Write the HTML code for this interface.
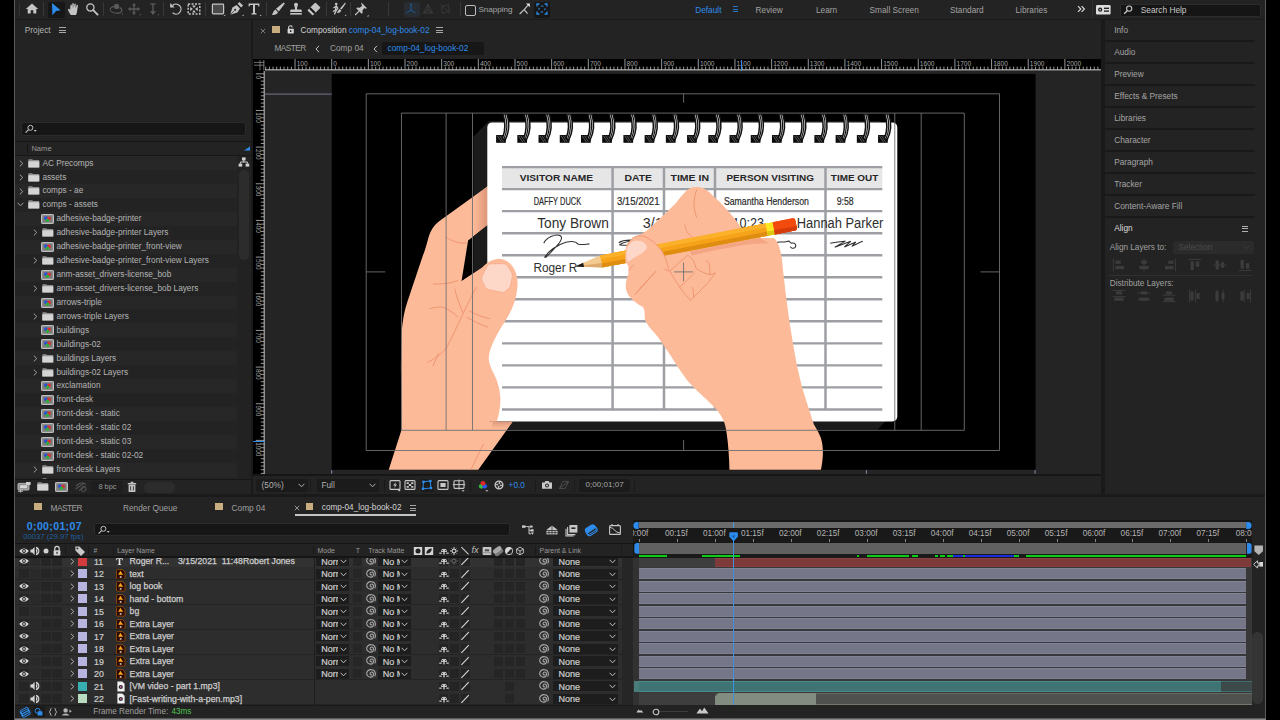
<!DOCTYPE html><html><head><meta charset="utf-8"><title>After Effects</title><style>
html,body{margin:0;padding:0;background:#000;}
body{width:1280px;height:720px;overflow:hidden;position:relative;font-family:"Liberation Sans",sans-serif;}
#app div,#app span,#app svg{position:absolute;}
#app span{white-space:nowrap;}
#app{position:absolute;left:0;top:0;width:1280px;height:720px;overflow:hidden;}
</style></head><body><div id="app">
<div style="left:14px;top:0px;width:1252px;height:720px;background:#5a5a5a;"></div>
<div style="left:15px;top:718.6px;width:1251px;height:1.4px;background:#8a8a8a;"></div>
<div style="left:15px;top:0px;width:1250px;height:718px;background:#1a1a1a;"></div>
<div style="left:15px;top:0px;width:1250px;height:18.5px;background:#232323;"></div>
<div style="left:15px;top:18.5px;width:1250px;height:1px;background:#1a1a1a;"></div>
<div style="left:19px;top:3px;width:1px;height:13px;background:#333;"></div>
<svg style="left:24.200000000000003px;top:1.3000000000000007px;" width="16" height="16" viewBox="-8.0 -8.0 16 16"><path d="M0-5.6 L6.2 0 H4.3 V4.6 H1.3 V1.2 H-1.3 V4.6 H-4.3 V0 H-6.2 Z" fill="#c4c4c4"/></svg>
<div style="left:43.3px;top:2px;width:1px;height:14px;background:#383838;"></div>
<div style="left:47.5px;top:1.5px;width:17px;height:16px;background:#171717;border-radius:2px;"></div>
<svg style="left:47.8px;top:1.1999999999999993px;" width="16" height="16" viewBox="-8.0 -8.0 16 16"><path d="M-4-6 L4.6 1.2 L0.2 2 L-3.6 6.2 Z" fill="#2d8ceb"/></svg>
<svg style="left:65.8px;top:1.3000000000000007px;" width="16" height="16" viewBox="-8.0 -8.0 16 16"><path d="M-3.2 6 C-4.5 4 -5.8 2 -6 0.2 C-5.6-0.8 -4.6-0.4 -3.8 1 L-3.6-3.8 C-3.4-4.8 -2.2-4.8 -2.2-3.8 L-1.9-1 L-1.7-5.2 C-1.5-6.2 -0.3-6.2 -0.3-5.2 L-0.1-1 L0.4-5 C0.6-5.9 1.8-5.8 1.7-4.8 L1.6-0.8 L2.6-3.8 C3-4.7 4.1-4.3 3.9-3.4 L3.2 1.5 C3.1 3.4 2.6 4.8 2 6 Z" fill="#c4c4c4"/></svg>
<svg style="left:84.0px;top:1.0px;" width="16" height="16" viewBox="-8.0 -8.0 16 16"><circle cx="-1.6" cy="-1.6" r="3.6" fill="none" stroke="#c4c4c4" stroke-width="1.3"/><path d="M1.2 1.2 L5.6 5.6" stroke="#c4c4c4" stroke-width="1.9" stroke-linecap="round"/></svg>
<div style="left:103.3px;top:2px;width:1px;height:14px;background:#383838;"></div>
<svg style="left:107.6px;top:1.1999999999999993px;" width="16" height="16" viewBox="-8.0 -8.0 16 16"><circle cx="0.6" cy="-2.6" r="2.6" fill="#5a5a5a"/><path d="M-5.6 1.5 C-6.5-1.5 -3-3 -1-2 M-5.2 2 C-3 5 4 5 5.6 2.2 C6.3 0.5 5 -1 3.6-1.4" fill="none" stroke="#5a5a5a" stroke-width="1.2"/><path d="M5.4 5.4 l1.6 0 l0 -1.6 z" fill="#5a5a5a"/></svg>
<svg style="left:126.4px;top:1.1999999999999993px;" width="16" height="16" viewBox="-8.0 -8.0 16 16"><path d="M0-6 L2.2-3.6 H0.7 V-0.7 H3.6 V-2.2 L6 0 L3.6 2.2 V0.7 H0.7 V3.6 H2.2 L0 6 L-2.2 3.6 H-0.7 V0.7 H-3.6 V2.2 L-6 0 L-3.6-2.2 V-0.7 H-0.7 V-3.6 H-2.2 Z" fill="#5a5a5a"/><path d="M5.4 6.2 l1.6 0 l0 -1.6 z" fill="#5a5a5a"/></svg>
<svg style="left:144.5px;top:1.1999999999999993px;" width="16" height="16" viewBox="-8.0 -8.0 16 16"><path d="M-2.6-5.8H2.6V-4.6H0.7V2.2H3L0 6L-3 2.2H-0.7V-4.6H-2.6Z" fill="#5a5a5a"/><path d="M4.4 6.2 l1.6 0 l0 -1.6 z" fill="#5a5a5a"/></svg>
<div style="left:163.3px;top:2px;width:1px;height:14px;background:#383838;"></div>
<svg style="left:167.8px;top:1.0px;" width="16" height="16" viewBox="-8.0 -8.0 16 16"><path d="M-3.4-3.6 A5 5 0 1 1 -3.4 3.8" fill="none" stroke="#c4c4c4" stroke-width="1.3"/><path d="M-5.8-6 V-1.6 H-1.4 Z" fill="#c4c4c4"/></svg>
<svg style="left:186.4px;top:1.0px;" width="16" height="16" viewBox="-8.0 -8.0 16 16"><rect x="-5.8" y="-5" width="11.6" height="10" fill="none" stroke="#c4c4c4" stroke-width="1.5" stroke-dasharray="2 1.4"/><path d="M0-1 L1.9-3.6 H-1.9 Z M0 1 L1.9 3.6 H-1.9 Z M-1 0 L-3.8-1.9 V1.9 Z M1 0 L3.8-1.9 V1.9 Z" fill="#c4c4c4"/></svg>
<div style="left:205.3px;top:2px;width:1px;height:14px;background:#383838;"></div>
<svg style="left:209.6px;top:1.0px;" width="16" height="16" viewBox="-8.0 -8.0 16 16"><rect x="-5.6" y="-4.9" width="11.2" height="9.8" rx="0.8" fill="#4a4a4a" stroke="#c4c4c4" stroke-width="1.2"/><path d="M5.6 7 l1.6 0 l0 -1.6 z" fill="#c4c4c4"/></svg>
<svg style="left:228.2px;top:1.0px;" width="16" height="16" viewBox="-8.0 -8.0 16 16"><path d="M-5.8 5.8 L-3.6-1.4 L0.6-4 L4 -0.6 L1.4 3.6 Z" fill="#c4c4c4"/><path d="M1.6-5.2 L3.4-7 L7 -3.4 L5.2-1.6 Z" fill="#c4c4c4"/><circle cx="-0.8" cy="0.8" r="1" fill="#232323"/><path d="M-5.8 5.8 L-1.4 1.4" stroke="#232323" stroke-width="0.7"/><path d="M6 7 l1.6 0 l0 -1.6 z" fill="#c4c4c4"/></svg>
<svg style="left:246.4px;top:1.0px;" width="16" height="16" viewBox="-8.0 -8.0 16 16"><path d="M-5.4-5.4 H5.4 V-2.4 H4.4 L4-4 H1 V4 L2.6 4.4 V5.4 H-2.6 V4.4 L-1 4 V-4 H-4 L-4.4-2.4 H-5.4 Z" fill="#c4c4c4"/><path d="M5.6 7 l1.6 0 l0 -1.6 z" fill="#c4c4c4"/></svg>
<div style="left:265.7px;top:2px;width:1px;height:14px;background:#383838;"></div>
<svg style="left:270.0px;top:1.0px;" width="16" height="16" viewBox="-8.0 -8.0 16 16"><path d="M5.6-6.6 L6.8-5.4 L0.8 2.6 L-2 -0.2 Z" fill="#c4c4c4"/><path d="M-2.6 0.6 L0 3.2 C-0.8 5.4 -3.6 6.2 -6.2 5.8 C-4.8 4.6 -4.8 1.8 -2.6 0.6 Z" fill="#c4c4c4"/></svg>
<svg style="left:288.2px;top:1.0px;" width="16" height="16" viewBox="-8.0 -8.0 16 16"><path d="M-1.1-1 C-1.1-2.2 -2-3 -2-4.2 A2 2 0 0 1 2-4.2 C2-3 1.1-2.2 1.1-1 V0.6 H4.6 Q5.8 0.6 5.8 1.8 V3 H-5.8 V1.8 Q-5.8 0.6 -4.6 0.6 H-1.1 Z" fill="#c4c4c4"/><rect x="-5.8" y="4" width="11.6" height="1.6" fill="#c4c4c4"/></svg>
<svg style="left:305.8px;top:1.0px;" width="16" height="16" viewBox="-8.0 -8.0 16 16"><g transform="rotate(45)"><rect x="-3.7" y="-5.6" width="7.4" height="11.2" rx="0.8" fill="#c4c4c4"/><rect x="-3.7" y="1.2" width="7.4" height="2.2" fill="#161616"/></g></svg>
<div style="left:325.7px;top:2px;width:1px;height:14px;background:#383838;"></div>
<svg style="left:330.6px;top:1.0px;" width="16" height="16" viewBox="-8.0 -8.0 16 16"><circle cx="-2.8" cy="-5" r="1.3" fill="#c4c4c4"/><path d="M-5.6-1 L-2.6-3 L-1.2-0.8 L-3 2 L-4.6 5.4 M-2.8-2.6 L-3.6 1.2 L-6 2.6" fill="none" stroke="#c4c4c4" stroke-width="1.3"/><path d="M6.2-6.4 L6.8-5.6 L2.6 0.6 L1 -0.6 Z" fill="#c4c4c4"/><path d="M0.6 0 L2.2 1.4 C1.6 3.4 -0.4 4.2 -2.2 3.8 C-1.2 3 -1 1 0.6 0 Z" fill="#c4c4c4"/><path d="M5.6 7 l1.6 0 l0 -1.6 z" fill="#c4c4c4"/></svg>
<div style="left:349.5px;top:2px;width:1px;height:14px;background:#383838;"></div>
<svg style="left:352.6px;top:0.5999999999999996px;" width="16" height="16" viewBox="-8.0 -8.0 16 16"><path d="M0.4-6.4 L6-0.8 L4.8-0.2 L3.4-1 L1.4 1.6 L1.6 4 L0.6 4.8 L-4.6-0.4 L-3.8-1.4 L-1.4-1.2 L1.2-3.2 L0.4-4.6 Z" fill="#c4c4c4"/><path d="M-2 2.2 L-5.8 6" stroke="#c4c4c4" stroke-width="1.2"/><path d="M6 7.4 l1.6 0 l0 -1.6 z" fill="#c4c4c4"/></svg>
<div style="left:388.3px;top:2px;width:1px;height:14px;background:#383838;"></div>
<div style="left:403.5px;top:2px;width:16.5px;height:15px;background:#282d33;border-radius:2px;"></div>
<svg style="left:403.3px;top:1.4000000000000004px;" width="16" height="16" viewBox="-8.0 -8.0 16 16"><path d="M0-4.6 V1 L-4.6 4 M0 1 L4.6 4" fill="none" stroke="#1f5a96" stroke-width="1"/><circle cx="0" cy="-4.6" r="0.9" fill="#1f5a96"/></svg>
<svg style="left:420.0px;top:1.4000000000000004px;" width="16" height="16" viewBox="-8.0 -8.0 16 16"><path d="M0-4.6 V1 L-4.6 4 M0 1 L4.6 4 M0-4.6 L-4.6 4 H4.6 Z" fill="none" stroke="#3e3e3e" stroke-width="0.9"/></svg>
<svg style="left:437.0px;top:1.1999999999999993px;" width="16" height="16" viewBox="-8.0 -8.0 16 16"><path d="M-3.6-2.4 L3.4-4.4 L4.4 2 L-2.6 4.4 Z M-4.8-5 L5.2 4.6" fill="none" stroke="#3a3a3a" stroke-width="0.9"/></svg>
<div style="left:459.5px;top:2px;width:1px;height:14px;background:#383838;"></div>
<div style="left:465px;top:5px;width:10.6px;height:10.6px;background:transparent;border:1.4px solid #bdbdbd;border-radius:2px;box-sizing:border-box;"></div>
<span style="left:478.4px;top:3.8000000000000007px;font-size:8.1px;line-height:12px;color:#a6a6a6;">Snapping</span>
<svg style="left:516.0px;top:1.0px;" width="16" height="16" viewBox="-8.0 -8.0 16 16"><path d="M-4.4 5 L0.2 0.6 L3.6 4.6 M0.2 0.6 L3.8-3.6" fill="none" stroke="#c4c4c4" stroke-width="1.2"/><path d="M2-5.6 H5.8 V-1.8 Z" fill="#e6e6e6"/></svg>
<div style="left:534.4px;top:1.5px;width:15.6px;height:16px;background:#171717;border-radius:2px;"></div>
<svg style="left:534.2px;top:1.1999999999999993px;" width="16" height="16" viewBox="-8.0 -8.0 16 16"><circle cx="0" cy="0" r="3" fill="none" stroke="#2d8ceb" stroke-width="1.1" stroke-dasharray="2.4 2.3" stroke-dashoffset="1.2"/><path d="M-5-2.6 V-5 H-2.6 M2.6-5 H5 V-2.6 M5 2.6 V5 H2.6 M-2.6 5 H-5 V2.6" fill="none" stroke="#2d8ceb" stroke-width="1.3"/></svg>
<span style="left:695.2px;top:3.8000000000000007px;font-size:8.3px;line-height:12px;color:#2d8ceb;">Default</span>
<div style="left:733px;top:6.0px;width:5.4px;height:1px;background:#2676c8;"></div>
<div style="left:733px;top:8.6px;width:5.4px;height:1px;background:#2676c8;"></div>
<div style="left:733px;top:11.2px;width:5.4px;height:1px;background:#2676c8;"></div>
<span style="left:755.6px;top:3.8000000000000007px;font-size:8.3px;line-height:12px;color:#a2a2a2;">Review</span>
<span style="left:816px;top:3.8000000000000007px;font-size:8.3px;line-height:12px;color:#a2a2a2;">Learn</span>
<span style="left:869.5px;top:3.8000000000000007px;font-size:8.3px;line-height:12px;color:#a2a2a2;">Small Screen</span>
<span style="left:950px;top:3.8000000000000007px;font-size:8.3px;line-height:12px;color:#a2a2a2;">Standard</span>
<span style="left:1015.5px;top:3.8000000000000007px;font-size:8.3px;line-height:12px;color:#a2a2a2;">Libraries</span>
<svg style="left:1072.5px;top:0.8000000000000007px;" width="16" height="16" viewBox="-8.0 -8.0 16 16"><path d="M-3-2.8 L-0.2 0 L-3 2.8 M0.6-2.8 L3.4 0 L0.6 2.8" fill="none" stroke="#d6d6d6" stroke-width="1.2"/></svg>
<div style="left:1092.3px;top:1px;width:1px;height:17px;background:#303030;"></div>
<svg style="left:1096.4px;top:5.4px" width="15" height="10" viewBox="0 0 15 10"><rect x="0" y="0" width="14.6" height="9.4" rx="1.2" fill="#dcdcdc"/><circle cx="4.2" cy="4.7" r="2.1" fill="#232323"/><circle cx="4.2" cy="4.7" r="0.8" fill="#dcdcdc"/><rect x="8" y="2.6" width="5" height="1.4" fill="#232323"/><rect x="8" y="5.4" width="5" height="1.4" fill="#232323"/></svg>
<div style="left:1120px;top:3.6px;width:141px;height:13px;background:#151515;border:1px solid #2c2c2c;border-radius:2px;box-sizing:border-box;"></div>
<svg style="left:1120.4px;top:1.5999999999999996px;" width="16" height="16" viewBox="-8.0 -8.0 16 16"><circle cx="1.2" cy="-1.4" r="2.6" fill="none" stroke="#c8c8c8" stroke-width="1.1"/><path d="M-0.8 0.8 L-3.8 3.8" stroke="#c8c8c8" stroke-width="1.3"/></svg>
<span style="left:1140.8px;top:4.0px;font-size:8.3px;line-height:12px;color:#c8c8c8;">Search Help</span>
<div style="left:15px;top:19.5px;width:235.6px;height:474.5px;background:#232323;"></div>
<span style="left:24.8px;top:24.0px;font-size:8.3px;line-height:12px;color:#b4b4b4;">Project</span>
<div style="left:59.2px;top:27.2px;width:6.6px;height:1px;background:#a8a8a8;"></div>
<div style="left:59.2px;top:29.7px;width:6.6px;height:1px;background:#a8a8a8;"></div>
<div style="left:59.2px;top:32.2px;width:6.6px;height:1px;background:#a8a8a8;"></div>
<div style="left:21px;top:121.5px;width:224.5px;height:14px;background:#161616;border:1px solid #2b2b2b;border-radius:2px;box-sizing:border-box;"></div>
<svg style="left:24px;top:123.5px" width="14" height="10" viewBox="0 0 14 10"><circle cx="6.4" cy="3.8" r="2.5" fill="none" stroke="#c0c0c0" stroke-width="1"/><path d="M4.6 5.6 L1.6 8.6" stroke="#c0c0c0" stroke-width="1.2"/><path d="M9.6 6 h3.2 l-1.6 1.8 z" fill="#c0c0c0"/></svg>
<div style="left:15px;top:141px;width:235.6px;height:1.4px;background:#161616;"></div>
<div style="left:15px;top:155px;width:235.6px;height:1.2px;background:#161616;"></div>
<div style="left:26.8px;top:144px;width:1px;height:9px;background:#161616;"></div>
<span style="left:31.4px;top:142.6px;font-size:7.6px;line-height:12px;color:#9a9a9a;">Name</span>
<svg style="left:243.5px;top:146px" width="6" height="5" viewBox="0 0 6 5"><path d="M0 4.6 L6 0.4 V4.6 Z" fill="#2d8ceb"/></svg>
<div style="left:237.2px;top:156.2px;width:13.4px;height:322px;background:#222222;"></div>
<div style="left:238.6px;top:169.5px;width:10.2px;height:90px;background:#2c2c2c;border-radius:5px;"></div>
<svg style="left:237.5px;top:157px" width="12" height="11" viewBox="0 0 12 11"><g fill="#d0d0d0"><rect x="4" y="0.4" width="3.6" height="3"/><rect x="0.6" y="6.6" width="3.6" height="3"/><rect x="7.6" y="6.6" width="3.6" height="3"/></g><path d="M5.8 3 V5 M2.4 6.6 V5 H9.4 V6.6" fill="none" stroke="#d0d0d0" stroke-width="1"/></svg>
<div style="left:15px;top:156.23499999999999px;width:222.2px;height:13.93px;background:#272727;"></div>
<svg style="left:18.6px;top:159.7px" width="5" height="7" viewBox="0 0 5 7"><path d="M0.8 0.6 L3.8 3.5 L0.8 6.4" fill="none" stroke="#a0a0a0" stroke-width="1"/></svg>
<svg style="left:28px;top:158.6px" width="12" height="9" viewBox="0 0 12 9"><path d="M0.3 1 Q0.3 0.2 1 0.2 H4.2 L5 1 H10.6 Q11.3 1 11.3 1.8 V8 Q11.3 8.6 10.6 8.6 H1 Q0.3 8.6 0.3 8 Z" fill="#8e8e8e"/><rect x="0.3" y="2.2" width="11" height="6.4" rx="0.6" fill="#d4d4d4"/></svg>
<span style="left:42.4px;top:157.6px;font-size:8.27px;line-height:12px;color:#b4b4b4;">AC Precomps</span>
<svg style="left:18.6px;top:173.63px" width="5" height="7" viewBox="0 0 5 7"><path d="M0.8 0.6 L3.8 3.5 L0.8 6.4" fill="none" stroke="#a0a0a0" stroke-width="1"/></svg>
<svg style="left:28px;top:172.53px" width="12" height="9" viewBox="0 0 12 9"><path d="M0.3 1 Q0.3 0.2 1 0.2 H4.2 L5 1 H10.6 Q11.3 1 11.3 1.8 V8 Q11.3 8.6 10.6 8.6 H1 Q0.3 8.6 0.3 8 Z" fill="#8e8e8e"/><rect x="0.3" y="2.2" width="11" height="6.4" rx="0.6" fill="#d4d4d4"/></svg>
<span style="left:42.4px;top:171.53px;font-size:8.27px;line-height:12px;color:#b4b4b4;">assets</span>
<div style="left:15px;top:184.095px;width:222.2px;height:13.93px;background:#272727;"></div>
<svg style="left:18.6px;top:187.56px" width="5" height="7" viewBox="0 0 5 7"><path d="M0.8 0.6 L3.8 3.5 L0.8 6.4" fill="none" stroke="#a0a0a0" stroke-width="1"/></svg>
<svg style="left:28px;top:186.46px" width="12" height="9" viewBox="0 0 12 9"><path d="M0.3 1 Q0.3 0.2 1 0.2 H4.2 L5 1 H10.6 Q11.3 1 11.3 1.8 V8 Q11.3 8.6 10.6 8.6 H1 Q0.3 8.6 0.3 8 Z" fill="#8e8e8e"/><rect x="0.3" y="2.2" width="11" height="6.4" rx="0.6" fill="#d4d4d4"/></svg>
<span style="left:42.4px;top:185.46px;font-size:8.27px;line-height:12px;color:#b4b4b4;">comps - ae</span>
<svg style="left:17.4px;top:202.48999999999998px" width="7" height="5" viewBox="0 0 7 5"><path d="M0.6 0.8 L3.5 3.8 L6.4 0.8" fill="none" stroke="#a0a0a0" stroke-width="1"/></svg>
<svg style="left:28px;top:200.39px" width="12" height="9" viewBox="0 0 12 9"><path d="M0.3 1 Q0.3 0.2 1 0.2 H4.2 L5 1 H10.6 Q11.3 1 11.3 1.8 V8 Q11.3 8.6 10.6 8.6 H1 Q0.3 8.6 0.3 8 Z" fill="#8e8e8e"/><rect x="0.3" y="2.2" width="11" height="6.4" rx="0.6" fill="#d4d4d4"/></svg>
<span style="left:42.4px;top:199.39px;font-size:8.27px;line-height:12px;color:#b4b4b4;">comps - assets</span>
<div style="left:15px;top:211.95499999999998px;width:222.2px;height:13.93px;background:#272727;"></div>
<svg style="left:41px;top:213.92px" width="13" height="10" viewBox="0 0 13 10"><rect x="0.4" y="0.4" width="12.2" height="9.2" rx="1" fill="#9a9a9a" stroke="#e4e4e4" stroke-width="0.8"/><rect x="1.6" y="1.6" width="9.8" height="6.8" fill="#7c7c7c"/><circle cx="5" cy="4.2" r="1.9" fill="#2c50d8"/><circle cx="8" cy="4.4" r="1.9" fill="#d83030"/><circle cx="6.4" cy="6.2" r="1.8" fill="#2fae3a"/></svg>
<span style="left:56.4px;top:213.32px;font-size:8.27px;line-height:12px;color:#b4b4b4;">adhesive-badge-printer</span>
<svg style="left:32.6px;top:229.35px" width="5" height="7" viewBox="0 0 5 7"><path d="M0.8 0.6 L3.8 3.5 L0.8 6.4" fill="none" stroke="#a0a0a0" stroke-width="1"/></svg>
<svg style="left:42px;top:228.25px" width="12" height="9" viewBox="0 0 12 9"><path d="M0.3 1 Q0.3 0.2 1 0.2 H4.2 L5 1 H10.6 Q11.3 1 11.3 1.8 V8 Q11.3 8.6 10.6 8.6 H1 Q0.3 8.6 0.3 8 Z" fill="#8e8e8e"/><rect x="0.3" y="2.2" width="11" height="6.4" rx="0.6" fill="#d4d4d4"/></svg>
<span style="left:56.4px;top:227.25px;font-size:8.27px;line-height:12px;color:#b4b4b4;">adhesive-badge-printer Layers</span>
<div style="left:15px;top:239.81499999999997px;width:222.2px;height:13.93px;background:#272727;"></div>
<svg style="left:41px;top:241.77999999999997px" width="13" height="10" viewBox="0 0 13 10"><rect x="0.4" y="0.4" width="12.2" height="9.2" rx="1" fill="#9a9a9a" stroke="#e4e4e4" stroke-width="0.8"/><rect x="1.6" y="1.6" width="9.8" height="6.8" fill="#7c7c7c"/><circle cx="5" cy="4.2" r="1.9" fill="#2c50d8"/><circle cx="8" cy="4.4" r="1.9" fill="#d83030"/><circle cx="6.4" cy="6.2" r="1.8" fill="#2fae3a"/></svg>
<span style="left:56.4px;top:241.17999999999998px;font-size:8.27px;line-height:12px;color:#b4b4b4;">adhesive-badge-printer_front-view</span>
<svg style="left:32.6px;top:257.21px" width="5" height="7" viewBox="0 0 5 7"><path d="M0.8 0.6 L3.8 3.5 L0.8 6.4" fill="none" stroke="#a0a0a0" stroke-width="1"/></svg>
<svg style="left:42px;top:256.10999999999996px" width="12" height="9" viewBox="0 0 12 9"><path d="M0.3 1 Q0.3 0.2 1 0.2 H4.2 L5 1 H10.6 Q11.3 1 11.3 1.8 V8 Q11.3 8.6 10.6 8.6 H1 Q0.3 8.6 0.3 8 Z" fill="#8e8e8e"/><rect x="0.3" y="2.2" width="11" height="6.4" rx="0.6" fill="#d4d4d4"/></svg>
<span style="left:56.4px;top:255.10999999999996px;font-size:8.27px;line-height:12px;color:#b4b4b4;">adhesive-badge-printer_front-view Layers</span>
<div style="left:15px;top:267.675px;width:222.2px;height:13.93px;background:#272727;"></div>
<svg style="left:41px;top:269.64px" width="13" height="10" viewBox="0 0 13 10"><rect x="0.4" y="0.4" width="12.2" height="9.2" rx="1" fill="#9a9a9a" stroke="#e4e4e4" stroke-width="0.8"/><rect x="1.6" y="1.6" width="9.8" height="6.8" fill="#7c7c7c"/><circle cx="5" cy="4.2" r="1.9" fill="#2c50d8"/><circle cx="8" cy="4.4" r="1.9" fill="#d83030"/><circle cx="6.4" cy="6.2" r="1.8" fill="#2fae3a"/></svg>
<span style="left:56.4px;top:269.03999999999996px;font-size:8.27px;line-height:12px;color:#b4b4b4;">anm-asset_drivers-license_bob</span>
<svg style="left:32.6px;top:285.07px" width="5" height="7" viewBox="0 0 5 7"><path d="M0.8 0.6 L3.8 3.5 L0.8 6.4" fill="none" stroke="#a0a0a0" stroke-width="1"/></svg>
<svg style="left:42px;top:283.96999999999997px" width="12" height="9" viewBox="0 0 12 9"><path d="M0.3 1 Q0.3 0.2 1 0.2 H4.2 L5 1 H10.6 Q11.3 1 11.3 1.8 V8 Q11.3 8.6 10.6 8.6 H1 Q0.3 8.6 0.3 8 Z" fill="#8e8e8e"/><rect x="0.3" y="2.2" width="11" height="6.4" rx="0.6" fill="#d4d4d4"/></svg>
<span style="left:56.4px;top:282.96999999999997px;font-size:8.27px;line-height:12px;color:#b4b4b4;">anm-asset_drivers-license_bob Layers</span>
<div style="left:15px;top:295.535px;width:222.2px;height:13.93px;background:#272727;"></div>
<svg style="left:41px;top:297.5px" width="13" height="10" viewBox="0 0 13 10"><rect x="0.4" y="0.4" width="12.2" height="9.2" rx="1" fill="#9a9a9a" stroke="#e4e4e4" stroke-width="0.8"/><rect x="1.6" y="1.6" width="9.8" height="6.8" fill="#7c7c7c"/><circle cx="5" cy="4.2" r="1.9" fill="#2c50d8"/><circle cx="8" cy="4.4" r="1.9" fill="#d83030"/><circle cx="6.4" cy="6.2" r="1.8" fill="#2fae3a"/></svg>
<span style="left:56.4px;top:296.9px;font-size:8.27px;line-height:12px;color:#b4b4b4;">arrows-triple</span>
<svg style="left:32.6px;top:312.92999999999995px" width="5" height="7" viewBox="0 0 5 7"><path d="M0.8 0.6 L3.8 3.5 L0.8 6.4" fill="none" stroke="#a0a0a0" stroke-width="1"/></svg>
<svg style="left:42px;top:311.8299999999999px" width="12" height="9" viewBox="0 0 12 9"><path d="M0.3 1 Q0.3 0.2 1 0.2 H4.2 L5 1 H10.6 Q11.3 1 11.3 1.8 V8 Q11.3 8.6 10.6 8.6 H1 Q0.3 8.6 0.3 8 Z" fill="#8e8e8e"/><rect x="0.3" y="2.2" width="11" height="6.4" rx="0.6" fill="#d4d4d4"/></svg>
<span style="left:56.4px;top:310.8299999999999px;font-size:8.27px;line-height:12px;color:#b4b4b4;">arrows-triple Layers</span>
<div style="left:15px;top:323.39500000000004px;width:222.2px;height:13.93px;background:#272727;"></div>
<svg style="left:41px;top:325.36px" width="13" height="10" viewBox="0 0 13 10"><rect x="0.4" y="0.4" width="12.2" height="9.2" rx="1" fill="#9a9a9a" stroke="#e4e4e4" stroke-width="0.8"/><rect x="1.6" y="1.6" width="9.8" height="6.8" fill="#7c7c7c"/><circle cx="5" cy="4.2" r="1.9" fill="#2c50d8"/><circle cx="8" cy="4.4" r="1.9" fill="#d83030"/><circle cx="6.4" cy="6.2" r="1.8" fill="#2fae3a"/></svg>
<span style="left:56.4px;top:324.76px;font-size:8.27px;line-height:12px;color:#b4b4b4;">buildings</span>
<svg style="left:41px;top:339.28999999999996px" width="13" height="10" viewBox="0 0 13 10"><rect x="0.4" y="0.4" width="12.2" height="9.2" rx="1" fill="#9a9a9a" stroke="#e4e4e4" stroke-width="0.8"/><rect x="1.6" y="1.6" width="9.8" height="6.8" fill="#7c7c7c"/><circle cx="5" cy="4.2" r="1.9" fill="#2c50d8"/><circle cx="8" cy="4.4" r="1.9" fill="#d83030"/><circle cx="6.4" cy="6.2" r="1.8" fill="#2fae3a"/></svg>
<span style="left:56.4px;top:338.68999999999994px;font-size:8.27px;line-height:12px;color:#b4b4b4;">buildings-02</span>
<div style="left:15px;top:351.255px;width:222.2px;height:13.93px;background:#272727;"></div>
<svg style="left:32.6px;top:354.71999999999997px" width="5" height="7" viewBox="0 0 5 7"><path d="M0.8 0.6 L3.8 3.5 L0.8 6.4" fill="none" stroke="#a0a0a0" stroke-width="1"/></svg>
<svg style="left:42px;top:353.61999999999995px" width="12" height="9" viewBox="0 0 12 9"><path d="M0.3 1 Q0.3 0.2 1 0.2 H4.2 L5 1 H10.6 Q11.3 1 11.3 1.8 V8 Q11.3 8.6 10.6 8.6 H1 Q0.3 8.6 0.3 8 Z" fill="#8e8e8e"/><rect x="0.3" y="2.2" width="11" height="6.4" rx="0.6" fill="#d4d4d4"/></svg>
<span style="left:56.4px;top:352.61999999999995px;font-size:8.27px;line-height:12px;color:#b4b4b4;">buildings Layers</span>
<svg style="left:32.6px;top:368.65px" width="5" height="7" viewBox="0 0 5 7"><path d="M0.8 0.6 L3.8 3.5 L0.8 6.4" fill="none" stroke="#a0a0a0" stroke-width="1"/></svg>
<svg style="left:42px;top:367.54999999999995px" width="12" height="9" viewBox="0 0 12 9"><path d="M0.3 1 Q0.3 0.2 1 0.2 H4.2 L5 1 H10.6 Q11.3 1 11.3 1.8 V8 Q11.3 8.6 10.6 8.6 H1 Q0.3 8.6 0.3 8 Z" fill="#8e8e8e"/><rect x="0.3" y="2.2" width="11" height="6.4" rx="0.6" fill="#d4d4d4"/></svg>
<span style="left:56.4px;top:366.54999999999995px;font-size:8.27px;line-height:12px;color:#b4b4b4;">buildings-02 Layers</span>
<div style="left:15px;top:379.115px;width:222.2px;height:13.93px;background:#272727;"></div>
<svg style="left:41px;top:381.08px" width="13" height="10" viewBox="0 0 13 10"><rect x="0.4" y="0.4" width="12.2" height="9.2" rx="1" fill="#9a9a9a" stroke="#e4e4e4" stroke-width="0.8"/><rect x="1.6" y="1.6" width="9.8" height="6.8" fill="#7c7c7c"/><circle cx="5" cy="4.2" r="1.9" fill="#2c50d8"/><circle cx="8" cy="4.4" r="1.9" fill="#d83030"/><circle cx="6.4" cy="6.2" r="1.8" fill="#2fae3a"/></svg>
<span style="left:56.4px;top:380.47999999999996px;font-size:8.27px;line-height:12px;color:#b4b4b4;">exclamation</span>
<svg style="left:41px;top:395.01px" width="13" height="10" viewBox="0 0 13 10"><rect x="0.4" y="0.4" width="12.2" height="9.2" rx="1" fill="#9a9a9a" stroke="#e4e4e4" stroke-width="0.8"/><rect x="1.6" y="1.6" width="9.8" height="6.8" fill="#7c7c7c"/><circle cx="5" cy="4.2" r="1.9" fill="#2c50d8"/><circle cx="8" cy="4.4" r="1.9" fill="#d83030"/><circle cx="6.4" cy="6.2" r="1.8" fill="#2fae3a"/></svg>
<span style="left:56.4px;top:394.40999999999997px;font-size:8.27px;line-height:12px;color:#b4b4b4;">front-desk</span>
<div style="left:15px;top:406.975px;width:222.2px;height:13.93px;background:#272727;"></div>
<svg style="left:41px;top:408.94px" width="13" height="10" viewBox="0 0 13 10"><rect x="0.4" y="0.4" width="12.2" height="9.2" rx="1" fill="#9a9a9a" stroke="#e4e4e4" stroke-width="0.8"/><rect x="1.6" y="1.6" width="9.8" height="6.8" fill="#7c7c7c"/><circle cx="5" cy="4.2" r="1.9" fill="#2c50d8"/><circle cx="8" cy="4.4" r="1.9" fill="#d83030"/><circle cx="6.4" cy="6.2" r="1.8" fill="#2fae3a"/></svg>
<span style="left:56.4px;top:408.34px;font-size:8.27px;line-height:12px;color:#b4b4b4;">front-desk - static</span>
<svg style="left:41px;top:422.87px" width="13" height="10" viewBox="0 0 13 10"><rect x="0.4" y="0.4" width="12.2" height="9.2" rx="1" fill="#9a9a9a" stroke="#e4e4e4" stroke-width="0.8"/><rect x="1.6" y="1.6" width="9.8" height="6.8" fill="#7c7c7c"/><circle cx="5" cy="4.2" r="1.9" fill="#2c50d8"/><circle cx="8" cy="4.4" r="1.9" fill="#d83030"/><circle cx="6.4" cy="6.2" r="1.8" fill="#2fae3a"/></svg>
<span style="left:56.4px;top:422.27px;font-size:8.27px;line-height:12px;color:#b4b4b4;">front-desk - static 02</span>
<div style="left:15px;top:434.83500000000004px;width:222.2px;height:13.93px;background:#272727;"></div>
<svg style="left:41px;top:436.8px" width="13" height="10" viewBox="0 0 13 10"><rect x="0.4" y="0.4" width="12.2" height="9.2" rx="1" fill="#9a9a9a" stroke="#e4e4e4" stroke-width="0.8"/><rect x="1.6" y="1.6" width="9.8" height="6.8" fill="#7c7c7c"/><circle cx="5" cy="4.2" r="1.9" fill="#2c50d8"/><circle cx="8" cy="4.4" r="1.9" fill="#d83030"/><circle cx="6.4" cy="6.2" r="1.8" fill="#2fae3a"/></svg>
<span style="left:56.4px;top:436.2px;font-size:8.27px;line-height:12px;color:#b4b4b4;">front-desk - static 03</span>
<svg style="left:41px;top:450.72999999999996px" width="13" height="10" viewBox="0 0 13 10"><rect x="0.4" y="0.4" width="12.2" height="9.2" rx="1" fill="#9a9a9a" stroke="#e4e4e4" stroke-width="0.8"/><rect x="1.6" y="1.6" width="9.8" height="6.8" fill="#7c7c7c"/><circle cx="5" cy="4.2" r="1.9" fill="#2c50d8"/><circle cx="8" cy="4.4" r="1.9" fill="#d83030"/><circle cx="6.4" cy="6.2" r="1.8" fill="#2fae3a"/></svg>
<span style="left:56.4px;top:450.12999999999994px;font-size:8.27px;line-height:12px;color:#b4b4b4;">front-desk - static 02-02</span>
<div style="left:15px;top:462.695px;width:222.2px;height:13.93px;background:#272727;"></div>
<svg style="left:32.6px;top:466.15999999999997px" width="5" height="7" viewBox="0 0 5 7"><path d="M0.8 0.6 L3.8 3.5 L0.8 6.4" fill="none" stroke="#a0a0a0" stroke-width="1"/></svg>
<svg style="left:42px;top:465.05999999999995px" width="12" height="9" viewBox="0 0 12 9"><path d="M0.3 1 Q0.3 0.2 1 0.2 H4.2 L5 1 H10.6 Q11.3 1 11.3 1.8 V8 Q11.3 8.6 10.6 8.6 H1 Q0.3 8.6 0.3 8 Z" fill="#8e8e8e"/><rect x="0.3" y="2.2" width="11" height="6.4" rx="0.6" fill="#d4d4d4"/></svg>
<span style="left:56.4px;top:464.05999999999995px;font-size:8.27px;line-height:12px;color:#b4b4b4;">front-desk Layers</span>
<svg style="left:42px;top:477.79999999999995px" width="12" height="9" viewBox="0 0 12 9"><path d="M0.3 1 Q0.3 0.2 1 0.2 H4.2 L5 1 H10.6 Q11.3 1 11.3 1.8 V8 Q11.3 8.6 10.6 8.6 H1 Q0.3 8.6 0.3 8 Z" fill="#8e8e8e"/><rect x="0.3" y="2.2" width="11" height="6.4" rx="0.6" fill="#d4d4d4"/></svg>
<div style="left:15px;top:478.6px;width:235.6px;height:1.2px;background:#161616;"></div>
<div style="left:15px;top:479.8px;width:235.6px;height:14.2px;background:#232323;"></div>
<svg style="left:16.4px;top:478.8px;" width="16" height="16" viewBox="-8.0 -8.0 16 16"><rect x="-6" y="-3.6" width="11" height="6.6" rx="0.8" fill="#8c8c8c" stroke="#d0d0d0" stroke-width="0.8"/><rect x="-4" y="-1.8" width="7" height="3" fill="#d8d8d8"/><path d="M-6 4.2 H-1 M-3.6 3V5.4" stroke="#d0d0d0" stroke-width="0.9"/><rect x="2" y="-5" width="4.6" height="3" fill="#d0d0d0"/></svg>
<svg style="left:37.2px;top:482.0px" width="12" height="9" viewBox="0 0 12 9"><path d="M0.3 1 Q0.3 0.2 1 0.2 H4.2 L5 1 H10.6 Q11.3 1 11.3 1.8 V8 Q11.3 8.6 10.6 8.6 H1 Q0.3 8.6 0.3 8 Z" fill="#8e8e8e"/><rect x="0.3" y="2.2" width="11" height="6.4" rx="0.6" fill="#d4d4d4"/></svg>
<svg style="left:55px;top:481.8px" width="13" height="10" viewBox="0 0 13 10"><rect x="0.4" y="0.4" width="12.2" height="9.2" rx="1" fill="#9a9a9a" stroke="#e4e4e4" stroke-width="0.8"/><rect x="1.6" y="1.6" width="9.8" height="6.8" fill="#7c7c7c"/><circle cx="5" cy="4.2" r="1.9" fill="#2c50d8"/><circle cx="8" cy="4.4" r="1.9" fill="#d83030"/><circle cx="6.4" cy="6.2" r="1.8" fill="#2fae3a"/></svg>
<svg style="left:72.6px;top:478.8px;" width="16" height="16" viewBox="-8.0 -8.0 16 16"><path d="M-5-1 C-2-4 2-4.6 5-2.6 M-5.4 2 L3-3.6 M-2 3.6 L4.6-1" fill="none" stroke="#555" stroke-width="1.1"/><circle cx="2.6" cy="2" r="2.4" fill="none" stroke="#555" stroke-width="1"/></svg>
<div style="left:90.6px;top:480.8px;width:32px;height:12px;background:#1e1e1e;border-radius:2px;"></div>
<span style="left:98.4px;top:481.0px;font-size:7.4px;line-height:12px;color:#9a9a9a;">8 bpc</span>
<svg style="left:124.4px;top:478.8px;" width="16" height="16" viewBox="-8.0 -8.0 16 16"><path d="M-3.4-2.4 H3.4 V4.4 Q3.4 5 2.8 5 H-2.8 Q-3.4 5 -3.4 4.4 Z" fill="#c4c4c4"/><path d="M-4.2-3.4 H4.2 M-1.4-4.6 H1.4" stroke="#c4c4c4" stroke-width="1.1"/><path d="M-1.4-0.8V3.4 M1.4-0.8V3.4" stroke="#232323" stroke-width="0.8"/></svg>
<div style="left:143.8px;top:482.4px;width:31.4px;height:10.2px;background:#2c2c2c;border-radius:5.1px;"></div>
<div style="left:253.2px;top:19.5px;width:848.2px;height:474.5px;background:#232323;"></div>
<svg style="left:259.8px;top:27.6px" width="6" height="6" viewBox="0 0 6 6"><path d="M0.8 0.8 L5.2 5.2 M5.2 0.8 L0.8 5.2" stroke="#858585" stroke-width="0.9"/></svg>
<div style="left:272px;top:25.6px;width:7.6px;height:7.6px;background:#c8ae7e;"></div>
<svg style="left:286.6px;top:24.6px" width="8" height="9" viewBox="0 0 8 9"><path d="M1.6 4 V2.6 A1.8 1.8 0 0 1 5.2 2.4" fill="none" stroke="#d8d8d8" stroke-width="1.1"/><rect x="0.6" y="3.8" width="6.2" height="4.6" rx="0.6" fill="#d8d8d8"/><rect x="3" y="5.2" width="1.4" height="1.8" fill="#232323"/></svg>
<span style="left:300.4px;top:24.0px;font-size:8.3px;line-height:12px;color:#d2d2d2;">Composition</span>
<span style="left:348.8px;top:24.0px;font-size:8.3px;line-height:12px;color:#2d8ceb;">comp-04_log-book-02</span>
<div style="left:436.4px;top:27.2px;width:6.2px;height:1px;background:#a8a8a8;"></div>
<div style="left:436.4px;top:29.7px;width:6.2px;height:1px;background:#a8a8a8;"></div>
<div style="left:436.4px;top:32.2px;width:6.2px;height:1px;background:#a8a8a8;"></div>
<span style="left:274.4px;top:42.4px;font-size:8.3px;line-height:12px;color:#a0a0a0;letter-spacing:-0.55px;">MASTER</span>
<span style="left:330px;top:42.4px;font-size:8.3px;line-height:12px;color:#a0a0a0;">Comp 04</span>
<svg style="left:315px;top:44.6px" width="5" height="8" viewBox="0 0 5 8"><path d="M4 0.8 L1 4 L4 7.2" fill="none" stroke="#c0c0c0" stroke-width="1"/></svg>
<svg style="left:373.4px;top:44.6px" width="5" height="8" viewBox="0 0 5 8"><path d="M4 0.8 L1 4 L4 7.2" fill="none" stroke="#c0c0c0" stroke-width="1"/></svg>
<div style="left:381.6px;top:42.4px;width:102px;height:12.4px;background:#171717;border-radius:2px;"></div>
<span style="left:387.6px;top:42.4px;font-size:8.3px;line-height:12px;color:#2d8ceb;">comp-04_log-book-02</span>
<div style="left:253.2px;top:59.4px;width:848.2px;height:11.9px;background:#000;"></div>
<div style="left:253.2px;top:59.4px;width:12px;height:415px;background:#000;"></div>
<svg style="left:253.2px;top:59.4px" width="848.2" height="12" viewBox="0 0 848.2 12"><path d="M12.71 7.6V11M16.38 7.6V11M20.04 7.6V11M23.71 7.6V11M27.38 7.6V11M31.04 7.6V11M34.71 7.6V11M38.37 7.6V11M42.04 0V11M45.71 7.6V11M49.37 7.6V11M53.04 7.6V11M56.70 7.6V11M60.37 7.6V11M64.04 7.6V11M67.70 7.6V11M71.37 7.6V11M75.03 7.6V11M78.70 0V11M82.37 7.6V11M86.03 7.6V11M89.70 7.6V11M93.36 7.6V11M97.03 7.6V11M100.70 7.6V11M104.36 7.6V11M108.03 7.6V11M111.69 7.6V11M115.36 0V11M119.03 7.6V11M122.69 7.6V11M126.36 7.6V11M130.02 7.6V11M133.69 7.6V11M137.36 7.6V11M141.02 7.6V11M144.69 7.6V11M148.35 7.6V11M152.02 0V11M155.69 7.6V11M159.35 7.6V11M163.02 7.6V11M166.68 7.6V11M170.35 7.6V11M174.02 7.6V11M177.68 7.6V11M181.35 7.6V11M185.01 7.6V11M188.68 0V11M192.35 7.6V11M196.01 7.6V11M199.68 7.6V11M203.34 7.6V11M207.01 7.6V11M210.68 7.6V11M214.34 7.6V11M218.01 7.6V11M221.67 7.6V11M225.34 0V11M229.01 7.6V11M232.67 7.6V11M236.34 7.6V11M240.00 7.6V11M243.67 7.6V11M247.34 7.6V11M251.00 7.6V11M254.67 7.6V11M258.33 7.6V11M262.00 0V11M265.67 7.6V11M269.33 7.6V11M273.00 7.6V11M276.66 7.6V11M280.33 7.6V11M284.00 7.6V11M287.66 7.6V11M291.33 7.6V11M294.99 7.6V11M298.66 0V11M302.33 7.6V11M305.99 7.6V11M309.66 7.6V11M313.32 7.6V11M316.99 7.6V11M320.66 7.6V11M324.32 7.6V11M327.99 7.6V11M331.65 7.6V11M335.32 0V11M338.99 7.6V11M342.65 7.6V11M346.32 7.6V11M349.98 7.6V11M353.65 7.6V11M357.32 7.6V11M360.98 7.6V11M364.65 7.6V11M368.31 7.6V11M371.98 0V11M375.65 7.6V11M379.31 7.6V11M382.98 7.6V11M386.64 7.6V11M390.31 7.6V11M393.98 7.6V11M397.64 7.6V11M401.31 7.6V11M404.97 7.6V11M408.64 0V11M412.31 7.6V11M415.97 7.6V11M419.64 7.6V11M423.30 7.6V11M426.97 7.6V11M430.64 7.6V11M434.30 7.6V11M437.97 7.6V11M441.63 7.6V11M445.30 0V11M448.97 7.6V11M452.63 7.6V11M456.30 7.6V11M459.96 7.6V11M463.63 7.6V11M467.30 7.6V11M470.96 7.6V11M474.63 7.6V11M478.29 7.6V11M481.96 0V11M485.63 7.6V11M489.29 7.6V11M492.96 7.6V11M496.62 7.6V11M500.29 7.6V11M503.96 7.6V11M507.62 7.6V11M511.29 7.6V11M514.95 7.6V11M518.62 0V11M522.29 7.6V11M525.95 7.6V11M529.62 7.6V11M533.28 7.6V11M536.95 7.6V11M540.62 7.6V11M544.28 7.6V11M547.95 7.6V11M551.61 7.6V11M555.28 0V11M558.95 7.6V11M562.61 7.6V11M566.28 7.6V11M569.94 7.6V11M573.61 7.6V11M577.28 7.6V11M580.94 7.6V11M584.61 7.6V11M588.27 7.6V11M591.94 0V11M595.61 7.6V11M599.27 7.6V11M602.94 7.6V11M606.60 7.6V11M610.27 7.6V11M613.94 7.6V11M617.60 7.6V11M621.27 7.6V11M624.93 7.6V11M628.60 0V11M632.27 7.6V11M635.93 7.6V11M639.60 7.6V11M643.26 7.6V11M646.93 7.6V11M650.60 7.6V11M654.26 7.6V11M657.93 7.6V11M661.59 7.6V11M665.26 0V11M668.93 7.6V11M672.59 7.6V11M676.26 7.6V11M679.92 7.6V11M683.59 7.6V11M687.26 7.6V11M690.92 7.6V11M694.59 7.6V11M698.25 7.6V11M701.92 0V11M705.59 7.6V11M709.25 7.6V11M712.92 7.6V11M716.58 7.6V11M720.25 7.6V11M723.92 7.6V11M727.58 7.6V11M731.25 7.6V11M734.91 7.6V11M738.58 0V11M742.25 7.6V11M745.91 7.6V11M749.58 7.6V11M753.24 7.6V11M756.91 7.6V11M760.58 7.6V11M764.24 7.6V11M767.91 7.6V11M771.57 7.6V11M775.24 0V11M778.91 7.6V11M782.57 7.6V11M786.24 7.6V11M789.90 7.6V11M793.57 7.6V11M797.24 7.6V11M800.90 7.6V11M804.57 7.6V11M808.23 7.6V11M811.90 0V11M815.57 7.6V11M819.23 7.6V11M822.90 7.6V11M826.56 7.6V11M830.23 7.6V11M833.90 7.6V11M837.56 7.6V11M841.23 7.6V11M844.89 7.6V11" stroke="#a8a8a8" stroke-width="0.9" fill="none"/><path d="M12 10.9H848.2" stroke="#bdbdbd" stroke-width="1.1"/><path d="M1 6.2H11.4M7 1V11.4 M1 3.4H11.4M10.8 1V11.4" stroke="#8c8c8c" stroke-width="0.8" fill="none"/><text x="43.64" y="6.6" font-size="6.6" fill="#a4a4a4" font-family="Liberation Sans">100</text><text x="80.30" y="6.6" font-size="6.6" fill="#a4a4a4" font-family="Liberation Sans">0</text><text x="116.96" y="6.6" font-size="6.6" fill="#a4a4a4" font-family="Liberation Sans">100</text><text x="153.62" y="6.6" font-size="6.6" fill="#a4a4a4" font-family="Liberation Sans">200</text><text x="190.28" y="6.6" font-size="6.6" fill="#a4a4a4" font-family="Liberation Sans">300</text><text x="226.94" y="6.6" font-size="6.6" fill="#a4a4a4" font-family="Liberation Sans">400</text><text x="263.60" y="6.6" font-size="6.6" fill="#a4a4a4" font-family="Liberation Sans">500</text><text x="300.26" y="6.6" font-size="6.6" fill="#a4a4a4" font-family="Liberation Sans">600</text><text x="336.92" y="6.6" font-size="6.6" fill="#a4a4a4" font-family="Liberation Sans">700</text><text x="373.58" y="6.6" font-size="6.6" fill="#a4a4a4" font-family="Liberation Sans">800</text><text x="410.24" y="6.6" font-size="6.6" fill="#a4a4a4" font-family="Liberation Sans">900</text><text x="446.90" y="6.6" font-size="6.6" fill="#a4a4a4" font-family="Liberation Sans">1000</text><text x="483.56" y="6.6" font-size="6.6" fill="#a4a4a4" font-family="Liberation Sans">1100</text><text x="520.22" y="6.6" font-size="6.6" fill="#a4a4a4" font-family="Liberation Sans">1200</text><text x="556.88" y="6.6" font-size="6.6" fill="#a4a4a4" font-family="Liberation Sans">1300</text><text x="593.54" y="6.6" font-size="6.6" fill="#a4a4a4" font-family="Liberation Sans">1400</text><text x="630.20" y="6.6" font-size="6.6" fill="#a4a4a4" font-family="Liberation Sans">1500</text><text x="666.86" y="6.6" font-size="6.6" fill="#a4a4a4" font-family="Liberation Sans">1600</text><text x="703.52" y="6.6" font-size="6.6" fill="#a4a4a4" font-family="Liberation Sans">1700</text><text x="740.18" y="6.6" font-size="6.6" fill="#a4a4a4" font-family="Liberation Sans">1800</text><text x="776.84" y="6.6" font-size="6.6" fill="#a4a4a4" font-family="Liberation Sans">1900</text><text x="813.50" y="6.6" font-size="6.6" fill="#a4a4a4" font-family="Liberation Sans">2000</text></svg>
<svg style="left:253.2px;top:59.4px" width="12" height="415" viewBox="0 0 12 415"><path d="M2.8 14.80H11.4M7.8 18.47H11.4M7.8 22.13H11.4M7.8 25.80H11.4M7.8 29.46H11.4M7.8 33.13H11.4M7.8 36.80H11.4M7.8 40.46H11.4M7.8 44.13H11.4M7.8 47.79H11.4M2.8 51.46H11.4M7.8 55.13H11.4M7.8 58.79H11.4M7.8 62.46H11.4M7.8 66.12H11.4M7.8 69.79H11.4M7.8 73.46H11.4M7.8 77.12H11.4M7.8 80.79H11.4M7.8 84.45H11.4M2.8 88.12H11.4M7.8 91.79H11.4M7.8 95.45H11.4M7.8 99.12H11.4M7.8 102.78H11.4M7.8 106.45H11.4M7.8 110.12H11.4M7.8 113.78H11.4M7.8 117.45H11.4M7.8 121.11H11.4M2.8 124.78H11.4M7.8 128.45H11.4M7.8 132.11H11.4M7.8 135.78H11.4M7.8 139.44H11.4M7.8 143.11H11.4M7.8 146.78H11.4M7.8 150.44H11.4M7.8 154.11H11.4M7.8 157.77H11.4M2.8 161.44H11.4M7.8 165.11H11.4M7.8 168.77H11.4M7.8 172.44H11.4M7.8 176.10H11.4M7.8 179.77H11.4M7.8 183.44H11.4M7.8 187.10H11.4M7.8 190.77H11.4M7.8 194.43H11.4M2.8 198.10H11.4M7.8 201.77H11.4M7.8 205.43H11.4M7.8 209.10H11.4M7.8 212.76H11.4M7.8 216.43H11.4M7.8 220.10H11.4M7.8 223.76H11.4M7.8 227.43H11.4M7.8 231.09H11.4M2.8 234.76H11.4M7.8 238.43H11.4M7.8 242.09H11.4M7.8 245.76H11.4M7.8 249.42H11.4M7.8 253.09H11.4M7.8 256.76H11.4M7.8 260.42H11.4M7.8 264.09H11.4M7.8 267.75H11.4M2.8 271.42H11.4M7.8 275.09H11.4M7.8 278.75H11.4M7.8 282.42H11.4M7.8 286.08H11.4M7.8 289.75H11.4M7.8 293.42H11.4M7.8 297.08H11.4M7.8 300.75H11.4M7.8 304.41H11.4M2.8 308.08H11.4M7.8 311.75H11.4M7.8 315.41H11.4M7.8 319.08H11.4M7.8 322.74H11.4M7.8 326.41H11.4M7.8 330.08H11.4M7.8 333.74H11.4M7.8 337.41H11.4M7.8 341.07H11.4M2.8 344.74H11.4M7.8 348.41H11.4M7.8 352.07H11.4M7.8 355.74H11.4M7.8 359.40H11.4M7.8 363.07H11.4M7.8 366.74H11.4M7.8 370.40H11.4M7.8 374.07H11.4M7.8 377.73H11.4M2.8 381.40H11.4M7.8 385.07H11.4M7.8 388.73H11.4M7.8 392.40H11.4M7.8 396.06H11.4M7.8 399.73H11.4M7.8 403.40H11.4M7.8 407.06H11.4M7.8 410.73H11.4M7.8 414.39H11.4" stroke="#a8a8a8" stroke-width="0.9" fill="none"/><path d="M11.2 12V415" stroke="#bdbdbd" stroke-width="1.1"/><text transform="translate(2.8 16.60) rotate(90)" font-size="6.4" fill="#a4a4a4" font-family="Liberation Sans">0</text><text transform="translate(2.8 53.26) rotate(90)" font-size="6.4" fill="#a4a4a4" font-family="Liberation Sans">100</text><text transform="translate(2.8 89.92) rotate(90)" font-size="6.4" fill="#a4a4a4" font-family="Liberation Sans">200</text><text transform="translate(2.8 126.58) rotate(90)" font-size="6.4" fill="#a4a4a4" font-family="Liberation Sans">300</text><text transform="translate(2.8 163.24) rotate(90)" font-size="6.4" fill="#a4a4a4" font-family="Liberation Sans">400</text><text transform="translate(2.8 199.90) rotate(90)" font-size="6.4" fill="#a4a4a4" font-family="Liberation Sans">500</text><text transform="translate(2.8 236.56) rotate(90)" font-size="6.4" fill="#a4a4a4" font-family="Liberation Sans">600</text><text transform="translate(2.8 273.22) rotate(90)" font-size="6.4" fill="#a4a4a4" font-family="Liberation Sans">700</text><text transform="translate(2.8 309.88) rotate(90)" font-size="6.4" fill="#a4a4a4" font-family="Liberation Sans">800</text><text transform="translate(2.8 346.54) rotate(90)" font-size="6.4" fill="#a4a4a4" font-family="Liberation Sans">900</text><text transform="translate(2.8 383.20) rotate(90)" font-size="6.4" fill="#a4a4a4" font-family="Liberation Sans">1000</text><text transform="translate(2.8 419.86) rotate(90)" font-size="6.4" fill="#a4a4a4" font-family="Liberation Sans">1100</text></svg>
<div style="left:741px;top:60px;width:1px;height:10.6px;background:#2d8ceb;"></div>
<div style="left:253.2px;top:441px;width:11.4px;height:1px;background:#2d8ceb;"></div>
<div style="left:265.2px;top:71.3px;width:836.2px;height:403px;background:#242424;"></div>
<svg style="left:265.2px;top:71.3px" width="836.2" height="403" viewBox="265.2 71.3 836.2 403"><rect x="331.9" y="74.2" width="703.9" height="395.9" fill="#000"/><clipPath id="cc"><rect x="331.9" y="74.2" width="703.9" height="395.9"/></clipPath><g clip-path="url(#cc)"><path d="M473.6 137 L489 121.4 H880 L897 140 V421 L885.5 421.6 L878 429.8 H473.6 Z" fill="#1b1b1b"/><path d="M490 185 L440 221 C434 225.6 430.6 231 428.6 238 C426 248 424.6 252 423 256 C419 268 413 286 407.6 302 C403.6 314 402 326 401.6 340 C401 356 401 372 401.4 390 L401.7 430.3 L388.6 471 H477.8 L512.7 422.2 H490 Z" fill="#fdba99"/><linearGradient id="fs" x1="0" x2="1" y1="0" y2="0"><stop offset="0" stop-color="#c98466" stop-opacity="0"/><stop offset="1" stop-color="#c98466" stop-opacity="0.75"/></linearGradient><path d="M473.6 197.6 L490 185 V224 L473.6 236.6 Z" fill="url(#fs)"/><path d="M468.3 240.8 L490 223.8 V263 L461.7 281.6 Z" fill="#000"/><path d="M473.6 236.7 L490 223.8 V263 L473.6 273.8 Z" fill="#1b1b1b"/><rect x="487.5" y="122.7" width="410" height="299.1" rx="5" fill="#fff"/><rect x="502.2" y="167.4" width="380.3" height="22" fill="#e6e6e6"/><path d="M502.2 167.40H882.5M502.2 189.43H882.5M502.2 211.46H882.5M502.2 233.49H882.5M502.2 255.52H882.5M502.2 277.55H882.5M502.2 299.58H882.5M502.2 321.61H882.5M502.2 343.64H882.5M502.2 365.67H882.5M502.2 387.70H882.5M502.2 409.73H882.5" stroke="#9d9fa4" stroke-width="2.4" fill="none"/><path d="M612.8 167.4V409.7M664.2 167.4V409.7M715.2 167.4V409.7M825.7 167.4V409.7" stroke="#9d9fa4" stroke-width="2.5" fill="none"/><rect x="496.30" y="135.3" width="9.7" height="7.8" fill="#0a0a0a"/><path d="M497.50 136 L501.70 142.4 M499.70 136 L503.70 142 M501.90 136 L504.90 140.6" fill="none" stroke="#9a9a9a" stroke-width="0.55"/><path d="M503.20 114.3 C505.50 122 505.70 131 502.70 138.6 L505.30 140.4 C509.70 132 509.50 122 507.20 114.3 Z" fill="#dcdcdc" stroke="#101010" stroke-width="1.5"/><path d="M505.20 114.3 C507.60 122 507.70 131 504.20 139.4" fill="none" stroke="#101010" stroke-width="1.1"/><rect x="517.52" y="135.3" width="9.7" height="7.8" fill="#0a0a0a"/><path d="M518.72 136 L522.92 142.4 M520.92 136 L524.92 142 M523.12 136 L526.12 140.6" fill="none" stroke="#9a9a9a" stroke-width="0.55"/><path d="M524.42 114.3 C526.72 122 526.92 131 523.92 138.6 L526.52 140.4 C530.92 132 530.72 122 528.42 114.3 Z" fill="#dcdcdc" stroke="#101010" stroke-width="1.5"/><path d="M526.42 114.3 C528.82 122 528.92 131 525.42 139.4" fill="none" stroke="#101010" stroke-width="1.1"/><rect x="538.74" y="135.3" width="9.7" height="7.8" fill="#0a0a0a"/><path d="M539.94 136 L544.14 142.4 M542.14 136 L546.14 142 M544.34 136 L547.34 140.6" fill="none" stroke="#9a9a9a" stroke-width="0.55"/><path d="M545.64 114.3 C547.94 122 548.14 131 545.14 138.6 L547.74 140.4 C552.14 132 551.94 122 549.64 114.3 Z" fill="#dcdcdc" stroke="#101010" stroke-width="1.5"/><path d="M547.64 114.3 C550.04 122 550.14 131 546.64 139.4" fill="none" stroke="#101010" stroke-width="1.1"/><rect x="559.96" y="135.3" width="9.7" height="7.8" fill="#0a0a0a"/><path d="M561.16 136 L565.36 142.4 M563.36 136 L567.36 142 M565.56 136 L568.56 140.6" fill="none" stroke="#9a9a9a" stroke-width="0.55"/><path d="M566.86 114.3 C569.16 122 569.36 131 566.36 138.6 L568.96 140.4 C573.36 132 573.16 122 570.86 114.3 Z" fill="#dcdcdc" stroke="#101010" stroke-width="1.5"/><path d="M568.86 114.3 C571.26 122 571.36 131 567.86 139.4" fill="none" stroke="#101010" stroke-width="1.1"/><rect x="581.18" y="135.3" width="9.7" height="7.8" fill="#0a0a0a"/><path d="M582.38 136 L586.58 142.4 M584.58 136 L588.58 142 M586.78 136 L589.78 140.6" fill="none" stroke="#9a9a9a" stroke-width="0.55"/><path d="M588.08 114.3 C590.38 122 590.58 131 587.58 138.6 L590.18 140.4 C594.58 132 594.38 122 592.08 114.3 Z" fill="#dcdcdc" stroke="#101010" stroke-width="1.5"/><path d="M590.08 114.3 C592.48 122 592.58 131 589.08 139.4" fill="none" stroke="#101010" stroke-width="1.1"/><rect x="602.40" y="135.3" width="9.7" height="7.8" fill="#0a0a0a"/><path d="M603.60 136 L607.80 142.4 M605.80 136 L609.80 142 M608.00 136 L611.00 140.6" fill="none" stroke="#9a9a9a" stroke-width="0.55"/><path d="M609.30 114.3 C611.60 122 611.80 131 608.80 138.6 L611.40 140.4 C615.80 132 615.60 122 613.30 114.3 Z" fill="#dcdcdc" stroke="#101010" stroke-width="1.5"/><path d="M611.30 114.3 C613.70 122 613.80 131 610.30 139.4" fill="none" stroke="#101010" stroke-width="1.1"/><rect x="623.62" y="135.3" width="9.7" height="7.8" fill="#0a0a0a"/><path d="M624.82 136 L629.02 142.4 M627.02 136 L631.02 142 M629.22 136 L632.22 140.6" fill="none" stroke="#9a9a9a" stroke-width="0.55"/><path d="M630.52 114.3 C632.82 122 633.02 131 630.02 138.6 L632.62 140.4 C637.02 132 636.82 122 634.52 114.3 Z" fill="#dcdcdc" stroke="#101010" stroke-width="1.5"/><path d="M632.52 114.3 C634.92 122 635.02 131 631.52 139.4" fill="none" stroke="#101010" stroke-width="1.1"/><rect x="644.84" y="135.3" width="9.7" height="7.8" fill="#0a0a0a"/><path d="M646.04 136 L650.24 142.4 M648.24 136 L652.24 142 M650.44 136 L653.44 140.6" fill="none" stroke="#9a9a9a" stroke-width="0.55"/><path d="M651.74 114.3 C654.04 122 654.24 131 651.24 138.6 L653.84 140.4 C658.24 132 658.04 122 655.74 114.3 Z" fill="#dcdcdc" stroke="#101010" stroke-width="1.5"/><path d="M653.74 114.3 C656.14 122 656.24 131 652.74 139.4" fill="none" stroke="#101010" stroke-width="1.1"/><rect x="666.06" y="135.3" width="9.7" height="7.8" fill="#0a0a0a"/><path d="M667.26 136 L671.46 142.4 M669.46 136 L673.46 142 M671.66 136 L674.66 140.6" fill="none" stroke="#9a9a9a" stroke-width="0.55"/><path d="M672.96 114.3 C675.26 122 675.46 131 672.46 138.6 L675.06 140.4 C679.46 132 679.26 122 676.96 114.3 Z" fill="#dcdcdc" stroke="#101010" stroke-width="1.5"/><path d="M674.96 114.3 C677.36 122 677.46 131 673.96 139.4" fill="none" stroke="#101010" stroke-width="1.1"/><rect x="687.28" y="135.3" width="9.7" height="7.8" fill="#0a0a0a"/><path d="M688.48 136 L692.68 142.4 M690.68 136 L694.68 142 M692.88 136 L695.88 140.6" fill="none" stroke="#9a9a9a" stroke-width="0.55"/><path d="M694.18 114.3 C696.48 122 696.68 131 693.68 138.6 L696.28 140.4 C700.68 132 700.48 122 698.18 114.3 Z" fill="#dcdcdc" stroke="#101010" stroke-width="1.5"/><path d="M696.18 114.3 C698.58 122 698.68 131 695.18 139.4" fill="none" stroke="#101010" stroke-width="1.1"/><rect x="708.50" y="135.3" width="9.7" height="7.8" fill="#0a0a0a"/><path d="M709.70 136 L713.90 142.4 M711.90 136 L715.90 142 M714.10 136 L717.10 140.6" fill="none" stroke="#9a9a9a" stroke-width="0.55"/><path d="M715.40 114.3 C717.70 122 717.90 131 714.90 138.6 L717.50 140.4 C721.90 132 721.70 122 719.40 114.3 Z" fill="#dcdcdc" stroke="#101010" stroke-width="1.5"/><path d="M717.40 114.3 C719.80 122 719.90 131 716.40 139.4" fill="none" stroke="#101010" stroke-width="1.1"/><rect x="729.72" y="135.3" width="9.7" height="7.8" fill="#0a0a0a"/><path d="M730.92 136 L735.12 142.4 M733.12 136 L737.12 142 M735.32 136 L738.32 140.6" fill="none" stroke="#9a9a9a" stroke-width="0.55"/><path d="M736.62 114.3 C738.92 122 739.12 131 736.12 138.6 L738.72 140.4 C743.12 132 742.92 122 740.62 114.3 Z" fill="#dcdcdc" stroke="#101010" stroke-width="1.5"/><path d="M738.62 114.3 C741.02 122 741.12 131 737.62 139.4" fill="none" stroke="#101010" stroke-width="1.1"/><rect x="750.94" y="135.3" width="9.7" height="7.8" fill="#0a0a0a"/><path d="M752.14 136 L756.34 142.4 M754.34 136 L758.34 142 M756.54 136 L759.54 140.6" fill="none" stroke="#9a9a9a" stroke-width="0.55"/><path d="M757.84 114.3 C760.14 122 760.34 131 757.34 138.6 L759.94 140.4 C764.34 132 764.14 122 761.84 114.3 Z" fill="#dcdcdc" stroke="#101010" stroke-width="1.5"/><path d="M759.84 114.3 C762.24 122 762.34 131 758.84 139.4" fill="none" stroke="#101010" stroke-width="1.1"/><rect x="772.16" y="135.3" width="9.7" height="7.8" fill="#0a0a0a"/><path d="M773.36 136 L777.56 142.4 M775.56 136 L779.56 142 M777.76 136 L780.76 140.6" fill="none" stroke="#9a9a9a" stroke-width="0.55"/><path d="M779.06 114.3 C781.36 122 781.56 131 778.56 138.6 L781.16 140.4 C785.56 132 785.36 122 783.06 114.3 Z" fill="#dcdcdc" stroke="#101010" stroke-width="1.5"/><path d="M781.06 114.3 C783.46 122 783.56 131 780.06 139.4" fill="none" stroke="#101010" stroke-width="1.1"/><rect x="793.38" y="135.3" width="9.7" height="7.8" fill="#0a0a0a"/><path d="M794.58 136 L798.78 142.4 M796.78 136 L800.78 142 M798.98 136 L801.98 140.6" fill="none" stroke="#9a9a9a" stroke-width="0.55"/><path d="M800.28 114.3 C802.58 122 802.78 131 799.78 138.6 L802.38 140.4 C806.78 132 806.58 122 804.28 114.3 Z" fill="#dcdcdc" stroke="#101010" stroke-width="1.5"/><path d="M802.28 114.3 C804.68 122 804.78 131 801.28 139.4" fill="none" stroke="#101010" stroke-width="1.1"/><rect x="814.60" y="135.3" width="9.7" height="7.8" fill="#0a0a0a"/><path d="M815.80 136 L820.00 142.4 M818.00 136 L822.00 142 M820.20 136 L823.20 140.6" fill="none" stroke="#9a9a9a" stroke-width="0.55"/><path d="M821.50 114.3 C823.80 122 824.00 131 821.00 138.6 L823.60 140.4 C828.00 132 827.80 122 825.50 114.3 Z" fill="#dcdcdc" stroke="#101010" stroke-width="1.5"/><path d="M823.50 114.3 C825.90 122 826.00 131 822.50 139.4" fill="none" stroke="#101010" stroke-width="1.1"/><rect x="835.82" y="135.3" width="9.7" height="7.8" fill="#0a0a0a"/><path d="M837.02 136 L841.22 142.4 M839.22 136 L843.22 142 M841.42 136 L844.42 140.6" fill="none" stroke="#9a9a9a" stroke-width="0.55"/><path d="M842.72 114.3 C845.02 122 845.22 131 842.22 138.6 L844.82 140.4 C849.22 132 849.02 122 846.72 114.3 Z" fill="#dcdcdc" stroke="#101010" stroke-width="1.5"/><path d="M844.72 114.3 C847.12 122 847.22 131 843.72 139.4" fill="none" stroke="#101010" stroke-width="1.1"/><rect x="857.04" y="135.3" width="9.7" height="7.8" fill="#0a0a0a"/><path d="M858.24 136 L862.44 142.4 M860.44 136 L864.44 142 M862.64 136 L865.64 140.6" fill="none" stroke="#9a9a9a" stroke-width="0.55"/><path d="M863.94 114.3 C866.24 122 866.44 131 863.44 138.6 L866.04 140.4 C870.44 132 870.24 122 867.94 114.3 Z" fill="#dcdcdc" stroke="#101010" stroke-width="1.5"/><path d="M865.94 114.3 C868.34 122 868.44 131 864.94 139.4" fill="none" stroke="#101010" stroke-width="1.1"/><rect x="878.26" y="135.3" width="9.7" height="7.8" fill="#0a0a0a"/><path d="M879.46 136 L883.66 142.4 M881.66 136 L885.66 142 M883.86 136 L886.86 140.6" fill="none" stroke="#9a9a9a" stroke-width="0.55"/><path d="M885.16 114.3 C887.46 122 887.66 131 884.66 138.6 L887.26 140.4 C891.66 132 891.46 122 889.16 114.3 Z" fill="#dcdcdc" stroke="#101010" stroke-width="1.5"/><path d="M887.16 114.3 C889.56 122 889.66 131 886.16 139.4" fill="none" stroke="#101010" stroke-width="1.1"/><text x="556.6" y="181.7" font-family="Liberation Sans" font-weight="bold" font-size="9.9" fill="#262626" text-anchor="middle" textLength="73.5" lengthAdjust="spacingAndGlyphs">VISITOR NAME</text><text x="638.4" y="181.7" font-family="Liberation Sans" font-weight="bold" font-size="9.9" fill="#262626" text-anchor="middle" textLength="27.5" lengthAdjust="spacingAndGlyphs">DATE</text><text x="690" y="181.7" font-family="Liberation Sans" font-weight="bold" font-size="9.9" fill="#262626" text-anchor="middle" textLength="38.5" lengthAdjust="spacingAndGlyphs">TIME IN</text><text x="770.4" y="181.7" font-family="Liberation Sans" font-weight="bold" font-size="9.9" fill="#262626" text-anchor="middle" textLength="87.5" lengthAdjust="spacingAndGlyphs">PERSON VISITING</text><text x="854.8" y="181.7" font-family="Liberation Sans" font-weight="bold" font-size="9.9" fill="#262626" text-anchor="middle" textLength="47.5" lengthAdjust="spacingAndGlyphs">TIME OUT</text><text x="557.6" y="204.8" font-family="Liberation Sans" font-size="11" fill="#2a2a2a" stroke="#2a2a2a" stroke-width="0.2" text-anchor="middle" textLength="47.5" lengthAdjust="spacingAndGlyphs">DAFFY DUCK</text><text x="638.4" y="204.8" font-family="Liberation Sans" font-size="11" fill="#2a2a2a" stroke="#2a2a2a" stroke-width="0.2" text-anchor="middle" textLength="42.6" lengthAdjust="spacingAndGlyphs">3/15/2021</text><text x="691" y="204.8" font-family="Liberation Sans" font-size="11" fill="#2a2a2a" stroke="#2a2a2a" stroke-width="0.2" text-anchor="middle" textLength="17" lengthAdjust="spacingAndGlyphs">9:50</text><text x="766.6" y="204.8" font-family="Liberation Sans" font-size="11" fill="#2a2a2a" stroke="#2a2a2a" stroke-width="0.2" text-anchor="middle" textLength="85" lengthAdjust="spacingAndGlyphs">Samantha Henderson</text><text x="845.4" y="204.8" font-family="Liberation Sans" font-size="11" fill="#2a2a2a" stroke="#2a2a2a" stroke-width="0.2" text-anchor="middle" textLength="17" lengthAdjust="spacingAndGlyphs">9:58</text><text x="537.4" y="228.8" font-family="Liberation Sans" font-size="14.4" fill="#2e2e2e" textLength="71.6" lengthAdjust="spacingAndGlyphs">Tony Brown</text><text x="643" y="228.8" font-family="Liberation Sans" font-size="14.4" fill="#2e2e2e">3/15</text><text x="732.6" y="228.8" font-family="Liberation Sans" font-size="14.4" fill="#2e2e2e" textLength="31.6" lengthAdjust="spacingAndGlyphs">10:23</text><text x="797" y="228.8" font-family="Liberation Sans" font-size="14.4" fill="#2e2e2e" textLength="86.6" lengthAdjust="spacingAndGlyphs">Hannah Parker</text><path d="M544 243.6 C546 238 556 233.6 560.6 236 C565 239 556 247 551 252.6 C548 255.8 545.4 258.2 545 257.6 C547.6 252.6 556 245.6 566 242.6 C571 241.4 576 241.6 578 244.2 C582 245.6 586 244.4 589.6 244.2" fill="none" stroke="#333" stroke-width="1.1"/><path d="M619 243 C622 240.6 630 240.2 636 240.6 C628 241.6 621.6 243.8 620 245 C624 246.4 632 245 640 243" fill="none" stroke="#333" stroke-width="1.1"/><path d="M776 243 C780 241 784 243.6 788 241.6 C790.5 240.6 789.6 243.6 792 243.4 C795.6 243 797 245.6 795.4 247.6 C793.6 249.4 791 248.4 790.6 247" fill="none" stroke="#333" stroke-width="1.1"/><path d="M830.4 243.6 C836 242.4 842 241.8 845.6 241.4 L835 247.6 L851 241.6 L844.6 247.2 L856 242.4 L852 246.6 C856 244.8 860 242.8 863 241.6" fill="none" stroke="#333" stroke-width="1.1"/><text x="533.6" y="272.2" font-family="Liberation Sans" font-size="12.6" fill="#2e2e2e" textLength="44" lengthAdjust="spacingAndGlyphs">Roger R</text><path d="M461.7 281.6 L482 268 C486.6 263 491.6 260 497 259.2 C503 258.6 509 261.6 513 267 C517 272.6 518.4 280 517.6 288 C516.6 298 513.6 307 508.6 316 C504 324 499 331 495.6 338 C492 345 489.6 351 489 357 C488.6 363 491 368 494 374 C497.6 381 500.6 390 500.6 400 C500.6 408 499 415 497 422 H480 L462 330 Z" fill="#fdba99"/><path d="M482 277.6 L487.6 266 Q488.6 264.2 490.6 264.2 L504 264 Q506 264 507.4 265.6 L511.6 272.6 Q512.6 274.4 512.4 276.6 L511 285 Q510.6 287 509.4 288.4 L505 292 Q503.6 293 501.6 292.6 L488.6 289.8 Q486.6 289.4 485.6 287.6 L482.4 281 Q481.6 279.4 482 277.6 Z" fill="#fdd8c8" stroke="#f3a582" stroke-width="0.6"/><linearGradient id="ws" x1="0" x2="0" y1="0" y2="1"><stop offset="0" stop-color="#d99475" stop-opacity="0.9"/><stop offset="1" stop-color="#d99475" stop-opacity="0"/></linearGradient><path d="M493 421.8 H512.8 L507.6 429 H492 Z" fill="url(#ws)"/><path d="M433.3 284.2 C442 284.6 451 283.6 458.3 280.8 M446.7 237.5 C452 241.6 460 244 466.7 243.3 M455 289 C456 295 458 300 460 305 C461 308 462 311 463.3 313.3 M476.7 287.5 C473 294 469.6 300 466.7 306.7 C460 321 453 336 446.7 348.3 C441 355 434 360 427.5 362.5 M430 309 C435 307.6 440 307 443.3 307.5 C449 309.6 454 313.6 458.3 317.5 M469 311 C476 314.6 483 317.6 490 319 M466.7 317.5 C474 321.6 481 325 488.3 327.5 M439 353 L433 366.7 M471.2 470 C475 462 480 452 483.8 443.9" fill="none" stroke="#ee9670" stroke-width="1"/><g transform="translate(575 266.9) rotate(-10.9)"><path d="M0 0 L27.4 -6.2 V6.2 Z" fill="#f3ca90"/><path d="M0 0 L27.4 1.6 V6.2 Z" fill="#dcaa6c"/><path d="M0 0 L9 -2.1 V2.1 Z" fill="#1c1c1c"/><rect x="27" y="-6.2" width="168.6" height="12.4" fill="#f6a31a"/><rect x="27" y="-6.2" width="168.6" height="4" fill="#fbb22a"/><rect x="27" y="2" width="168.6" height="4.2" fill="#de8d10"/><rect x="195.4" y="-6.2" width="7.4" height="12.4" fill="#fbe620"/><rect x="195.4" y="2" width="7.4" height="4.2" fill="#dcc614"/><path d="M202.6 -6.2 H223 Q225.4 -6.2 225.4 -3.8 V3.8 Q225.4 6.2 223 6.2 H202.6 Z" fill="#f24b0d"/><path d="M202.6 2 H225.4 V3.8 Q225.4 6.2 223 6.2 H202.6 Z" fill="#d53c09"/></g><path d="M693.5 187.6 C688 188 683 195 678 201 C670 210 660 219 648 230 C642 235 634 237 629 242 C625 247 625 253 626.6 260 C628.4 266 630 270 628 276 C625.6 282 625 288 627.6 293.6 C630.6 299.6 636 303 643 307.4 C646 311 644 316 645.6 321 C649 328 654 332 658 337 C662 343 666 348.6 670 354.5 C676 364 681 372 687.5 380.8 C694 388 701 394.6 708 401 C713 406 718 410.6 721 415.8 C724.6 421 726 427 726.8 433 C728.6 445 729.4 458 729.7 471 H821 C823.8 458 823.8 446 821 438 C818.6 432 816 428 814 424.5 C810 412 806 400 803 390 C798 372 794 350 791 330 C789 318 787.6 306 786.6 299 C785.4 290 784.4 280 783.4 272 C782.4 262 782 254 779 246 C777.6 242 776 240 774 238.4 L746 238 L739 224.6 C734 218 730 213 726.7 209.6 C722 204 718 200 714 197 C710 192.6 706 189 701 187.6 C698.6 187 696 187.2 693.5 187.6 Z" fill="#fdba99"/><path d="M690 251.6 L742 241.6 L760 238.4 L770 244 C756 243 744 245 734 247 C720 249.6 704 252.6 692 256 Z" fill="#f4a583"/><g transform="translate(575 266.9) rotate(-10.9)"><rect x="40" y="-6.2" width="155.6" height="12.4" fill="#f6a31a"/><rect x="40" y="-6.2" width="155.6" height="4" fill="#fbb22a"/><rect x="40" y="2" width="155.6" height="4.2" fill="#de8d10"/><rect x="195.4" y="-6.2" width="7.4" height="12.4" fill="#fbe620"/><rect x="195.4" y="2" width="7.4" height="4.2" fill="#dcc614"/><path d="M202.6 -6.2 H223 Q225.4 -6.2 225.4 -3.8 V3.8 Q225.4 6.2 223 6.2 H202.6 Z" fill="#f24b0d"/><path d="M202.6 2 H225.4 V3.8 Q225.4 6.2 223 6.2 H202.6 Z" fill="#d53c09"/></g><path d="M625.6 262 C625 256 625.6 251 627.5 247.5 C629 243 630.6 240.6 632.5 238.75 C635.6 236.4 639 235.8 642.5 236.25 C646.4 237 649.6 239 652.5 241.25 C656 244 658.8 247 661.25 250 C663.6 253.4 665 256.6 666.25 260 C667.4 263.4 668.2 266.6 668.75 270 L640 282 Z" fill="#fdba99"/><path d="M627.5 247.5 C629 243 630.6 240.6 632.5 238.75 C635.6 236.4 639 235.8 642.5 236.25 C646.4 237 649.6 239 652.5 241.25 C656 244 658.8 247 661.25 250 C663.6 253.4 665 256.6 666.25 260 C667.4 263.4 668.2 266.6 668.75 270" fill="none" stroke="#ee9670" stroke-width="0.95"/><path d="M627.6 247 C629.6 243.6 632 241.6 635 241 C638.6 240.6 642.6 241.6 645 243.75 C647 245.4 647.4 247.2 646.6 249 C643.6 253 639.6 255.4 635 257.5 C632.6 259 630 261 628 262.5 C626.4 258 626.4 251.6 627.6 247 Z" fill="#fdd8c8"/><path d="M663.75 268.75 C666 270.4 668 271.2 670 271.25 C676 266 682 260.6 688 255.6 C690.4 257.2 692.4 259 693.75 261.25 C695 263.6 695.8 266 696.25 268.75 C700.6 271.6 705.4 273.8 710 275 C712 274.8 714 274 715.6 273 M670 271.25 C673 277 676.4 282.6 680 287.5 C683.4 292.4 687 296.8 690.6 300.6 C696.4 295.4 702 289.6 707.5 283.75 C710.4 280.4 713.2 276.8 715.6 273 M680 287.5 C685 282.8 690 278 695 273 M693 287.5 C693.6 291 693.8 294.4 693.75 297.5 M706 261 C707.4 261.6 708.6 262.6 709.4 263.75 C710 267.4 710.2 271.2 710 275 M633.75 265 L628.75 271 M656.25 271.25 C650 278.6 643.4 286 636.9 293 M685 225 C685.6 228 686.4 230.6 687.5 232.5 C689 234.6 690.8 236.2 692.5 237.5 M635 295 C641 287.6 648 280 655 273 M697 190 C693.6 199 693 208 697 218" fill="none" stroke="#ee9670" stroke-width="0.95"/></g><path d="M366.4 94.1H999.7V450.8H366.4ZM401.7 113.4H964.5V430.6H401.7ZM446.3 113.4V430.6M472.7 113.4V430.6M895.0 113.4V430.6M921.4 113.4V430.6M683.8 94.0V103.0M683.8 450.3V440.3M366.4 272.2h19M999.7 272.2h-19M674.4 272.2h18.8M683.8 262.8v18.8" fill="none" stroke="#707070" stroke-width="0.9"/><path d="M265.2 94.4H331.9" stroke="#66667a" stroke-width="1.4"/><path d="M331.9 470.4v3.6M866.6 470.4v3.6M1035.3 470.4v3.6" stroke="#8c8cb0" stroke-width="1"/></svg>
<div style="left:253.2px;top:474.4px;width:848.2px;height:1.4px;background:#161616;"></div>
<div style="left:255.6px;top:478.6px;width:52px;height:13px;background:#1b1b1b;border-radius:2px;"></div>
<span style="left:261.6px;top:479.2px;font-size:8.3px;line-height:12px;color:#b0b0b0;">(50%)</span>
<svg style="left:298.20000000000005px;top:482.9px" width="7" height="5" viewBox="0 0 7 5"><path d="M0.6 0.8 L3.5 3.8 L6.4 0.8" fill="none" stroke="#b0b0b0" stroke-width="1"/></svg>
<div style="left:316.6px;top:478.6px;width:62px;height:13px;background:#1b1b1b;border-radius:2px;"></div>
<span style="left:321.4px;top:479.2px;font-size:8.3px;line-height:12px;color:#b0b0b0;">Full</span>
<svg style="left:369.20000000000005px;top:482.9px" width="7" height="5" viewBox="0 0 7 5"><path d="M0.6 0.8 L3.5 3.8 L6.4 0.8" fill="none" stroke="#b0b0b0" stroke-width="1"/></svg>
<div style="left:310.1px;top:479px;width:1px;height:13px;background:#1a1a1a;"></div>
<div style="left:383.7px;top:479px;width:1px;height:13px;background:#1a1a1a;"></div>
<svg style="left:386.6px;top:477.2px;" width="16" height="16" viewBox="-8.0 -8.0 16 16"><rect x="-5" y="-4.4" width="10" height="8.8" rx="1" fill="none" stroke="#c8c8c8" stroke-width="1.1"/><path d="M0.8-3 L-1.8 0.4 H0 L-0.8 3 L2 -0.6 H0.2 Z" fill="#c8c8c8"/><path d="M2.6 5 h3 l-1.5 1.6 z" fill="#c8c8c8"/></svg>
<svg style="left:402.4px;top:477.2px;" width="16" height="16" viewBox="-8.0 -8.0 16 16"><rect x="-5" y="-4.4" width="10" height="8.8" rx="1" fill="none" stroke="#c8c8c8" stroke-width="1.1"/><path d="M-3.4-2.8h2.2v1.8h-2.2z M1.2-2.8h2.2v1.8h-2.2z M-1.2-1h2.4v2h-2.4z M-3.4 1h2.2v1.8h-2.2z M1.2 1h2.2v1.8h-2.2z" fill="#c8c8c8"/></svg>
<div style="left:420.6px;top:478.6px;width:13.6px;height:13px;background:#1b1b1b;border-radius:2px;"></div>
<svg style="left:419.4px;top:477.2px;" width="16" height="16" viewBox="-8.0 -8.0 16 16"><path d="M-3.6-3.2 L3.2-4 L4 3 L-4 3.8 Z" fill="none" stroke="#2d8ceb" stroke-width="1"/><g fill="#2d8ceb"><rect x="-4.8" y="-4.4" width="2.4" height="2.4"/><rect x="2.2" y="-5.2" width="2.4" height="2.4"/><rect x="2.8" y="1.8" width="2.4" height="2.4"/><rect x="-5.2" y="2.6" width="2.4" height="2.4"/></g></svg>
<svg style="left:435.0px;top:477.2px;" width="16" height="16" viewBox="-8.0 -8.0 16 16"><rect x="-5" y="-4.4" width="10" height="8.8" rx="1" fill="none" stroke="#c8c8c8" stroke-width="1.1"/><rect x="-2.6" y="-2" width="5.2" height="4" fill="#c8c8c8"/></svg>
<svg style="left:451.0px;top:476.8px;" width="16" height="16" viewBox="-8.0 -8.0 16 16"><rect x="-5" y="-4.2" width="10" height="7.6" rx="0.8" fill="none" stroke="#c8c8c8" stroke-width="1.1"/><path d="M0-5.4V4.6M-6.2-0.4H6.2" stroke="#c8c8c8" stroke-width="1"/><path d="M2.6 5.2 h3 l-1.5 1.6 z" fill="#c8c8c8"/></svg>
<div style="left:470.1px;top:479px;width:1px;height:13px;background:#1a1a1a;"></div>
<svg style="left:474.6px;top:477.2px;" width="16" height="16" viewBox="-8.0 -8.0 16 16"><circle cx="-1.7" cy="1.3" r="2.4" fill="#2fbe3a"/><circle cx="1.7" cy="1.3" r="2.4" fill="#2c58e8"/><circle cx="0" cy="-1.7" r="2.4" fill="#e02828"/><path d="M2.4 5.2 h3 l-1.5 1.6 z" fill="#c8c8c8"/></svg>
<svg style="left:490.6px;top:477.2px;" width="16" height="16" viewBox="-8.0 -8.0 16 16"><circle r="3.9" fill="none" stroke="#c8c8c8" stroke-width="1.3"/><path d="M-3.9 0 L0-1 M0-3.9 L1 0 M3.9 0 L0 1 M0 3.9 L-1 0" stroke="#c8c8c8" stroke-width="1.1"/><circle r="1.1" fill="#232323"/></svg>
<span style="left:508.6px;top:479.2px;font-size:8.3px;line-height:12px;color:#2d8ceb;">+0.0</span>
<div style="left:534.9px;top:479px;width:1px;height:13px;background:#1a1a1a;"></div>
<svg style="left:538.8px;top:477.2px;" width="16" height="16" viewBox="-8.0 -8.0 16 16"><path d="M-5 -2.6 H-2.4 L-1.6-4 H1.6 L2.4-2.6 H5 V3.8 H-5 Z" fill="#c8c8c8"/><circle cy="0.6" r="2" fill="#232323"/><circle cy="0.6" r="1" fill="#c8c8c8"/></svg>
<svg style="left:555.6px;top:477.2px;" width="16" height="16" viewBox="-8.0 -8.0 16 16"><path d="M-4.6 3.6 L-1-3.6 H4.6 L1 3.6 Z M-4.6 3.6 L4.6-3.6" fill="none" stroke="#4c4c4c" stroke-width="1"/></svg>
<div style="left:574.1px;top:479px;width:1px;height:13px;background:#1a1a1a;"></div>
<div style="left:579px;top:478.6px;width:50.6px;height:13px;background:#1b1b1b;border-radius:2px;"></div>
<span style="left:585.4px;top:479.2px;font-size:8.1px;line-height:12px;color:#a8a8a8;">0;00;01;07</span>
<div style="left:633.5px;top:479px;width:1px;height:13px;background:#1a1a1a;"></div>
<div style="left:1105px;top:19.5px;width:159.6px;height:474.5px;background:#232323;"></div>
<span style="left:1114.2px;top:23.8px;font-size:8.3px;line-height:12px;color:#a4a4a4;">Info</span>
<div style="left:1105px;top:40.0px;width:150.4px;height:1.6px;background:#191919;"></div>
<span style="left:1114.2px;top:45.8px;font-size:8.3px;line-height:12px;color:#a4a4a4;">Audio</span>
<div style="left:1105px;top:62.0px;width:150.4px;height:1.6px;background:#191919;"></div>
<span style="left:1114.2px;top:67.8px;font-size:8.3px;line-height:12px;color:#a4a4a4;">Preview</span>
<div style="left:1105px;top:84.0px;width:150.4px;height:1.6px;background:#191919;"></div>
<span style="left:1114.2px;top:89.8px;font-size:8.3px;line-height:12px;color:#a4a4a4;">Effects &amp; Presets</span>
<div style="left:1105px;top:106.0px;width:150.4px;height:1.6px;background:#191919;"></div>
<span style="left:1114.2px;top:111.8px;font-size:8.3px;line-height:12px;color:#a4a4a4;">Libraries</span>
<div style="left:1105px;top:128.0px;width:150.4px;height:1.6px;background:#191919;"></div>
<span style="left:1114.2px;top:133.8px;font-size:8.3px;line-height:12px;color:#a4a4a4;">Character</span>
<div style="left:1105px;top:150.0px;width:150.4px;height:1.6px;background:#191919;"></div>
<span style="left:1114.2px;top:155.8px;font-size:8.3px;line-height:12px;color:#a4a4a4;">Paragraph</span>
<div style="left:1105px;top:172.0px;width:150.4px;height:1.6px;background:#191919;"></div>
<span style="left:1114.2px;top:177.8px;font-size:8.3px;line-height:12px;color:#a4a4a4;">Tracker</span>
<div style="left:1105px;top:194.0px;width:150.4px;height:1.6px;background:#191919;"></div>
<span style="left:1114.2px;top:199.8px;font-size:8.3px;line-height:12px;color:#a4a4a4;">Content-Aware Fill</span>
<div style="left:1105px;top:216.0px;width:150.4px;height:1.6px;background:#191919;"></div>
<span style="left:1114.2px;top:222.2px;font-size:8.3px;line-height:12px;color:#dcdcdc;">Align</span>
<div style="left:1242.2px;top:225.6px;width:5.6px;height:1px;background:#b0b0b0;"></div>
<div style="left:1242.2px;top:228.1px;width:5.6px;height:1px;background:#b0b0b0;"></div>
<div style="left:1242.2px;top:230.6px;width:5.6px;height:1px;background:#b0b0b0;"></div>
<span style="left:1109.8px;top:242.2px;font-size:8.2px;line-height:12px;color:#a0a0a0;">Align Layers to:</span>
<div style="left:1173.2px;top:241.4px;width:80.6px;height:12.6px;background:#2b2b2b;border-radius:2px;"></div>
<span style="left:1178.6px;top:242.2px;font-size:8.2px;line-height:12px;color:#4c4c4c;">Selection</span>
<svg style="left:1243.4px;top:245.1px" width="7" height="5" viewBox="0 0 7 5"><path d="M0.6 0.8 L3.5 3.8 L6.4 0.8" fill="none" stroke="#3e3e3e" stroke-width="1"/></svg>
<div style="left:1109px;top:275px;width:143.4px;height:1px;background:#303030;"></div>
<span style="left:1109.8px;top:277.6px;font-size:8.2px;line-height:12px;color:#a0a0a0;">Distribute Layers:</span>
<svg style="left:1111.0px;top:256.8px;" width="16" height="16" viewBox="-8.0 -8.0 16 16"><path d="M-5.6-6.4V6.4" stroke="#3c3c3c" stroke-width="1"/><rect x="-3.6" y="-4.4" width="5.4" height="3.2" fill="#3c3c3c"/><rect x="-3.6" y="1" width="8.6" height="3.2" fill="#3c3c3c"/></svg>
<svg style="left:1136.0px;top:256.8px;" width="16" height="16" viewBox="-8.0 -8.0 16 16"><path d="M0-6.4V6.4" stroke="#3c3c3c" stroke-width="1"/><rect x="-2.8" y="-4.4" width="5.6" height="3.2" fill="#3c3c3c"/><rect x="-4.6" y="1" width="9.2" height="3.2" fill="#3c3c3c"/></svg>
<svg style="left:1161.6px;top:256.8px;" width="16" height="16" viewBox="-8.0 -8.0 16 16"><path d="M5.6-6.4V6.4" stroke="#3c3c3c" stroke-width="1"/><rect x="-1.8" y="-4.4" width="5.4" height="3.2" fill="#3c3c3c"/><rect x="-5" y="1" width="8.6" height="3.2" fill="#3c3c3c"/></svg>
<svg style="left:1186.6px;top:256.8px;" width="16" height="16" viewBox="-8.0 -8.0 16 16"><path d="M-6.4-5.6H6.4" stroke="#3c3c3c" stroke-width="1"/><rect x="-4.4" y="-3.6" width="3.2" height="8.6" fill="#3c3c3c"/><rect x="1" y="-3.6" width="3.2" height="5.4" fill="#3c3c3c"/></svg>
<svg style="left:1211.6px;top:256.8px;" width="16" height="16" viewBox="-8.0 -8.0 16 16"><path d="M-6.4 0H6.4" stroke="#3c3c3c" stroke-width="1"/><rect x="-4.4" y="-4.6" width="3.2" height="9.2" fill="#3c3c3c"/><rect x="1" y="-2.8" width="3.2" height="5.6" fill="#3c3c3c"/></svg>
<svg style="left:1236.6px;top:256.8px;" width="16" height="16" viewBox="-8.0 -8.0 16 16"><path d="M-6.4 5.6H6.4" stroke="#3c3c3c" stroke-width="1"/><rect x="-4.4" y="-5" width="3.2" height="8.6" fill="#3c3c3c"/><rect x="1" y="-1.8" width="3.2" height="5.4" fill="#3c3c3c"/></svg>
<svg style="left:1111.0px;top:288.4px;" width="16" height="16" viewBox="-8.0 -8.0 16 16"><path d="M-6.4-5.6H6.4M-6.4 0.6H6.4" stroke="#3c3c3c" stroke-width="1"/><rect x="-3" y="-4.6" width="6" height="3" fill="#3c3c3c"/><rect x="-4.6" y="1.6" width="9.2" height="3.2" fill="#3c3c3c"/></svg>
<svg style="left:1136.0px;top:288.4px;" width="16" height="16" viewBox="-8.0 -8.0 16 16"><path d="M-6.4-3H6.4M-6.4 3.2H6.4" stroke="#3c3c3c" stroke-width="1"/><rect x="-3" y="-4.6" width="6" height="3" fill="#3c3c3c"/><rect x="-4.6" y="1.6" width="9.2" height="3.2" fill="#3c3c3c"/></svg>
<svg style="left:1161.0px;top:288.4px;" width="16" height="16" viewBox="-8.0 -8.0 16 16"><path d="M-6.4-0.8H6.4M-6.4 5.6H6.4" stroke="#3c3c3c" stroke-width="1"/><rect x="-3" y="-4.6" width="6" height="3" fill="#3c3c3c"/><rect x="-4.6" y="1.6" width="9.2" height="3.2" fill="#3c3c3c"/></svg>
<svg style="left:1186.6px;top:288.4px;" width="16" height="16" viewBox="-8.0 -8.0 16 16"><path d="M-5.6-6.4V6.4M0.6-6.4V6.4" stroke="#3c3c3c" stroke-width="1"/><rect x="-4.6" y="-4.6" width="3.2" height="9.2" fill="#3c3c3c"/><rect x="1.6" y="-3" width="3" height="6" fill="#3c3c3c"/></svg>
<svg style="left:1211.6px;top:288.4px;" width="16" height="16" viewBox="-8.0 -8.0 16 16"><path d="M-3-6.4V6.4M3.2-6.4V6.4" stroke="#3c3c3c" stroke-width="1"/><rect x="-4.6" y="-4.6" width="3.2" height="9.2" fill="#3c3c3c"/><rect x="1.6" y="-3" width="3" height="6" fill="#3c3c3c"/></svg>
<svg style="left:1236.6px;top:288.4px;" width="16" height="16" viewBox="-8.0 -8.0 16 16"><path d="M-0.8-6.4V6.4M5.6-6.4V6.4" stroke="#3c3c3c" stroke-width="1"/><rect x="-4.6" y="-4.6" width="3.2" height="9.2" fill="#3c3c3c"/><rect x="1.6" y="-3" width="3" height="6" fill="#3c3c3c"/></svg>
<div style="left:15px;top:496.9px;width:1249.6px;height:221.1px;background:#232323;"></div>
<div style="left:34.4px;top:503.2px;width:7.6px;height:7.2px;background:#c8ae7e;"></div>
<span style="left:50.6px;top:501.6px;font-size:8.3px;line-height:12px;color:#a0a0a0;letter-spacing:-0.55px;">MASTER</span>
<span style="left:123px;top:501.6px;font-size:8.3px;line-height:12px;color:#a0a0a0;">Render Queue</span>
<div style="left:215.2px;top:503.2px;width:7.6px;height:7.2px;background:#c8ae7e;"></div>
<span style="left:231.6px;top:501.6px;font-size:8.3px;line-height:12px;color:#a0a0a0;">Comp 04</span>
<svg style="left:294.4px;top:505px" width="6" height="6" viewBox="0 0 6 6"><path d="M0.8 0.8 L5.2 5.2 M5.2 0.8 L0.8 5.2" stroke="#a0a0a0" stroke-width="0.9"/></svg>
<div style="left:305.6px;top:503.2px;width:7.6px;height:7.2px;background:#c8ae7e;"></div>
<span style="left:321.8px;top:501.6px;font-size:8.2px;line-height:12px;color:#d2d2d2;">comp-04_log-book-02</span>
<div style="left:410px;top:505.0px;width:6px;height:1px;background:#a8a8a8;"></div>
<div style="left:410px;top:507.5px;width:6px;height:1px;background:#a8a8a8;"></div>
<div style="left:410px;top:510.0px;width:6px;height:1px;background:#a8a8a8;"></div>
<div style="left:294.8px;top:514.2px;width:121.6px;height:1.6px;background:#c4c4c4;"></div>
<span style="left:26.8px;top:518.8px;font-size:10.6px;line-height:14px;color:#2d8ceb;font-weight:bold;letter-spacing:0.33px;">0;00;01;07</span>
<span style="left:23.2px;top:530.8px;font-size:7.7px;line-height:12px;color:#1f5d9f;">00037 (29.97 fps)</span>
<div style="left:94px;top:523.2px;width:416px;height:13.2px;background:#161616;border:1px solid #2b2b2b;border-radius:2px;box-sizing:border-box;"></div>
<svg style="left:96.6px;top:525.4px" width="14" height="10" viewBox="0 0 14 10"><circle cx="6.4" cy="3.8" r="2.5" fill="none" stroke="#c0c0c0" stroke-width="1"/><path d="M4.6 5.6 L1.6 8.6" stroke="#c0c0c0" stroke-width="1.2"/><path d="M9.6 6 h3.2 l-1.6 1.8 z" fill="#c0c0c0"/></svg>
<svg style="left:520.4px;top:522.0px;" width="16" height="16" viewBox="-8.0 -8.0 16 16"><path d="M-5.4-3.4H-1.6 M-1.6-3.4 H1 V0.4 H3 M1 0.4 V3.8 H3" fill="none" stroke="#c8c8c8" stroke-width="1"/><rect x="-6" y="-4.6" width="3.4" height="2.4" fill="#c8c8c8"/><rect x="2.6" y="-0.8" width="3" height="2.4" fill="#c8c8c8"/><path d="M2.8 2.6 h3.2 l-1.6 2.2 z" fill="#c8c8c8"/><rect x="1.6" y="-4.4" width="3" height="2" fill="#c8c8c8"/></svg>
<svg style="left:544.0px;top:522.4px;" width="16" height="16" viewBox="-8.0 -8.0 16 16"><path d="M-5.6 0 L0-4.6 L5.6 0 Z" fill="#c8c8c8"/><rect x="-5.6" y="0.8" width="11.2" height="3.6" fill="#c8c8c8"/><path d="M0-4.6V4.4 M-3 1V4.4 M3 1V4.4 M-5.6 2.6H5.6" stroke="#232323" stroke-width="0.7"/></svg>
<svg style="left:563.8px;top:522.0px;" width="16" height="16" viewBox="-8.0 -8.0 16 16"><rect x="-2.6" y="-5" width="8" height="7.6" fill="#c8c8c8"/><path d="M-4.4-3 V4.6 H3.4 M-6-1.2 V6 H1.6" fill="none" stroke="#c8c8c8" stroke-width="1.1"/><rect x="-0.6" y="-2.6" width="4" height="1.6" fill="#232323"/></svg>
<svg style="left:582.6px;top:522.0px;" width="16" height="16" viewBox="-8.0 -8.0 16 16"><g transform="rotate(-32)"><rect x="-5.6" y="-1" width="11.2" height="5.4" rx="2.7" fill="none" stroke="#2d8ceb" stroke-width="1"/><rect x="-5.6" y="-2.6" width="11.2" height="5.4" rx="2.7" fill="none" stroke="#2d8ceb" stroke-width="1"/><rect x="-5.6" y="-4.4" width="11.2" height="5.4" rx="2.7" fill="#2d8ceb"/></g></svg>
<svg style="left:607.4px;top:522.4px;" width="16" height="16" viewBox="-8.0 -8.0 16 16"><rect x="-5.4" y="-4.4" width="10.8" height="8.8" rx="1" fill="none" stroke="#c8c8c8" stroke-width="1.1"/><path d="M-5-2.6 C-1-2.6 0 3 5 3" fill="none" stroke="#c8c8c8" stroke-width="1"/><path d="M-3-6V-4 M3-6V-4" stroke="#c8c8c8" stroke-width="1.1"/></svg>
<div style="left:15px;top:542.6px;width:618px;height:1.2px;background:#151515;"></div>
<div style="left:15px;top:556.4px;width:618px;height:1.2px;background:#151515;"></div>
<svg style="left:16.0px;top:542.6px;" width="16" height="16" viewBox="-8.0 -8.0 16 16"><path d="M-4.8 0 C-2.6-3.4 2.6-3.4 4.8 0 C2.6 3.4 -2.6 3.4 -4.8 0 Z" fill="#d6d6d6"/><circle r="1.9" fill="#232323"/><circle r="0.9" fill="#d6d6d6"/></svg>
<svg style="left:27.0px;top:542.6px;" width="16" height="16" viewBox="-8.0 -8.0 16 16"><path d="M-4.6-1.6 H-2.8 L-0.4-4 V4 L-2.8 1.6 H-4.6 Z" fill="#d6d6d6"/><path d="M1-4.2 A4.3 4.3 0 0 1 1 4.2 Z" fill="#d6d6d6"/><path d="M1.2-2.2 A2.3 2.3 0 0 1 1.2 2.2" fill="none" stroke="#232323" stroke-width="0.8"/></svg>
<svg style="left:37.8px;top:542.6px;" width="16" height="16" viewBox="-8.0 -8.0 16 16"><circle r="2.5" fill="#d0d0d0"/></svg>
<svg style="left:48.8px;top:542.6px;" width="16" height="16" viewBox="-8.0 -8.0 16 16"><path d="M-2.2-0.6 V-2.4 A2.2 2.2 0 0 1 2.2-2.4 V-0.6" fill="none" stroke="#d6d6d6" stroke-width="1.2"/><rect x="-3.4" y="-0.8" width="6.8" height="5.2" rx="0.6" fill="#d6d6d6"/><rect x="-0.6" y="0.8" width="1.2" height="2" fill="#232323"/></svg>
<div style="left:64.5px;top:546px;width:1px;height:9px;background:#1a1a1a;"></div>
<svg style="left:71.8px;top:542.6px;" width="16" height="16" viewBox="-8.0 -8.0 16 16"><path d="M-4.6-4.6 H-0.6 L5 1 L1 5 L-4.6-0.6 Z" fill="#c8c8c8"/><circle cx="-2.6" cy="-2.6" r="0.9" fill="#232323"/></svg>
<div style="left:87.9px;top:546px;width:1px;height:9px;background:#1a1a1a;"></div>
<span style="left:93.6px;top:545.0px;font-size:6.6px;line-height:12px;color:#9a9a9a;font-style:italic;">#</span>
<div style="left:112.9px;top:546px;width:1px;height:9px;background:#1a1a1a;"></div>
<span style="left:117.2px;top:545.0px;font-size:6.9px;line-height:12px;color:#9a9a9a;">Layer Name</span>
<div style="left:313.1px;top:546px;width:1px;height:9px;background:#1a1a1a;"></div>
<span style="left:317.6px;top:545.0px;font-size:6.9px;line-height:12px;color:#9a9a9a;">Mode</span>
<span style="left:355.8px;top:545.0px;font-size:6.9px;line-height:12px;color:#9a9a9a;">T</span>
<span style="left:368.2px;top:545.0px;font-size:6.9px;line-height:12px;color:#9a9a9a;">Track Matte</span>
<svg style="left:410.0px;top:542.6px;" width="16" height="16" viewBox="-8.0 -8.0 16 16"><rect x="-4.2" y="-4" width="8.4" height="8" fill="#d4d4d4"/><circle r="2.5" fill="#232323"/></svg>
<svg style="left:421.2px;top:542.6px;" width="16" height="16" viewBox="-8.0 -8.0 16 16"><rect x="-4.2" y="-4" width="8.4" height="8" fill="#d4d4d4"/><path d="M-2.6 2.6 C-2.6-1 0-2.6 2.8-2.6 C2.8 1 0 2.6 -2.6 2.6 Z" fill="#232323"/></svg>
<svg style="left:435.6px;top:542.6px;" width="16" height="16" viewBox="-8.0 -8.0 16 16"><path d="M-3.7 1.5 A3.7 4.3 0 0 1 3.7 1.5 Z" fill="#bcbcbc" stroke="#101010" stroke-width="0.9"/><rect x="-2.2" y="-0.9" width="1.3" height="0.8" fill="#2a2a2a"/><rect x="0.9" y="-0.9" width="1.3" height="0.8" fill="#2a2a2a"/><rect x="-0.65" y="-1" width="1.3" height="4.6" rx="0.6" fill="#dcdcdc"/><rect x="-4.7" y="1.5" width="2.4" height="1.3" fill="#c8c8c8"/><rect x="2.3" y="1.5" width="2.4" height="1.3" fill="#c8c8c8"/></svg>
<svg style="left:446.4px;top:542.6px;" width="16" height="16" viewBox="-8.0 -8.0 16 16"><circle r="1.9" fill="none" stroke="#c8c8c8" stroke-width="1.1"/><path d="M0-4V-2.2 M0 2.2V4 M-4 0H-2.2 M2.2 0H4" stroke="#c8c8c8" stroke-width="1.1"/><path d="M-2.6-2.6L-1.7-1.7 M1.7 1.7L2.6 2.6 M2.6-2.6L1.7-1.7 M-1.7 1.7L-2.6 2.6" stroke="#c8c8c8" stroke-width="0.7"/></svg>
<svg style="left:457.4px;top:542.6px;" width="16" height="16" viewBox="-8.0 -8.0 16 16"><path d="M-3.6-3.8 L3.6 3.4" stroke="#c8c8c8" stroke-width="1.1"/></svg>
<span style="left:471.4px;top:544.4px;font-size:9.4px;line-height:12px;color:#bdbdbd;font-style:italic;">fx</span>
<svg style="left:479.0px;top:542.6px;" width="16" height="16" viewBox="-8.0 -8.0 16 16"><rect x="-4.4" y="-4" width="8.8" height="8" rx="0.8" fill="#c8c8c8"/><rect x="-2.2" y="-1.8" width="4.4" height="2.2" fill="#555"/><path d="M-4.4 1.8H4.4" stroke="#777" stroke-width="0.8"/></svg>
<svg style="left:490.0px;top:542.6px;" width="16" height="16" viewBox="-8.0 -8.0 16 16"><g transform="rotate(-35)"><rect x="-4.8" y="-0.6" width="9.6" height="4.6" rx="2.3" fill="#777"/><rect x="-4.8" y="-3.6" width="9.6" height="4.6" rx="2.3" fill="#a8a8a8"/></g></svg>
<svg style="left:501.0px;top:542.6px;" width="16" height="16" viewBox="-8.0 -8.0 16 16"><circle r="3.7" fill="#d8d8d8"/><path d="M-2.7 2.7 A3.8 3.8 0 0 0 2.7 -2.7 Z" fill="#232323"/><circle r="3.7" fill="none" stroke="#d8d8d8" stroke-width="0.8"/></svg>
<svg style="left:512.4px;top:542.6px;" width="16" height="16" viewBox="-8.0 -8.0 16 16"><path d="M0-3.8 L3.4-1.9 V1.9 L0 3.8 L-3.4 1.9 V-1.9 Z M-3.4-1.9 L0 0 L3.4-1.9 M0 0V3.8" fill="none" stroke="#c8c8c8" stroke-width="0.9"/></svg>
<div style="left:534.7px;top:546px;width:1px;height:9px;background:#1a1a1a;"></div>
<span style="left:539.6px;top:545.0px;font-size:6.9px;line-height:12px;color:#9a9a9a;">Parent &amp; Link</span>
<div style="left:621.1px;top:546px;width:1px;height:9px;background:#1a1a1a;"></div>
<div style="left:15px;top:557.6px;width:618px;height:147.4px;overflow:hidden;">
<div style="left:0px;top:-2.6000000000000227px;width:618px;height:12.5px;background:#323232;"></div>
<div style="left:0px;top:9.299999999999955px;width:618px;height:0.9px;background:#242424;"></div>
<div style="left:4.399999999999999px;top:-1.0500000000000682px;width:9.4px;height:9.4px;background:#252525;"></div>
<div style="left:26.200000000000003px;top:-1.0500000000000682px;width:9.4px;height:9.4px;background:#252525;"></div>
<div style="left:37.2px;top:-1.0500000000000682px;width:9.4px;height:9.4px;background:#252525;"></div>
<div style="left:15.399999999999999px;top:-1.0500000000000682px;width:9.4px;height:9.4px;background:#2a2a2a;"></div>
<div style="left:478.8px;top:-1.0500000000000682px;width:9.2px;height:9.4px;background:#252525;"></div>
<div style="left:490px;top:-1.0500000000000682px;width:9.2px;height:9.4px;background:#252525;"></div>
<div style="left:501.20000000000005px;top:-1.0500000000000682px;width:9.2px;height:9.4px;background:#252525;"></div>
<div style="left:338.2px;top:-1.0500000000000682px;width:8.8px;height:9.4px;background:#262626;"></div>
<div style="left:423.8px;top:-1.0500000000000682px;width:9.4px;height:9.4px;background:#242424;"></div>
<div style="left:434.9px;top:-1.0500000000000682px;width:9.4px;height:9.4px;background:#242424;"></div>
<div style="left:445.9px;top:-1.0500000000000682px;width:9.4px;height:9.4px;background:#242424;"></div>
<div style="left:299.2px;top:-2.6000000000000227px;width:1px;height:12.5px;background:#1e1e1e;"></div>
<div style="left:606.6px;top:-2.6000000000000227px;width:11.4px;height:12.5px;background:#262626;"></div>
<div style="left:0px;top:9.899999999999977px;width:618px;height:12.5px;background:#2d2d2d;"></div>
<div style="left:0px;top:21.799999999999955px;width:618px;height:0.9px;background:#242424;"></div>
<div style="left:4.399999999999999px;top:11.449999999999932px;width:9.4px;height:9.4px;background:#252525;"></div>
<div style="left:26.200000000000003px;top:11.449999999999932px;width:9.4px;height:9.4px;background:#252525;"></div>
<div style="left:37.2px;top:11.449999999999932px;width:9.4px;height:9.4px;background:#252525;"></div>
<div style="left:15.399999999999999px;top:11.449999999999932px;width:9.4px;height:9.4px;background:#2a2a2a;"></div>
<div style="left:478.8px;top:11.449999999999932px;width:9.2px;height:9.4px;background:#252525;"></div>
<div style="left:490px;top:11.449999999999932px;width:9.2px;height:9.4px;background:#252525;"></div>
<div style="left:501.20000000000005px;top:11.449999999999932px;width:9.2px;height:9.4px;background:#252525;"></div>
<div style="left:338.2px;top:11.449999999999932px;width:8.8px;height:9.4px;background:#262626;"></div>
<div style="left:423.8px;top:11.449999999999932px;width:9.4px;height:9.4px;background:#242424;"></div>
<div style="left:434.9px;top:11.449999999999932px;width:9.4px;height:9.4px;background:#242424;"></div>
<div style="left:445.9px;top:11.449999999999932px;width:9.4px;height:9.4px;background:#242424;"></div>
<div style="left:299.2px;top:9.899999999999977px;width:1px;height:12.5px;background:#1e1e1e;"></div>
<div style="left:606.6px;top:9.899999999999977px;width:11.4px;height:12.5px;background:#262626;"></div>
<div style="left:0px;top:22.399999999999977px;width:618px;height:12.5px;background:#2d2d2d;"></div>
<div style="left:0px;top:34.299999999999955px;width:618px;height:0.9px;background:#242424;"></div>
<div style="left:4.399999999999999px;top:23.949999999999932px;width:9.4px;height:9.4px;background:#252525;"></div>
<div style="left:26.200000000000003px;top:23.949999999999932px;width:9.4px;height:9.4px;background:#252525;"></div>
<div style="left:37.2px;top:23.949999999999932px;width:9.4px;height:9.4px;background:#252525;"></div>
<div style="left:15.399999999999999px;top:23.949999999999932px;width:9.4px;height:9.4px;background:#2a2a2a;"></div>
<div style="left:478.8px;top:23.949999999999932px;width:9.2px;height:9.4px;background:#252525;"></div>
<div style="left:490px;top:23.949999999999932px;width:9.2px;height:9.4px;background:#252525;"></div>
<div style="left:501.20000000000005px;top:23.949999999999932px;width:9.2px;height:9.4px;background:#252525;"></div>
<div style="left:338.2px;top:23.949999999999932px;width:8.8px;height:9.4px;background:#262626;"></div>
<div style="left:423.8px;top:23.949999999999932px;width:9.4px;height:9.4px;background:#242424;"></div>
<div style="left:434.9px;top:23.949999999999932px;width:9.4px;height:9.4px;background:#242424;"></div>
<div style="left:445.9px;top:23.949999999999932px;width:9.4px;height:9.4px;background:#242424;"></div>
<div style="left:299.2px;top:22.399999999999977px;width:1px;height:12.5px;background:#1e1e1e;"></div>
<div style="left:606.6px;top:22.399999999999977px;width:11.4px;height:12.5px;background:#262626;"></div>
<div style="left:0px;top:34.89999999999998px;width:618px;height:12.5px;background:#2d2d2d;"></div>
<div style="left:0px;top:46.799999999999955px;width:618px;height:0.9px;background:#242424;"></div>
<div style="left:4.399999999999999px;top:36.44999999999993px;width:9.4px;height:9.4px;background:#252525;"></div>
<div style="left:26.200000000000003px;top:36.44999999999993px;width:9.4px;height:9.4px;background:#252525;"></div>
<div style="left:37.2px;top:36.44999999999993px;width:9.4px;height:9.4px;background:#252525;"></div>
<div style="left:15.399999999999999px;top:36.44999999999993px;width:9.4px;height:9.4px;background:#2a2a2a;"></div>
<div style="left:478.8px;top:36.44999999999993px;width:9.2px;height:9.4px;background:#252525;"></div>
<div style="left:490px;top:36.44999999999993px;width:9.2px;height:9.4px;background:#252525;"></div>
<div style="left:501.20000000000005px;top:36.44999999999993px;width:9.2px;height:9.4px;background:#252525;"></div>
<div style="left:338.2px;top:36.44999999999993px;width:8.8px;height:9.4px;background:#262626;"></div>
<div style="left:423.8px;top:36.44999999999993px;width:9.4px;height:9.4px;background:#242424;"></div>
<div style="left:434.9px;top:36.44999999999993px;width:9.4px;height:9.4px;background:#242424;"></div>
<div style="left:445.9px;top:36.44999999999993px;width:9.4px;height:9.4px;background:#242424;"></div>
<div style="left:299.2px;top:34.89999999999998px;width:1px;height:12.5px;background:#1e1e1e;"></div>
<div style="left:606.6px;top:34.89999999999998px;width:11.4px;height:12.5px;background:#262626;"></div>
<div style="left:0px;top:47.39999999999998px;width:618px;height:12.5px;background:#2d2d2d;"></div>
<div style="left:0px;top:59.299999999999955px;width:618px;height:0.9px;background:#242424;"></div>
<div style="left:4.399999999999999px;top:48.94999999999993px;width:9.4px;height:9.4px;background:#252525;"></div>
<div style="left:26.200000000000003px;top:48.94999999999993px;width:9.4px;height:9.4px;background:#252525;"></div>
<div style="left:37.2px;top:48.94999999999993px;width:9.4px;height:9.4px;background:#252525;"></div>
<div style="left:15.399999999999999px;top:48.94999999999993px;width:9.4px;height:9.4px;background:#2a2a2a;"></div>
<div style="left:478.8px;top:48.94999999999993px;width:9.2px;height:9.4px;background:#252525;"></div>
<div style="left:490px;top:48.94999999999993px;width:9.2px;height:9.4px;background:#252525;"></div>
<div style="left:501.20000000000005px;top:48.94999999999993px;width:9.2px;height:9.4px;background:#252525;"></div>
<div style="left:338.2px;top:48.94999999999993px;width:8.8px;height:9.4px;background:#262626;"></div>
<div style="left:423.8px;top:48.94999999999993px;width:9.4px;height:9.4px;background:#242424;"></div>
<div style="left:434.9px;top:48.94999999999993px;width:9.4px;height:9.4px;background:#242424;"></div>
<div style="left:445.9px;top:48.94999999999993px;width:9.4px;height:9.4px;background:#242424;"></div>
<div style="left:299.2px;top:47.39999999999998px;width:1px;height:12.5px;background:#1e1e1e;"></div>
<div style="left:606.6px;top:47.39999999999998px;width:11.4px;height:12.5px;background:#262626;"></div>
<div style="left:0px;top:59.89999999999998px;width:618px;height:12.5px;background:#2d2d2d;"></div>
<div style="left:0px;top:71.79999999999995px;width:618px;height:0.9px;background:#242424;"></div>
<div style="left:4.399999999999999px;top:61.44999999999993px;width:9.4px;height:9.4px;background:#252525;"></div>
<div style="left:26.200000000000003px;top:61.44999999999993px;width:9.4px;height:9.4px;background:#252525;"></div>
<div style="left:37.2px;top:61.44999999999993px;width:9.4px;height:9.4px;background:#252525;"></div>
<div style="left:15.399999999999999px;top:61.44999999999993px;width:9.4px;height:9.4px;background:#2a2a2a;"></div>
<div style="left:478.8px;top:61.44999999999993px;width:9.2px;height:9.4px;background:#252525;"></div>
<div style="left:490px;top:61.44999999999993px;width:9.2px;height:9.4px;background:#252525;"></div>
<div style="left:501.20000000000005px;top:61.44999999999993px;width:9.2px;height:9.4px;background:#252525;"></div>
<div style="left:338.2px;top:61.44999999999993px;width:8.8px;height:9.4px;background:#262626;"></div>
<div style="left:423.8px;top:61.44999999999993px;width:9.4px;height:9.4px;background:#242424;"></div>
<div style="left:434.9px;top:61.44999999999993px;width:9.4px;height:9.4px;background:#242424;"></div>
<div style="left:445.9px;top:61.44999999999993px;width:9.4px;height:9.4px;background:#242424;"></div>
<div style="left:299.2px;top:59.89999999999998px;width:1px;height:12.5px;background:#1e1e1e;"></div>
<div style="left:606.6px;top:59.89999999999998px;width:11.4px;height:12.5px;background:#262626;"></div>
<div style="left:0px;top:72.39999999999998px;width:618px;height:12.5px;background:#2d2d2d;"></div>
<div style="left:0px;top:84.29999999999995px;width:618px;height:0.9px;background:#242424;"></div>
<div style="left:4.399999999999999px;top:73.94999999999993px;width:9.4px;height:9.4px;background:#252525;"></div>
<div style="left:26.200000000000003px;top:73.94999999999993px;width:9.4px;height:9.4px;background:#252525;"></div>
<div style="left:37.2px;top:73.94999999999993px;width:9.4px;height:9.4px;background:#252525;"></div>
<div style="left:15.399999999999999px;top:73.94999999999993px;width:9.4px;height:9.4px;background:#2a2a2a;"></div>
<div style="left:478.8px;top:73.94999999999993px;width:9.2px;height:9.4px;background:#252525;"></div>
<div style="left:490px;top:73.94999999999993px;width:9.2px;height:9.4px;background:#252525;"></div>
<div style="left:501.20000000000005px;top:73.94999999999993px;width:9.2px;height:9.4px;background:#252525;"></div>
<div style="left:338.2px;top:73.94999999999993px;width:8.8px;height:9.4px;background:#262626;"></div>
<div style="left:423.8px;top:73.94999999999993px;width:9.4px;height:9.4px;background:#242424;"></div>
<div style="left:434.9px;top:73.94999999999993px;width:9.4px;height:9.4px;background:#242424;"></div>
<div style="left:445.9px;top:73.94999999999993px;width:9.4px;height:9.4px;background:#242424;"></div>
<div style="left:299.2px;top:72.39999999999998px;width:1px;height:12.5px;background:#1e1e1e;"></div>
<div style="left:606.6px;top:72.39999999999998px;width:11.4px;height:12.5px;background:#262626;"></div>
<div style="left:0px;top:84.89999999999998px;width:618px;height:12.5px;background:#2d2d2d;"></div>
<div style="left:0px;top:96.79999999999995px;width:618px;height:0.9px;background:#242424;"></div>
<div style="left:4.399999999999999px;top:86.44999999999993px;width:9.4px;height:9.4px;background:#252525;"></div>
<div style="left:26.200000000000003px;top:86.44999999999993px;width:9.4px;height:9.4px;background:#252525;"></div>
<div style="left:37.2px;top:86.44999999999993px;width:9.4px;height:9.4px;background:#252525;"></div>
<div style="left:15.399999999999999px;top:86.44999999999993px;width:9.4px;height:9.4px;background:#2a2a2a;"></div>
<div style="left:478.8px;top:86.44999999999993px;width:9.2px;height:9.4px;background:#252525;"></div>
<div style="left:490px;top:86.44999999999993px;width:9.2px;height:9.4px;background:#252525;"></div>
<div style="left:501.20000000000005px;top:86.44999999999993px;width:9.2px;height:9.4px;background:#252525;"></div>
<div style="left:338.2px;top:86.44999999999993px;width:8.8px;height:9.4px;background:#262626;"></div>
<div style="left:423.8px;top:86.44999999999993px;width:9.4px;height:9.4px;background:#242424;"></div>
<div style="left:434.9px;top:86.44999999999993px;width:9.4px;height:9.4px;background:#242424;"></div>
<div style="left:445.9px;top:86.44999999999993px;width:9.4px;height:9.4px;background:#242424;"></div>
<div style="left:299.2px;top:84.89999999999998px;width:1px;height:12.5px;background:#1e1e1e;"></div>
<div style="left:606.6px;top:84.89999999999998px;width:11.4px;height:12.5px;background:#262626;"></div>
<div style="left:0px;top:97.39999999999998px;width:618px;height:12.5px;background:#2d2d2d;"></div>
<div style="left:0px;top:109.29999999999995px;width:618px;height:0.9px;background:#242424;"></div>
<div style="left:4.399999999999999px;top:98.94999999999993px;width:9.4px;height:9.4px;background:#252525;"></div>
<div style="left:26.200000000000003px;top:98.94999999999993px;width:9.4px;height:9.4px;background:#252525;"></div>
<div style="left:37.2px;top:98.94999999999993px;width:9.4px;height:9.4px;background:#252525;"></div>
<div style="left:15.399999999999999px;top:98.94999999999993px;width:9.4px;height:9.4px;background:#2a2a2a;"></div>
<div style="left:478.8px;top:98.94999999999993px;width:9.2px;height:9.4px;background:#252525;"></div>
<div style="left:490px;top:98.94999999999993px;width:9.2px;height:9.4px;background:#252525;"></div>
<div style="left:501.20000000000005px;top:98.94999999999993px;width:9.2px;height:9.4px;background:#252525;"></div>
<div style="left:338.2px;top:98.94999999999993px;width:8.8px;height:9.4px;background:#262626;"></div>
<div style="left:423.8px;top:98.94999999999993px;width:9.4px;height:9.4px;background:#242424;"></div>
<div style="left:434.9px;top:98.94999999999993px;width:9.4px;height:9.4px;background:#242424;"></div>
<div style="left:445.9px;top:98.94999999999993px;width:9.4px;height:9.4px;background:#242424;"></div>
<div style="left:299.2px;top:97.39999999999998px;width:1px;height:12.5px;background:#1e1e1e;"></div>
<div style="left:606.6px;top:97.39999999999998px;width:11.4px;height:12.5px;background:#262626;"></div>
<div style="left:0px;top:109.89999999999998px;width:618px;height:12.5px;background:#2d2d2d;"></div>
<div style="left:0px;top:121.79999999999995px;width:618px;height:0.9px;background:#242424;"></div>
<div style="left:4.399999999999999px;top:111.44999999999993px;width:9.4px;height:9.4px;background:#252525;"></div>
<div style="left:26.200000000000003px;top:111.44999999999993px;width:9.4px;height:9.4px;background:#252525;"></div>
<div style="left:37.2px;top:111.44999999999993px;width:9.4px;height:9.4px;background:#252525;"></div>
<div style="left:15.399999999999999px;top:111.44999999999993px;width:9.4px;height:9.4px;background:#2a2a2a;"></div>
<div style="left:478.8px;top:111.44999999999993px;width:9.2px;height:9.4px;background:#252525;"></div>
<div style="left:490px;top:111.44999999999993px;width:9.2px;height:9.4px;background:#252525;"></div>
<div style="left:501.20000000000005px;top:111.44999999999993px;width:9.2px;height:9.4px;background:#252525;"></div>
<div style="left:338.2px;top:111.44999999999993px;width:8.8px;height:9.4px;background:#262626;"></div>
<div style="left:423.8px;top:111.44999999999993px;width:9.4px;height:9.4px;background:#242424;"></div>
<div style="left:434.9px;top:111.44999999999993px;width:9.4px;height:9.4px;background:#242424;"></div>
<div style="left:445.9px;top:111.44999999999993px;width:9.4px;height:9.4px;background:#242424;"></div>
<div style="left:299.2px;top:109.89999999999998px;width:1px;height:12.5px;background:#1e1e1e;"></div>
<div style="left:606.6px;top:109.89999999999998px;width:11.4px;height:12.5px;background:#262626;"></div>
<div style="left:0px;top:122.39999999999998px;width:618px;height:12.5px;background:#2d2d2d;"></div>
<div style="left:0px;top:134.29999999999995px;width:618px;height:0.9px;background:#242424;"></div>
<div style="left:4.399999999999999px;top:123.94999999999993px;width:9.4px;height:9.4px;background:#252525;"></div>
<div style="left:26.200000000000003px;top:123.94999999999993px;width:9.4px;height:9.4px;background:#252525;"></div>
<div style="left:37.2px;top:123.94999999999993px;width:9.4px;height:9.4px;background:#252525;"></div>
<div style="left:15.399999999999999px;top:123.94999999999993px;width:9.4px;height:9.4px;background:#2a2a2a;"></div>
<div style="left:490px;top:123.94999999999993px;width:9.2px;height:9.4px;background:#252525;"></div>
<div style="left:423.8px;top:123.94999999999993px;width:9.4px;height:9.4px;background:#242424;"></div>
<div style="left:434.9px;top:123.94999999999993px;width:9.4px;height:9.4px;background:#242424;"></div>
<div style="left:445.9px;top:123.94999999999993px;width:9.4px;height:9.4px;background:#242424;"></div>
<div style="left:299.2px;top:122.39999999999998px;width:1px;height:12.5px;background:#1e1e1e;"></div>
<div style="left:606.6px;top:122.39999999999998px;width:11.4px;height:12.5px;background:#262626;"></div>
<div style="left:0px;top:134.89999999999998px;width:618px;height:12.5px;background:#2d2d2d;"></div>
<div style="left:0px;top:146.79999999999995px;width:618px;height:0.9px;background:#242424;"></div>
<div style="left:4.399999999999999px;top:136.44999999999993px;width:9.4px;height:9.4px;background:#252525;"></div>
<div style="left:26.200000000000003px;top:136.44999999999993px;width:9.4px;height:9.4px;background:#252525;"></div>
<div style="left:37.2px;top:136.44999999999993px;width:9.4px;height:9.4px;background:#252525;"></div>
<div style="left:15.399999999999999px;top:136.44999999999993px;width:9.4px;height:9.4px;background:#2a2a2a;"></div>
<div style="left:490px;top:136.44999999999993px;width:9.2px;height:9.4px;background:#252525;"></div>
<div style="left:423.8px;top:136.44999999999993px;width:9.4px;height:9.4px;background:#242424;"></div>
<div style="left:434.9px;top:136.44999999999993px;width:9.4px;height:9.4px;background:#242424;"></div>
<div style="left:445.9px;top:136.44999999999993px;width:9.4px;height:9.4px;background:#242424;"></div>
<div style="left:299.2px;top:134.89999999999998px;width:1px;height:12.5px;background:#1e1e1e;"></div>
<div style="left:606.6px;top:134.89999999999998px;width:11.4px;height:12.5px;background:#262626;"></div>
</div>
<div style="left:0px;top:557.6px;width:633px;height:147.4px;overflow:hidden;"><div style="left:0;top:-557.6px;width:633px;height:720px;">
<svg style="left:16.0px;top:553.25px;" width="16" height="16" viewBox="-8.0 -8.0 16 16"><path d="M-4.8 0 C-2.6-3.4 2.6-3.4 4.8 0 C2.6 3.4 -2.6 3.4 -4.8 0 Z" fill="#d6d6d6"/><circle r="1.9" fill="#232323"/><circle r="0.9" fill="#d6d6d6"/></svg>
<svg style="left:70px;top:557.75px" width="5" height="7" viewBox="0 0 5 7"><path d="M0.8 0.6 L3.8 3.5 L0.8 6.4" fill="none" stroke="#b0b0b0" stroke-width="1"/></svg>
<div style="left:78.2px;top:556.65px;width:9.2px;height:9.2px;background:#d23c3c;"></div>
<span style="left:94px;top:555.55px;font-size:8.8px;line-height:12px;color:#cdcdcd;-webkit-text-stroke:0.2px #cdcdcd;">11</span>
<svg style="left:116.2px;top:557.65px" width="7" height="7.4" viewBox="0 0 7 7.4"><path d="M0.2 0.2 H6.8 V2.2 H6.2 L5.8 1.1 H4.3 V6.2 L5.3 6.5 V7.2 H1.7 V6.5 L2.7 6.2 V1.1 H1.2 L0.8 2.2 H0.2 Z" fill="#e4e4e4"/></svg>
<span style="left:129.6px;top:555.25px;font-size:8.7px;line-height:12px;color:#cdcdcd;-webkit-text-stroke:0.25px #cdcdcd;">Roger R...</span>
<span style="left:178px;top:555.25px;font-size:8.7px;line-height:12px;color:#cdcdcd;-webkit-text-stroke:0.25px #cdcdcd;letter-spacing:0.02px;">3/15/2021&nbsp; 11:48Robert Jones</span>
<div style="left:316.2px;top:556.45px;width:32.6px;height:9.6px;background:#1d1d1d;"></div>
<span style="left:321.2px;top:555.65px;font-size:9px;line-height:12px;color:#cdcdcd;-webkit-text-stroke:0.22px #cdcdcd;width:16.6px;overflow:hidden;">Norr</span>
<svg style="left:339.6px;top:559.15px" width="7" height="5" viewBox="0 0 7 5"><path d="M0.6 0.8 L3.5 3.8 L6.4 0.8" fill="none" stroke="#c0c0c0" stroke-width="1"/></svg>
<svg style="left:362.6px;top:553.45px;" width="16" height="16" viewBox="-8.0 -8.0 16 16"><path d="M0.9 0.7 C-0.6 1.3 -1.7-0.6 -0.3-1.6 C1.6-2.8 3.5-0.2 2.2 1.8 C0.4 4.2 -3.8 3.2 -4.3 0.2 C-4.7-2.6 -2.2-4.6 0.6-4.3 C2.4-4.1 3.9-3 4.3-1.2 C4.6 0 4.3 1.2 3.9 1.9" fill="none" stroke="#a8a8a8" stroke-width="1.1" stroke-linecap="round"/></svg>
<div style="left:378.1px;top:556.45px;width:32.5px;height:9.6px;background:#1d1d1d;"></div>
<span style="left:382.8px;top:555.65px;font-size:9px;line-height:12px;color:#cdcdcd;-webkit-text-stroke:0.22px #cdcdcd;width:17px;overflow:hidden;">No M</span>
<svg style="left:401.40000000000003px;top:559.15px" width="7" height="5" viewBox="0 0 7 5"><path d="M0.6 0.8 L3.5 3.8 L6.4 0.8" fill="none" stroke="#c0c0c0" stroke-width="1"/></svg>
<svg style="left:435.6px;top:553.25px;" width="16" height="16" viewBox="-8.0 -8.0 16 16"><path d="M-3.7 1.5 A3.7 4.3 0 0 1 3.7 1.5 Z" fill="#bcbcbc" stroke="#101010" stroke-width="0.9"/><rect x="-2.2" y="-0.9" width="1.3" height="0.8" fill="#2a2a2a"/><rect x="0.9" y="-0.9" width="1.3" height="0.8" fill="#2a2a2a"/><rect x="-0.65" y="-1" width="1.3" height="4.6" rx="0.6" fill="#dcdcdc"/><rect x="-4.7" y="1.5" width="2.4" height="1.3" fill="#c8c8c8"/><rect x="2.3" y="1.5" width="2.4" height="1.3" fill="#c8c8c8"/></svg>
<svg style="left:446.4px;top:553.25px;" width="16" height="16" viewBox="-8.0 -8.0 16 16"><circle r="1.9" fill="none" stroke="#5c5c5c" stroke-width="1.1"/><path d="M0-4V-2.2 M0 2.2V4 M-4 0H-2.2 M2.2 0H4" stroke="#5c5c5c" stroke-width="1.1"/><path d="M-2.6-2.6L-1.7-1.7 M1.7 1.7L2.6 2.6 M2.6-2.6L1.7-1.7 M-1.7 1.7L-2.6 2.6" stroke="#5c5c5c" stroke-width="0.7"/></svg>
<svg style="left:457.4px;top:553.25px;" width="16" height="16" viewBox="-8.0 -8.0 16 16"><path d="M-3.6 3.8 L3.8-3.8" stroke="#d0d0d0" stroke-width="1.2"/></svg>
<svg style="left:535.8px;top:553.45px;" width="16" height="16" viewBox="-8.0 -8.0 16 16"><path d="M0.9 0.7 C-0.6 1.3 -1.7-0.6 -0.3-1.6 C1.6-2.8 3.5-0.2 2.2 1.8 C0.4 4.2 -3.8 3.2 -4.3 0.2 C-4.7-2.6 -2.2-4.6 0.6-4.3 C2.4-4.1 3.9-3 4.3-1.2 C4.6 0 4.3 1.2 3.9 1.9" fill="none" stroke="#a8a8a8" stroke-width="1.1" stroke-linecap="round"/></svg>
<div style="left:552.8px;top:556.45px;width:65.4px;height:9.6px;background:#1d1d1d;"></div>
<span style="left:558.6px;top:555.55px;font-size:9px;line-height:12px;color:#cdcdcd;-webkit-text-stroke:0.22px #cdcdcd;">None</span>
<svg style="left:608.6px;top:559.15px" width="7" height="5" viewBox="0 0 7 5"><path d="M0.6 0.8 L3.5 3.8 L6.4 0.8" fill="none" stroke="#c0c0c0" stroke-width="1"/></svg>
<svg style="left:70px;top:570.25px" width="5" height="7" viewBox="0 0 5 7"><path d="M0.8 0.6 L3.8 3.5 L0.8 6.4" fill="none" stroke="#b0b0b0" stroke-width="1"/></svg>
<div style="left:78.2px;top:569.15px;width:9.2px;height:9.2px;background:#b7b5e0;"></div>
<span style="left:94px;top:568.05px;font-size:8.8px;line-height:12px;color:#cdcdcd;-webkit-text-stroke:0.2px #cdcdcd;">12</span>
<svg style="left:116.0px;top:568.55px" width="9.6" height="10.6" viewBox="0 0 9.6 10.6"><path d="M0.5 1.5 Q0.5 0.5 1.5 0.5 H6.4 L9 3 V9.2 Q9 10.2 8 10.2 H1.5 Q0.5 10.2 0.5 9.2 Z" fill="#2a0b07" stroke="#8e4a0c" stroke-width="0.9"/><path d="M2.2 5.8 L4.4 1.8 L6.2 4.4 L7.4 5.8 Z" fill="#ffa61c"/><rect x="3.8" y="7.2" width="1.7" height="1.5" fill="#f2d8c8"/></svg>
<span style="left:129.6px;top:567.75px;font-size:8.7px;line-height:12px;color:#cdcdcd;-webkit-text-stroke:0.25px #cdcdcd;">text</span>
<div style="left:316.2px;top:568.95px;width:32.6px;height:9.6px;background:#1d1d1d;"></div>
<span style="left:321.2px;top:568.15px;font-size:9px;line-height:12px;color:#cdcdcd;-webkit-text-stroke:0.22px #cdcdcd;width:16.6px;overflow:hidden;">Norr</span>
<svg style="left:339.6px;top:571.65px" width="7" height="5" viewBox="0 0 7 5"><path d="M0.6 0.8 L3.5 3.8 L6.4 0.8" fill="none" stroke="#c0c0c0" stroke-width="1"/></svg>
<svg style="left:362.6px;top:565.95px;" width="16" height="16" viewBox="-8.0 -8.0 16 16"><path d="M0.9 0.7 C-0.6 1.3 -1.7-0.6 -0.3-1.6 C1.6-2.8 3.5-0.2 2.2 1.8 C0.4 4.2 -3.8 3.2 -4.3 0.2 C-4.7-2.6 -2.2-4.6 0.6-4.3 C2.4-4.1 3.9-3 4.3-1.2 C4.6 0 4.3 1.2 3.9 1.9" fill="none" stroke="#a8a8a8" stroke-width="1.1" stroke-linecap="round"/></svg>
<div style="left:378.1px;top:568.95px;width:32.5px;height:9.6px;background:#1d1d1d;"></div>
<span style="left:382.8px;top:568.15px;font-size:9px;line-height:12px;color:#cdcdcd;-webkit-text-stroke:0.22px #cdcdcd;width:17px;overflow:hidden;">No M</span>
<svg style="left:401.40000000000003px;top:571.65px" width="7" height="5" viewBox="0 0 7 5"><path d="M0.6 0.8 L3.5 3.8 L6.4 0.8" fill="none" stroke="#c0c0c0" stroke-width="1"/></svg>
<svg style="left:435.6px;top:565.75px;" width="16" height="16" viewBox="-8.0 -8.0 16 16"><path d="M-3.7 1.5 A3.7 4.3 0 0 1 3.7 1.5 Z" fill="#bcbcbc" stroke="#101010" stroke-width="0.9"/><rect x="-2.2" y="-0.9" width="1.3" height="0.8" fill="#2a2a2a"/><rect x="0.9" y="-0.9" width="1.3" height="0.8" fill="#2a2a2a"/><rect x="-0.65" y="-1" width="1.3" height="4.6" rx="0.6" fill="#dcdcdc"/><rect x="-4.7" y="1.5" width="2.4" height="1.3" fill="#c8c8c8"/><rect x="2.3" y="1.5" width="2.4" height="1.3" fill="#c8c8c8"/></svg>
<svg style="left:457.4px;top:565.75px;" width="16" height="16" viewBox="-8.0 -8.0 16 16"><path d="M-3.6 3.8 L3.8-3.8" stroke="#d0d0d0" stroke-width="1.2"/></svg>
<svg style="left:535.8px;top:565.95px;" width="16" height="16" viewBox="-8.0 -8.0 16 16"><path d="M0.9 0.7 C-0.6 1.3 -1.7-0.6 -0.3-1.6 C1.6-2.8 3.5-0.2 2.2 1.8 C0.4 4.2 -3.8 3.2 -4.3 0.2 C-4.7-2.6 -2.2-4.6 0.6-4.3 C2.4-4.1 3.9-3 4.3-1.2 C4.6 0 4.3 1.2 3.9 1.9" fill="none" stroke="#a8a8a8" stroke-width="1.1" stroke-linecap="round"/></svg>
<div style="left:552.8px;top:568.95px;width:65.4px;height:9.6px;background:#1d1d1d;"></div>
<span style="left:558.6px;top:568.05px;font-size:9px;line-height:12px;color:#cdcdcd;-webkit-text-stroke:0.22px #cdcdcd;">None</span>
<svg style="left:608.6px;top:571.65px" width="7" height="5" viewBox="0 0 7 5"><path d="M0.6 0.8 L3.5 3.8 L6.4 0.8" fill="none" stroke="#c0c0c0" stroke-width="1"/></svg>
<svg style="left:16.0px;top:578.25px;" width="16" height="16" viewBox="-8.0 -8.0 16 16"><path d="M-4.8 0 C-2.6-3.4 2.6-3.4 4.8 0 C2.6 3.4 -2.6 3.4 -4.8 0 Z" fill="#d6d6d6"/><circle r="1.9" fill="#232323"/><circle r="0.9" fill="#d6d6d6"/></svg>
<svg style="left:70px;top:582.75px" width="5" height="7" viewBox="0 0 5 7"><path d="M0.8 0.6 L3.8 3.5 L0.8 6.4" fill="none" stroke="#b0b0b0" stroke-width="1"/></svg>
<div style="left:78.2px;top:581.65px;width:9.2px;height:9.2px;background:#b7b5e0;"></div>
<span style="left:94px;top:580.55px;font-size:8.8px;line-height:12px;color:#cdcdcd;-webkit-text-stroke:0.2px #cdcdcd;">13</span>
<svg style="left:116.0px;top:581.05px" width="9.6" height="10.6" viewBox="0 0 9.6 10.6"><path d="M0.5 1.5 Q0.5 0.5 1.5 0.5 H6.4 L9 3 V9.2 Q9 10.2 8 10.2 H1.5 Q0.5 10.2 0.5 9.2 Z" fill="#2a0b07" stroke="#8e4a0c" stroke-width="0.9"/><path d="M2.2 5.8 L4.4 1.8 L6.2 4.4 L7.4 5.8 Z" fill="#ffa61c"/><rect x="3.8" y="7.2" width="1.7" height="1.5" fill="#f2d8c8"/></svg>
<span style="left:129.6px;top:580.25px;font-size:8.7px;line-height:12px;color:#cdcdcd;-webkit-text-stroke:0.25px #cdcdcd;">log book</span>
<div style="left:316.2px;top:581.45px;width:32.6px;height:9.6px;background:#1d1d1d;"></div>
<span style="left:321.2px;top:580.65px;font-size:9px;line-height:12px;color:#cdcdcd;-webkit-text-stroke:0.22px #cdcdcd;width:16.6px;overflow:hidden;">Norr</span>
<svg style="left:339.6px;top:584.15px" width="7" height="5" viewBox="0 0 7 5"><path d="M0.6 0.8 L3.5 3.8 L6.4 0.8" fill="none" stroke="#c0c0c0" stroke-width="1"/></svg>
<svg style="left:362.6px;top:578.45px;" width="16" height="16" viewBox="-8.0 -8.0 16 16"><path d="M0.9 0.7 C-0.6 1.3 -1.7-0.6 -0.3-1.6 C1.6-2.8 3.5-0.2 2.2 1.8 C0.4 4.2 -3.8 3.2 -4.3 0.2 C-4.7-2.6 -2.2-4.6 0.6-4.3 C2.4-4.1 3.9-3 4.3-1.2 C4.6 0 4.3 1.2 3.9 1.9" fill="none" stroke="#a8a8a8" stroke-width="1.1" stroke-linecap="round"/></svg>
<div style="left:378.1px;top:581.45px;width:32.5px;height:9.6px;background:#1d1d1d;"></div>
<span style="left:382.8px;top:580.65px;font-size:9px;line-height:12px;color:#cdcdcd;-webkit-text-stroke:0.22px #cdcdcd;width:17px;overflow:hidden;">No M</span>
<svg style="left:401.40000000000003px;top:584.15px" width="7" height="5" viewBox="0 0 7 5"><path d="M0.6 0.8 L3.5 3.8 L6.4 0.8" fill="none" stroke="#c0c0c0" stroke-width="1"/></svg>
<svg style="left:435.6px;top:578.25px;" width="16" height="16" viewBox="-8.0 -8.0 16 16"><path d="M-3.7 1.5 A3.7 4.3 0 0 1 3.7 1.5 Z" fill="#bcbcbc" stroke="#101010" stroke-width="0.9"/><rect x="-2.2" y="-0.9" width="1.3" height="0.8" fill="#2a2a2a"/><rect x="0.9" y="-0.9" width="1.3" height="0.8" fill="#2a2a2a"/><rect x="-0.65" y="-1" width="1.3" height="4.6" rx="0.6" fill="#dcdcdc"/><rect x="-4.7" y="1.5" width="2.4" height="1.3" fill="#c8c8c8"/><rect x="2.3" y="1.5" width="2.4" height="1.3" fill="#c8c8c8"/></svg>
<svg style="left:457.4px;top:578.25px;" width="16" height="16" viewBox="-8.0 -8.0 16 16"><path d="M-3.6 3.8 L3.8-3.8" stroke="#d0d0d0" stroke-width="1.2"/></svg>
<svg style="left:535.8px;top:578.45px;" width="16" height="16" viewBox="-8.0 -8.0 16 16"><path d="M0.9 0.7 C-0.6 1.3 -1.7-0.6 -0.3-1.6 C1.6-2.8 3.5-0.2 2.2 1.8 C0.4 4.2 -3.8 3.2 -4.3 0.2 C-4.7-2.6 -2.2-4.6 0.6-4.3 C2.4-4.1 3.9-3 4.3-1.2 C4.6 0 4.3 1.2 3.9 1.9" fill="none" stroke="#a8a8a8" stroke-width="1.1" stroke-linecap="round"/></svg>
<div style="left:552.8px;top:581.45px;width:65.4px;height:9.6px;background:#1d1d1d;"></div>
<span style="left:558.6px;top:580.55px;font-size:9px;line-height:12px;color:#cdcdcd;-webkit-text-stroke:0.22px #cdcdcd;">None</span>
<svg style="left:608.6px;top:584.15px" width="7" height="5" viewBox="0 0 7 5"><path d="M0.6 0.8 L3.5 3.8 L6.4 0.8" fill="none" stroke="#c0c0c0" stroke-width="1"/></svg>
<svg style="left:16.0px;top:590.75px;" width="16" height="16" viewBox="-8.0 -8.0 16 16"><path d="M-4.8 0 C-2.6-3.4 2.6-3.4 4.8 0 C2.6 3.4 -2.6 3.4 -4.8 0 Z" fill="#d6d6d6"/><circle r="1.9" fill="#232323"/><circle r="0.9" fill="#d6d6d6"/></svg>
<svg style="left:70px;top:595.25px" width="5" height="7" viewBox="0 0 5 7"><path d="M0.8 0.6 L3.8 3.5 L0.8 6.4" fill="none" stroke="#b0b0b0" stroke-width="1"/></svg>
<div style="left:78.2px;top:594.15px;width:9.2px;height:9.2px;background:#b7b5e0;"></div>
<span style="left:94px;top:593.05px;font-size:8.8px;line-height:12px;color:#cdcdcd;-webkit-text-stroke:0.2px #cdcdcd;">14</span>
<svg style="left:116.0px;top:593.55px" width="9.6" height="10.6" viewBox="0 0 9.6 10.6"><path d="M0.5 1.5 Q0.5 0.5 1.5 0.5 H6.4 L9 3 V9.2 Q9 10.2 8 10.2 H1.5 Q0.5 10.2 0.5 9.2 Z" fill="#2a0b07" stroke="#8e4a0c" stroke-width="0.9"/><path d="M2.2 5.8 L4.4 1.8 L6.2 4.4 L7.4 5.8 Z" fill="#ffa61c"/><rect x="3.8" y="7.2" width="1.7" height="1.5" fill="#f2d8c8"/></svg>
<span style="left:129.6px;top:592.75px;font-size:8.7px;line-height:12px;color:#cdcdcd;-webkit-text-stroke:0.25px #cdcdcd;">hand - bottom</span>
<div style="left:316.2px;top:593.95px;width:32.6px;height:9.6px;background:#1d1d1d;"></div>
<span style="left:321.2px;top:593.15px;font-size:9px;line-height:12px;color:#cdcdcd;-webkit-text-stroke:0.22px #cdcdcd;width:16.6px;overflow:hidden;">Norr</span>
<svg style="left:339.6px;top:596.65px" width="7" height="5" viewBox="0 0 7 5"><path d="M0.6 0.8 L3.5 3.8 L6.4 0.8" fill="none" stroke="#c0c0c0" stroke-width="1"/></svg>
<svg style="left:362.6px;top:590.95px;" width="16" height="16" viewBox="-8.0 -8.0 16 16"><path d="M0.9 0.7 C-0.6 1.3 -1.7-0.6 -0.3-1.6 C1.6-2.8 3.5-0.2 2.2 1.8 C0.4 4.2 -3.8 3.2 -4.3 0.2 C-4.7-2.6 -2.2-4.6 0.6-4.3 C2.4-4.1 3.9-3 4.3-1.2 C4.6 0 4.3 1.2 3.9 1.9" fill="none" stroke="#a8a8a8" stroke-width="1.1" stroke-linecap="round"/></svg>
<div style="left:378.1px;top:593.95px;width:32.5px;height:9.6px;background:#1d1d1d;"></div>
<span style="left:382.8px;top:593.15px;font-size:9px;line-height:12px;color:#cdcdcd;-webkit-text-stroke:0.22px #cdcdcd;width:17px;overflow:hidden;">No M</span>
<svg style="left:401.40000000000003px;top:596.65px" width="7" height="5" viewBox="0 0 7 5"><path d="M0.6 0.8 L3.5 3.8 L6.4 0.8" fill="none" stroke="#c0c0c0" stroke-width="1"/></svg>
<svg style="left:435.6px;top:590.75px;" width="16" height="16" viewBox="-8.0 -8.0 16 16"><path d="M-3.7 1.5 A3.7 4.3 0 0 1 3.7 1.5 Z" fill="#bcbcbc" stroke="#101010" stroke-width="0.9"/><rect x="-2.2" y="-0.9" width="1.3" height="0.8" fill="#2a2a2a"/><rect x="0.9" y="-0.9" width="1.3" height="0.8" fill="#2a2a2a"/><rect x="-0.65" y="-1" width="1.3" height="4.6" rx="0.6" fill="#dcdcdc"/><rect x="-4.7" y="1.5" width="2.4" height="1.3" fill="#c8c8c8"/><rect x="2.3" y="1.5" width="2.4" height="1.3" fill="#c8c8c8"/></svg>
<svg style="left:457.4px;top:590.75px;" width="16" height="16" viewBox="-8.0 -8.0 16 16"><path d="M-3.6 3.8 L3.8-3.8" stroke="#d0d0d0" stroke-width="1.2"/></svg>
<svg style="left:535.8px;top:590.95px;" width="16" height="16" viewBox="-8.0 -8.0 16 16"><path d="M0.9 0.7 C-0.6 1.3 -1.7-0.6 -0.3-1.6 C1.6-2.8 3.5-0.2 2.2 1.8 C0.4 4.2 -3.8 3.2 -4.3 0.2 C-4.7-2.6 -2.2-4.6 0.6-4.3 C2.4-4.1 3.9-3 4.3-1.2 C4.6 0 4.3 1.2 3.9 1.9" fill="none" stroke="#a8a8a8" stroke-width="1.1" stroke-linecap="round"/></svg>
<div style="left:552.8px;top:593.95px;width:65.4px;height:9.6px;background:#1d1d1d;"></div>
<span style="left:558.6px;top:593.05px;font-size:9px;line-height:12px;color:#cdcdcd;-webkit-text-stroke:0.22px #cdcdcd;">None</span>
<svg style="left:608.6px;top:596.65px" width="7" height="5" viewBox="0 0 7 5"><path d="M0.6 0.8 L3.5 3.8 L6.4 0.8" fill="none" stroke="#c0c0c0" stroke-width="1"/></svg>
<svg style="left:70px;top:607.75px" width="5" height="7" viewBox="0 0 5 7"><path d="M0.8 0.6 L3.8 3.5 L0.8 6.4" fill="none" stroke="#b0b0b0" stroke-width="1"/></svg>
<div style="left:78.2px;top:606.65px;width:9.2px;height:9.2px;background:#b7b5e0;"></div>
<span style="left:94px;top:605.55px;font-size:8.8px;line-height:12px;color:#cdcdcd;-webkit-text-stroke:0.2px #cdcdcd;">15</span>
<svg style="left:116.0px;top:606.05px" width="9.6" height="10.6" viewBox="0 0 9.6 10.6"><path d="M0.5 1.5 Q0.5 0.5 1.5 0.5 H6.4 L9 3 V9.2 Q9 10.2 8 10.2 H1.5 Q0.5 10.2 0.5 9.2 Z" fill="#2a0b07" stroke="#8e4a0c" stroke-width="0.9"/><path d="M2.2 5.8 L4.4 1.8 L6.2 4.4 L7.4 5.8 Z" fill="#ffa61c"/><rect x="3.8" y="7.2" width="1.7" height="1.5" fill="#f2d8c8"/></svg>
<span style="left:129.6px;top:605.25px;font-size:8.7px;line-height:12px;color:#cdcdcd;-webkit-text-stroke:0.25px #cdcdcd;">bg</span>
<div style="left:316.2px;top:606.45px;width:32.6px;height:9.6px;background:#1d1d1d;"></div>
<span style="left:321.2px;top:605.65px;font-size:9px;line-height:12px;color:#cdcdcd;-webkit-text-stroke:0.22px #cdcdcd;width:16.6px;overflow:hidden;">Norr</span>
<svg style="left:339.6px;top:609.15px" width="7" height="5" viewBox="0 0 7 5"><path d="M0.6 0.8 L3.5 3.8 L6.4 0.8" fill="none" stroke="#c0c0c0" stroke-width="1"/></svg>
<svg style="left:362.6px;top:603.45px;" width="16" height="16" viewBox="-8.0 -8.0 16 16"><path d="M0.9 0.7 C-0.6 1.3 -1.7-0.6 -0.3-1.6 C1.6-2.8 3.5-0.2 2.2 1.8 C0.4 4.2 -3.8 3.2 -4.3 0.2 C-4.7-2.6 -2.2-4.6 0.6-4.3 C2.4-4.1 3.9-3 4.3-1.2 C4.6 0 4.3 1.2 3.9 1.9" fill="none" stroke="#a8a8a8" stroke-width="1.1" stroke-linecap="round"/></svg>
<div style="left:378.1px;top:606.45px;width:32.5px;height:9.6px;background:#1d1d1d;"></div>
<span style="left:382.8px;top:605.65px;font-size:9px;line-height:12px;color:#cdcdcd;-webkit-text-stroke:0.22px #cdcdcd;width:17px;overflow:hidden;">No M</span>
<svg style="left:401.40000000000003px;top:609.15px" width="7" height="5" viewBox="0 0 7 5"><path d="M0.6 0.8 L3.5 3.8 L6.4 0.8" fill="none" stroke="#c0c0c0" stroke-width="1"/></svg>
<svg style="left:435.6px;top:603.25px;" width="16" height="16" viewBox="-8.0 -8.0 16 16"><path d="M-3.7 1.5 A3.7 4.3 0 0 1 3.7 1.5 Z" fill="#bcbcbc" stroke="#101010" stroke-width="0.9"/><rect x="-2.2" y="-0.9" width="1.3" height="0.8" fill="#2a2a2a"/><rect x="0.9" y="-0.9" width="1.3" height="0.8" fill="#2a2a2a"/><rect x="-0.65" y="-1" width="1.3" height="4.6" rx="0.6" fill="#dcdcdc"/><rect x="-4.7" y="1.5" width="2.4" height="1.3" fill="#c8c8c8"/><rect x="2.3" y="1.5" width="2.4" height="1.3" fill="#c8c8c8"/></svg>
<svg style="left:457.4px;top:603.25px;" width="16" height="16" viewBox="-8.0 -8.0 16 16"><path d="M-3.6 3.8 L3.8-3.8" stroke="#d0d0d0" stroke-width="1.2"/></svg>
<svg style="left:535.8px;top:603.45px;" width="16" height="16" viewBox="-8.0 -8.0 16 16"><path d="M0.9 0.7 C-0.6 1.3 -1.7-0.6 -0.3-1.6 C1.6-2.8 3.5-0.2 2.2 1.8 C0.4 4.2 -3.8 3.2 -4.3 0.2 C-4.7-2.6 -2.2-4.6 0.6-4.3 C2.4-4.1 3.9-3 4.3-1.2 C4.6 0 4.3 1.2 3.9 1.9" fill="none" stroke="#a8a8a8" stroke-width="1.1" stroke-linecap="round"/></svg>
<div style="left:552.8px;top:606.45px;width:65.4px;height:9.6px;background:#1d1d1d;"></div>
<span style="left:558.6px;top:605.55px;font-size:9px;line-height:12px;color:#cdcdcd;-webkit-text-stroke:0.22px #cdcdcd;">None</span>
<svg style="left:608.6px;top:609.15px" width="7" height="5" viewBox="0 0 7 5"><path d="M0.6 0.8 L3.5 3.8 L6.4 0.8" fill="none" stroke="#c0c0c0" stroke-width="1"/></svg>
<svg style="left:16.0px;top:615.75px;" width="16" height="16" viewBox="-8.0 -8.0 16 16"><path d="M-4.8 0 C-2.6-3.4 2.6-3.4 4.8 0 C2.6 3.4 -2.6 3.4 -4.8 0 Z" fill="#d6d6d6"/><circle r="1.9" fill="#232323"/><circle r="0.9" fill="#d6d6d6"/></svg>
<svg style="left:70px;top:620.25px" width="5" height="7" viewBox="0 0 5 7"><path d="M0.8 0.6 L3.8 3.5 L0.8 6.4" fill="none" stroke="#b0b0b0" stroke-width="1"/></svg>
<div style="left:78.2px;top:619.15px;width:9.2px;height:9.2px;background:#b7b5e0;"></div>
<span style="left:94px;top:618.05px;font-size:8.8px;line-height:12px;color:#cdcdcd;-webkit-text-stroke:0.2px #cdcdcd;">16</span>
<svg style="left:116.0px;top:618.55px" width="9.6" height="10.6" viewBox="0 0 9.6 10.6"><path d="M0.5 1.5 Q0.5 0.5 1.5 0.5 H6.4 L9 3 V9.2 Q9 10.2 8 10.2 H1.5 Q0.5 10.2 0.5 9.2 Z" fill="#2a0b07" stroke="#8e4a0c" stroke-width="0.9"/><path d="M2.2 5.8 L4.4 1.8 L6.2 4.4 L7.4 5.8 Z" fill="#ffa61c"/><rect x="3.8" y="7.2" width="1.7" height="1.5" fill="#f2d8c8"/></svg>
<span style="left:129.6px;top:617.75px;font-size:8.7px;line-height:12px;color:#cdcdcd;-webkit-text-stroke:0.25px #cdcdcd;">Extra Layer</span>
<div style="left:316.2px;top:618.95px;width:32.6px;height:9.6px;background:#1d1d1d;"></div>
<span style="left:321.2px;top:618.15px;font-size:9px;line-height:12px;color:#cdcdcd;-webkit-text-stroke:0.22px #cdcdcd;width:16.6px;overflow:hidden;">Norr</span>
<svg style="left:339.6px;top:621.65px" width="7" height="5" viewBox="0 0 7 5"><path d="M0.6 0.8 L3.5 3.8 L6.4 0.8" fill="none" stroke="#c0c0c0" stroke-width="1"/></svg>
<svg style="left:362.6px;top:615.95px;" width="16" height="16" viewBox="-8.0 -8.0 16 16"><path d="M0.9 0.7 C-0.6 1.3 -1.7-0.6 -0.3-1.6 C1.6-2.8 3.5-0.2 2.2 1.8 C0.4 4.2 -3.8 3.2 -4.3 0.2 C-4.7-2.6 -2.2-4.6 0.6-4.3 C2.4-4.1 3.9-3 4.3-1.2 C4.6 0 4.3 1.2 3.9 1.9" fill="none" stroke="#a8a8a8" stroke-width="1.1" stroke-linecap="round"/></svg>
<div style="left:378.1px;top:618.95px;width:32.5px;height:9.6px;background:#1d1d1d;"></div>
<span style="left:382.8px;top:618.15px;font-size:9px;line-height:12px;color:#cdcdcd;-webkit-text-stroke:0.22px #cdcdcd;width:17px;overflow:hidden;">No M</span>
<svg style="left:401.40000000000003px;top:621.65px" width="7" height="5" viewBox="0 0 7 5"><path d="M0.6 0.8 L3.5 3.8 L6.4 0.8" fill="none" stroke="#c0c0c0" stroke-width="1"/></svg>
<svg style="left:435.6px;top:615.75px;" width="16" height="16" viewBox="-8.0 -8.0 16 16"><path d="M-3.7 1.5 A3.7 4.3 0 0 1 3.7 1.5 Z" fill="#bcbcbc" stroke="#101010" stroke-width="0.9"/><rect x="-2.2" y="-0.9" width="1.3" height="0.8" fill="#2a2a2a"/><rect x="0.9" y="-0.9" width="1.3" height="0.8" fill="#2a2a2a"/><rect x="-0.65" y="-1" width="1.3" height="4.6" rx="0.6" fill="#dcdcdc"/><rect x="-4.7" y="1.5" width="2.4" height="1.3" fill="#c8c8c8"/><rect x="2.3" y="1.5" width="2.4" height="1.3" fill="#c8c8c8"/></svg>
<svg style="left:457.4px;top:615.75px;" width="16" height="16" viewBox="-8.0 -8.0 16 16"><path d="M-3.6 3.8 L3.8-3.8" stroke="#d0d0d0" stroke-width="1.2"/></svg>
<svg style="left:535.8px;top:615.95px;" width="16" height="16" viewBox="-8.0 -8.0 16 16"><path d="M0.9 0.7 C-0.6 1.3 -1.7-0.6 -0.3-1.6 C1.6-2.8 3.5-0.2 2.2 1.8 C0.4 4.2 -3.8 3.2 -4.3 0.2 C-4.7-2.6 -2.2-4.6 0.6-4.3 C2.4-4.1 3.9-3 4.3-1.2 C4.6 0 4.3 1.2 3.9 1.9" fill="none" stroke="#a8a8a8" stroke-width="1.1" stroke-linecap="round"/></svg>
<div style="left:552.8px;top:618.95px;width:65.4px;height:9.6px;background:#1d1d1d;"></div>
<span style="left:558.6px;top:618.05px;font-size:9px;line-height:12px;color:#cdcdcd;-webkit-text-stroke:0.22px #cdcdcd;">None</span>
<svg style="left:608.6px;top:621.65px" width="7" height="5" viewBox="0 0 7 5"><path d="M0.6 0.8 L3.5 3.8 L6.4 0.8" fill="none" stroke="#c0c0c0" stroke-width="1"/></svg>
<svg style="left:16.0px;top:628.25px;" width="16" height="16" viewBox="-8.0 -8.0 16 16"><path d="M-4.8 0 C-2.6-3.4 2.6-3.4 4.8 0 C2.6 3.4 -2.6 3.4 -4.8 0 Z" fill="#d6d6d6"/><circle r="1.9" fill="#232323"/><circle r="0.9" fill="#d6d6d6"/></svg>
<svg style="left:70px;top:632.75px" width="5" height="7" viewBox="0 0 5 7"><path d="M0.8 0.6 L3.8 3.5 L0.8 6.4" fill="none" stroke="#b0b0b0" stroke-width="1"/></svg>
<div style="left:78.2px;top:631.65px;width:9.2px;height:9.2px;background:#b7b5e0;"></div>
<span style="left:94px;top:630.55px;font-size:8.8px;line-height:12px;color:#cdcdcd;-webkit-text-stroke:0.2px #cdcdcd;">17</span>
<svg style="left:116.0px;top:631.05px" width="9.6" height="10.6" viewBox="0 0 9.6 10.6"><path d="M0.5 1.5 Q0.5 0.5 1.5 0.5 H6.4 L9 3 V9.2 Q9 10.2 8 10.2 H1.5 Q0.5 10.2 0.5 9.2 Z" fill="#2a0b07" stroke="#8e4a0c" stroke-width="0.9"/><path d="M2.2 5.8 L4.4 1.8 L6.2 4.4 L7.4 5.8 Z" fill="#ffa61c"/><rect x="3.8" y="7.2" width="1.7" height="1.5" fill="#f2d8c8"/></svg>
<span style="left:129.6px;top:630.25px;font-size:8.7px;line-height:12px;color:#cdcdcd;-webkit-text-stroke:0.25px #cdcdcd;">Extra Layer</span>
<div style="left:316.2px;top:631.45px;width:32.6px;height:9.6px;background:#1d1d1d;"></div>
<span style="left:321.2px;top:630.65px;font-size:9px;line-height:12px;color:#cdcdcd;-webkit-text-stroke:0.22px #cdcdcd;width:16.6px;overflow:hidden;">Norr</span>
<svg style="left:339.6px;top:634.15px" width="7" height="5" viewBox="0 0 7 5"><path d="M0.6 0.8 L3.5 3.8 L6.4 0.8" fill="none" stroke="#c0c0c0" stroke-width="1"/></svg>
<svg style="left:362.6px;top:628.45px;" width="16" height="16" viewBox="-8.0 -8.0 16 16"><path d="M0.9 0.7 C-0.6 1.3 -1.7-0.6 -0.3-1.6 C1.6-2.8 3.5-0.2 2.2 1.8 C0.4 4.2 -3.8 3.2 -4.3 0.2 C-4.7-2.6 -2.2-4.6 0.6-4.3 C2.4-4.1 3.9-3 4.3-1.2 C4.6 0 4.3 1.2 3.9 1.9" fill="none" stroke="#a8a8a8" stroke-width="1.1" stroke-linecap="round"/></svg>
<div style="left:378.1px;top:631.45px;width:32.5px;height:9.6px;background:#1d1d1d;"></div>
<span style="left:382.8px;top:630.65px;font-size:9px;line-height:12px;color:#cdcdcd;-webkit-text-stroke:0.22px #cdcdcd;width:17px;overflow:hidden;">No M</span>
<svg style="left:401.40000000000003px;top:634.15px" width="7" height="5" viewBox="0 0 7 5"><path d="M0.6 0.8 L3.5 3.8 L6.4 0.8" fill="none" stroke="#c0c0c0" stroke-width="1"/></svg>
<svg style="left:435.6px;top:628.25px;" width="16" height="16" viewBox="-8.0 -8.0 16 16"><path d="M-3.7 1.5 A3.7 4.3 0 0 1 3.7 1.5 Z" fill="#bcbcbc" stroke="#101010" stroke-width="0.9"/><rect x="-2.2" y="-0.9" width="1.3" height="0.8" fill="#2a2a2a"/><rect x="0.9" y="-0.9" width="1.3" height="0.8" fill="#2a2a2a"/><rect x="-0.65" y="-1" width="1.3" height="4.6" rx="0.6" fill="#dcdcdc"/><rect x="-4.7" y="1.5" width="2.4" height="1.3" fill="#c8c8c8"/><rect x="2.3" y="1.5" width="2.4" height="1.3" fill="#c8c8c8"/></svg>
<svg style="left:457.4px;top:628.25px;" width="16" height="16" viewBox="-8.0 -8.0 16 16"><path d="M-3.6 3.8 L3.8-3.8" stroke="#d0d0d0" stroke-width="1.2"/></svg>
<svg style="left:535.8px;top:628.45px;" width="16" height="16" viewBox="-8.0 -8.0 16 16"><path d="M0.9 0.7 C-0.6 1.3 -1.7-0.6 -0.3-1.6 C1.6-2.8 3.5-0.2 2.2 1.8 C0.4 4.2 -3.8 3.2 -4.3 0.2 C-4.7-2.6 -2.2-4.6 0.6-4.3 C2.4-4.1 3.9-3 4.3-1.2 C4.6 0 4.3 1.2 3.9 1.9" fill="none" stroke="#a8a8a8" stroke-width="1.1" stroke-linecap="round"/></svg>
<div style="left:552.8px;top:631.45px;width:65.4px;height:9.6px;background:#1d1d1d;"></div>
<span style="left:558.6px;top:630.55px;font-size:9px;line-height:12px;color:#cdcdcd;-webkit-text-stroke:0.22px #cdcdcd;">None</span>
<svg style="left:608.6px;top:634.15px" width="7" height="5" viewBox="0 0 7 5"><path d="M0.6 0.8 L3.5 3.8 L6.4 0.8" fill="none" stroke="#c0c0c0" stroke-width="1"/></svg>
<svg style="left:16.0px;top:640.75px;" width="16" height="16" viewBox="-8.0 -8.0 16 16"><path d="M-4.8 0 C-2.6-3.4 2.6-3.4 4.8 0 C2.6 3.4 -2.6 3.4 -4.8 0 Z" fill="#d6d6d6"/><circle r="1.9" fill="#232323"/><circle r="0.9" fill="#d6d6d6"/></svg>
<svg style="left:70px;top:645.25px" width="5" height="7" viewBox="0 0 5 7"><path d="M0.8 0.6 L3.8 3.5 L0.8 6.4" fill="none" stroke="#b0b0b0" stroke-width="1"/></svg>
<div style="left:78.2px;top:644.15px;width:9.2px;height:9.2px;background:#b7b5e0;"></div>
<span style="left:94px;top:643.05px;font-size:8.8px;line-height:12px;color:#cdcdcd;-webkit-text-stroke:0.2px #cdcdcd;">18</span>
<svg style="left:116.0px;top:643.55px" width="9.6" height="10.6" viewBox="0 0 9.6 10.6"><path d="M0.5 1.5 Q0.5 0.5 1.5 0.5 H6.4 L9 3 V9.2 Q9 10.2 8 10.2 H1.5 Q0.5 10.2 0.5 9.2 Z" fill="#2a0b07" stroke="#8e4a0c" stroke-width="0.9"/><path d="M2.2 5.8 L4.4 1.8 L6.2 4.4 L7.4 5.8 Z" fill="#ffa61c"/><rect x="3.8" y="7.2" width="1.7" height="1.5" fill="#f2d8c8"/></svg>
<span style="left:129.6px;top:642.75px;font-size:8.7px;line-height:12px;color:#cdcdcd;-webkit-text-stroke:0.25px #cdcdcd;">Extra Layer</span>
<div style="left:316.2px;top:643.95px;width:32.6px;height:9.6px;background:#1d1d1d;"></div>
<span style="left:321.2px;top:643.15px;font-size:9px;line-height:12px;color:#cdcdcd;-webkit-text-stroke:0.22px #cdcdcd;width:16.6px;overflow:hidden;">Norr</span>
<svg style="left:339.6px;top:646.65px" width="7" height="5" viewBox="0 0 7 5"><path d="M0.6 0.8 L3.5 3.8 L6.4 0.8" fill="none" stroke="#c0c0c0" stroke-width="1"/></svg>
<svg style="left:362.6px;top:640.95px;" width="16" height="16" viewBox="-8.0 -8.0 16 16"><path d="M0.9 0.7 C-0.6 1.3 -1.7-0.6 -0.3-1.6 C1.6-2.8 3.5-0.2 2.2 1.8 C0.4 4.2 -3.8 3.2 -4.3 0.2 C-4.7-2.6 -2.2-4.6 0.6-4.3 C2.4-4.1 3.9-3 4.3-1.2 C4.6 0 4.3 1.2 3.9 1.9" fill="none" stroke="#a8a8a8" stroke-width="1.1" stroke-linecap="round"/></svg>
<div style="left:378.1px;top:643.95px;width:32.5px;height:9.6px;background:#1d1d1d;"></div>
<span style="left:382.8px;top:643.15px;font-size:9px;line-height:12px;color:#cdcdcd;-webkit-text-stroke:0.22px #cdcdcd;width:17px;overflow:hidden;">No M</span>
<svg style="left:401.40000000000003px;top:646.65px" width="7" height="5" viewBox="0 0 7 5"><path d="M0.6 0.8 L3.5 3.8 L6.4 0.8" fill="none" stroke="#c0c0c0" stroke-width="1"/></svg>
<svg style="left:435.6px;top:640.75px;" width="16" height="16" viewBox="-8.0 -8.0 16 16"><path d="M-3.7 1.5 A3.7 4.3 0 0 1 3.7 1.5 Z" fill="#bcbcbc" stroke="#101010" stroke-width="0.9"/><rect x="-2.2" y="-0.9" width="1.3" height="0.8" fill="#2a2a2a"/><rect x="0.9" y="-0.9" width="1.3" height="0.8" fill="#2a2a2a"/><rect x="-0.65" y="-1" width="1.3" height="4.6" rx="0.6" fill="#dcdcdc"/><rect x="-4.7" y="1.5" width="2.4" height="1.3" fill="#c8c8c8"/><rect x="2.3" y="1.5" width="2.4" height="1.3" fill="#c8c8c8"/></svg>
<svg style="left:457.4px;top:640.75px;" width="16" height="16" viewBox="-8.0 -8.0 16 16"><path d="M-3.6 3.8 L3.8-3.8" stroke="#d0d0d0" stroke-width="1.2"/></svg>
<svg style="left:535.8px;top:640.95px;" width="16" height="16" viewBox="-8.0 -8.0 16 16"><path d="M0.9 0.7 C-0.6 1.3 -1.7-0.6 -0.3-1.6 C1.6-2.8 3.5-0.2 2.2 1.8 C0.4 4.2 -3.8 3.2 -4.3 0.2 C-4.7-2.6 -2.2-4.6 0.6-4.3 C2.4-4.1 3.9-3 4.3-1.2 C4.6 0 4.3 1.2 3.9 1.9" fill="none" stroke="#a8a8a8" stroke-width="1.1" stroke-linecap="round"/></svg>
<div style="left:552.8px;top:643.95px;width:65.4px;height:9.6px;background:#1d1d1d;"></div>
<span style="left:558.6px;top:643.05px;font-size:9px;line-height:12px;color:#cdcdcd;-webkit-text-stroke:0.22px #cdcdcd;">None</span>
<svg style="left:608.6px;top:646.65px" width="7" height="5" viewBox="0 0 7 5"><path d="M0.6 0.8 L3.5 3.8 L6.4 0.8" fill="none" stroke="#c0c0c0" stroke-width="1"/></svg>
<svg style="left:16.0px;top:653.25px;" width="16" height="16" viewBox="-8.0 -8.0 16 16"><path d="M-4.8 0 C-2.6-3.4 2.6-3.4 4.8 0 C2.6 3.4 -2.6 3.4 -4.8 0 Z" fill="#d6d6d6"/><circle r="1.9" fill="#232323"/><circle r="0.9" fill="#d6d6d6"/></svg>
<svg style="left:70px;top:657.75px" width="5" height="7" viewBox="0 0 5 7"><path d="M0.8 0.6 L3.8 3.5 L0.8 6.4" fill="none" stroke="#b0b0b0" stroke-width="1"/></svg>
<div style="left:78.2px;top:656.65px;width:9.2px;height:9.2px;background:#b7b5e0;"></div>
<span style="left:94px;top:655.55px;font-size:8.8px;line-height:12px;color:#cdcdcd;-webkit-text-stroke:0.2px #cdcdcd;">19</span>
<svg style="left:116.0px;top:656.05px" width="9.6" height="10.6" viewBox="0 0 9.6 10.6"><path d="M0.5 1.5 Q0.5 0.5 1.5 0.5 H6.4 L9 3 V9.2 Q9 10.2 8 10.2 H1.5 Q0.5 10.2 0.5 9.2 Z" fill="#2a0b07" stroke="#8e4a0c" stroke-width="0.9"/><path d="M2.2 5.8 L4.4 1.8 L6.2 4.4 L7.4 5.8 Z" fill="#ffa61c"/><rect x="3.8" y="7.2" width="1.7" height="1.5" fill="#f2d8c8"/></svg>
<span style="left:129.6px;top:655.25px;font-size:8.7px;line-height:12px;color:#cdcdcd;-webkit-text-stroke:0.25px #cdcdcd;">Extra Layer</span>
<div style="left:316.2px;top:656.45px;width:32.6px;height:9.6px;background:#1d1d1d;"></div>
<span style="left:321.2px;top:655.65px;font-size:9px;line-height:12px;color:#cdcdcd;-webkit-text-stroke:0.22px #cdcdcd;width:16.6px;overflow:hidden;">Norr</span>
<svg style="left:339.6px;top:659.15px" width="7" height="5" viewBox="0 0 7 5"><path d="M0.6 0.8 L3.5 3.8 L6.4 0.8" fill="none" stroke="#c0c0c0" stroke-width="1"/></svg>
<svg style="left:362.6px;top:653.45px;" width="16" height="16" viewBox="-8.0 -8.0 16 16"><path d="M0.9 0.7 C-0.6 1.3 -1.7-0.6 -0.3-1.6 C1.6-2.8 3.5-0.2 2.2 1.8 C0.4 4.2 -3.8 3.2 -4.3 0.2 C-4.7-2.6 -2.2-4.6 0.6-4.3 C2.4-4.1 3.9-3 4.3-1.2 C4.6 0 4.3 1.2 3.9 1.9" fill="none" stroke="#a8a8a8" stroke-width="1.1" stroke-linecap="round"/></svg>
<div style="left:378.1px;top:656.45px;width:32.5px;height:9.6px;background:#1d1d1d;"></div>
<span style="left:382.8px;top:655.65px;font-size:9px;line-height:12px;color:#cdcdcd;-webkit-text-stroke:0.22px #cdcdcd;width:17px;overflow:hidden;">No M</span>
<svg style="left:401.40000000000003px;top:659.15px" width="7" height="5" viewBox="0 0 7 5"><path d="M0.6 0.8 L3.5 3.8 L6.4 0.8" fill="none" stroke="#c0c0c0" stroke-width="1"/></svg>
<svg style="left:435.6px;top:653.25px;" width="16" height="16" viewBox="-8.0 -8.0 16 16"><path d="M-3.7 1.5 A3.7 4.3 0 0 1 3.7 1.5 Z" fill="#bcbcbc" stroke="#101010" stroke-width="0.9"/><rect x="-2.2" y="-0.9" width="1.3" height="0.8" fill="#2a2a2a"/><rect x="0.9" y="-0.9" width="1.3" height="0.8" fill="#2a2a2a"/><rect x="-0.65" y="-1" width="1.3" height="4.6" rx="0.6" fill="#dcdcdc"/><rect x="-4.7" y="1.5" width="2.4" height="1.3" fill="#c8c8c8"/><rect x="2.3" y="1.5" width="2.4" height="1.3" fill="#c8c8c8"/></svg>
<svg style="left:457.4px;top:653.25px;" width="16" height="16" viewBox="-8.0 -8.0 16 16"><path d="M-3.6 3.8 L3.8-3.8" stroke="#d0d0d0" stroke-width="1.2"/></svg>
<svg style="left:535.8px;top:653.45px;" width="16" height="16" viewBox="-8.0 -8.0 16 16"><path d="M0.9 0.7 C-0.6 1.3 -1.7-0.6 -0.3-1.6 C1.6-2.8 3.5-0.2 2.2 1.8 C0.4 4.2 -3.8 3.2 -4.3 0.2 C-4.7-2.6 -2.2-4.6 0.6-4.3 C2.4-4.1 3.9-3 4.3-1.2 C4.6 0 4.3 1.2 3.9 1.9" fill="none" stroke="#a8a8a8" stroke-width="1.1" stroke-linecap="round"/></svg>
<div style="left:552.8px;top:656.45px;width:65.4px;height:9.6px;background:#1d1d1d;"></div>
<span style="left:558.6px;top:655.55px;font-size:9px;line-height:12px;color:#cdcdcd;-webkit-text-stroke:0.22px #cdcdcd;">None</span>
<svg style="left:608.6px;top:659.15px" width="7" height="5" viewBox="0 0 7 5"><path d="M0.6 0.8 L3.5 3.8 L6.4 0.8" fill="none" stroke="#c0c0c0" stroke-width="1"/></svg>
<svg style="left:16.0px;top:665.75px;" width="16" height="16" viewBox="-8.0 -8.0 16 16"><path d="M-4.8 0 C-2.6-3.4 2.6-3.4 4.8 0 C2.6 3.4 -2.6 3.4 -4.8 0 Z" fill="#d6d6d6"/><circle r="1.9" fill="#232323"/><circle r="0.9" fill="#d6d6d6"/></svg>
<svg style="left:70px;top:670.25px" width="5" height="7" viewBox="0 0 5 7"><path d="M0.8 0.6 L3.8 3.5 L0.8 6.4" fill="none" stroke="#b0b0b0" stroke-width="1"/></svg>
<div style="left:78.2px;top:669.15px;width:9.2px;height:9.2px;background:#b7b5e0;"></div>
<span style="left:94px;top:668.05px;font-size:8.8px;line-height:12px;color:#cdcdcd;-webkit-text-stroke:0.2px #cdcdcd;">20</span>
<svg style="left:116.0px;top:668.55px" width="9.6" height="10.6" viewBox="0 0 9.6 10.6"><path d="M0.5 1.5 Q0.5 0.5 1.5 0.5 H6.4 L9 3 V9.2 Q9 10.2 8 10.2 H1.5 Q0.5 10.2 0.5 9.2 Z" fill="#2a0b07" stroke="#8e4a0c" stroke-width="0.9"/><path d="M2.2 5.8 L4.4 1.8 L6.2 4.4 L7.4 5.8 Z" fill="#ffa61c"/><rect x="3.8" y="7.2" width="1.7" height="1.5" fill="#f2d8c8"/></svg>
<span style="left:129.6px;top:667.75px;font-size:8.7px;line-height:12px;color:#cdcdcd;-webkit-text-stroke:0.25px #cdcdcd;">Extra Layer</span>
<div style="left:316.2px;top:668.95px;width:32.6px;height:9.6px;background:#1d1d1d;"></div>
<span style="left:321.2px;top:668.15px;font-size:9px;line-height:12px;color:#cdcdcd;-webkit-text-stroke:0.22px #cdcdcd;width:16.6px;overflow:hidden;">Norr</span>
<svg style="left:339.6px;top:671.65px" width="7" height="5" viewBox="0 0 7 5"><path d="M0.6 0.8 L3.5 3.8 L6.4 0.8" fill="none" stroke="#c0c0c0" stroke-width="1"/></svg>
<svg style="left:362.6px;top:665.95px;" width="16" height="16" viewBox="-8.0 -8.0 16 16"><path d="M0.9 0.7 C-0.6 1.3 -1.7-0.6 -0.3-1.6 C1.6-2.8 3.5-0.2 2.2 1.8 C0.4 4.2 -3.8 3.2 -4.3 0.2 C-4.7-2.6 -2.2-4.6 0.6-4.3 C2.4-4.1 3.9-3 4.3-1.2 C4.6 0 4.3 1.2 3.9 1.9" fill="none" stroke="#a8a8a8" stroke-width="1.1" stroke-linecap="round"/></svg>
<div style="left:378.1px;top:668.95px;width:32.5px;height:9.6px;background:#1d1d1d;"></div>
<span style="left:382.8px;top:668.15px;font-size:9px;line-height:12px;color:#cdcdcd;-webkit-text-stroke:0.22px #cdcdcd;width:17px;overflow:hidden;">No M</span>
<svg style="left:401.40000000000003px;top:671.65px" width="7" height="5" viewBox="0 0 7 5"><path d="M0.6 0.8 L3.5 3.8 L6.4 0.8" fill="none" stroke="#c0c0c0" stroke-width="1"/></svg>
<svg style="left:435.6px;top:665.75px;" width="16" height="16" viewBox="-8.0 -8.0 16 16"><path d="M-3.7 1.5 A3.7 4.3 0 0 1 3.7 1.5 Z" fill="#bcbcbc" stroke="#101010" stroke-width="0.9"/><rect x="-2.2" y="-0.9" width="1.3" height="0.8" fill="#2a2a2a"/><rect x="0.9" y="-0.9" width="1.3" height="0.8" fill="#2a2a2a"/><rect x="-0.65" y="-1" width="1.3" height="4.6" rx="0.6" fill="#dcdcdc"/><rect x="-4.7" y="1.5" width="2.4" height="1.3" fill="#c8c8c8"/><rect x="2.3" y="1.5" width="2.4" height="1.3" fill="#c8c8c8"/></svg>
<svg style="left:457.4px;top:665.75px;" width="16" height="16" viewBox="-8.0 -8.0 16 16"><path d="M-3.6 3.8 L3.8-3.8" stroke="#d0d0d0" stroke-width="1.2"/></svg>
<svg style="left:535.8px;top:665.95px;" width="16" height="16" viewBox="-8.0 -8.0 16 16"><path d="M0.9 0.7 C-0.6 1.3 -1.7-0.6 -0.3-1.6 C1.6-2.8 3.5-0.2 2.2 1.8 C0.4 4.2 -3.8 3.2 -4.3 0.2 C-4.7-2.6 -2.2-4.6 0.6-4.3 C2.4-4.1 3.9-3 4.3-1.2 C4.6 0 4.3 1.2 3.9 1.9" fill="none" stroke="#a8a8a8" stroke-width="1.1" stroke-linecap="round"/></svg>
<div style="left:552.8px;top:668.95px;width:65.4px;height:9.6px;background:#1d1d1d;"></div>
<span style="left:558.6px;top:668.05px;font-size:9px;line-height:12px;color:#cdcdcd;-webkit-text-stroke:0.22px #cdcdcd;">None</span>
<svg style="left:608.6px;top:671.65px" width="7" height="5" viewBox="0 0 7 5"><path d="M0.6 0.8 L3.5 3.8 L6.4 0.8" fill="none" stroke="#c0c0c0" stroke-width="1"/></svg>
<svg style="left:27.0px;top:678.25px;" width="16" height="16" viewBox="-8.0 -8.0 16 16"><path d="M-4.6-1.6 H-2.8 L-0.4-4 V4 L-2.8 1.6 H-4.6 Z" fill="#d6d6d6"/><path d="M1-4.2 A4.3 4.3 0 0 1 1 4.2 Z" fill="#d6d6d6"/><path d="M1.2-2.2 A2.3 2.3 0 0 1 1.2 2.2" fill="none" stroke="#232323" stroke-width="0.8"/></svg>
<svg style="left:70px;top:682.75px" width="5" height="7" viewBox="0 0 5 7"><path d="M0.8 0.6 L3.8 3.5 L0.8 6.4" fill="none" stroke="#b0b0b0" stroke-width="1"/></svg>
<div style="left:78.2px;top:681.65px;width:9.2px;height:9.2px;background:#38aeb0;"></div>
<span style="left:94px;top:680.55px;font-size:8.8px;line-height:12px;color:#cdcdcd;-webkit-text-stroke:0.2px #cdcdcd;">21</span>
<svg style="left:117px;top:680.85px" width="8" height="11" viewBox="0 0 8 11"><path d="M0.4 0.4 H5.2 L7.6 2.8 V10.6 H0.4 Z" fill="#f0f0f0"/><circle cx="3.8" cy="6" r="2.1" fill="#2a2a2a"/><circle cx="3.8" cy="6" r="0.9" fill="#c060a0"/></svg>
<span style="left:129.6px;top:680.25px;font-size:8.7px;line-height:12px;color:#cdcdcd;-webkit-text-stroke:0.25px #cdcdcd;">[VM video - part 1.mp3]</span>
<svg style="left:435.6px;top:678.25px;" width="16" height="16" viewBox="-8.0 -8.0 16 16"><path d="M-3.7 1.5 A3.7 4.3 0 0 1 3.7 1.5 Z" fill="#bcbcbc" stroke="#101010" stroke-width="0.9"/><rect x="-2.2" y="-0.9" width="1.3" height="0.8" fill="#2a2a2a"/><rect x="0.9" y="-0.9" width="1.3" height="0.8" fill="#2a2a2a"/><rect x="-0.65" y="-1" width="1.3" height="4.6" rx="0.6" fill="#dcdcdc"/><rect x="-4.7" y="1.5" width="2.4" height="1.3" fill="#c8c8c8"/><rect x="2.3" y="1.5" width="2.4" height="1.3" fill="#c8c8c8"/></svg>
<svg style="left:457.4px;top:678.25px;" width="16" height="16" viewBox="-8.0 -8.0 16 16"><path d="M-3.6 3.8 L3.8-3.8" stroke="#d0d0d0" stroke-width="1.2"/></svg>
<svg style="left:535.8px;top:678.45px;" width="16" height="16" viewBox="-8.0 -8.0 16 16"><path d="M0.9 0.7 C-0.6 1.3 -1.7-0.6 -0.3-1.6 C1.6-2.8 3.5-0.2 2.2 1.8 C0.4 4.2 -3.8 3.2 -4.3 0.2 C-4.7-2.6 -2.2-4.6 0.6-4.3 C2.4-4.1 3.9-3 4.3-1.2 C4.6 0 4.3 1.2 3.9 1.9" fill="none" stroke="#a8a8a8" stroke-width="1.1" stroke-linecap="round"/></svg>
<div style="left:552.8px;top:681.45px;width:65.4px;height:9.6px;background:#1d1d1d;"></div>
<span style="left:558.6px;top:680.55px;font-size:9px;line-height:12px;color:#cdcdcd;-webkit-text-stroke:0.22px #cdcdcd;">None</span>
<svg style="left:608.6px;top:684.15px" width="7" height="5" viewBox="0 0 7 5"><path d="M0.6 0.8 L3.5 3.8 L6.4 0.8" fill="none" stroke="#c0c0c0" stroke-width="1"/></svg>
<svg style="left:27.0px;top:690.75px;" width="16" height="16" viewBox="-8.0 -8.0 16 16"><path d="M-4.6-1.6 H-2.8 L-0.4-4 V4 L-2.8 1.6 H-4.6 Z" fill="#d6d6d6"/><path d="M1-4.2 A4.3 4.3 0 0 1 1 4.2 Z" fill="#d6d6d6"/><path d="M1.2-2.2 A2.3 2.3 0 0 1 1.2 2.2" fill="none" stroke="#232323" stroke-width="0.8"/></svg>
<svg style="left:70px;top:695.25px" width="5" height="7" viewBox="0 0 5 7"><path d="M0.8 0.6 L3.8 3.5 L0.8 6.4" fill="none" stroke="#b0b0b0" stroke-width="1"/></svg>
<div style="left:78.2px;top:694.15px;width:9.2px;height:9.2px;background:#b9dcc0;"></div>
<span style="left:94px;top:693.05px;font-size:8.8px;line-height:12px;color:#cdcdcd;-webkit-text-stroke:0.2px #cdcdcd;">22</span>
<svg style="left:117px;top:693.35px" width="8" height="11" viewBox="0 0 8 11"><path d="M0.4 0.4 H5.2 L7.6 2.8 V10.6 H0.4 Z" fill="#f0f0f0"/><circle cx="3.8" cy="6" r="2.1" fill="#2a2a2a"/><circle cx="3.8" cy="6" r="0.9" fill="#c060a0"/></svg>
<span style="left:129.6px;top:692.75px;font-size:8.7px;line-height:12px;color:#cdcdcd;-webkit-text-stroke:0.25px #cdcdcd;">[Fast-writing-with-a-pen.mp3]</span>
<svg style="left:435.6px;top:690.75px;" width="16" height="16" viewBox="-8.0 -8.0 16 16"><path d="M-3.7 1.5 A3.7 4.3 0 0 1 3.7 1.5 Z" fill="#bcbcbc" stroke="#101010" stroke-width="0.9"/><rect x="-2.2" y="-0.9" width="1.3" height="0.8" fill="#2a2a2a"/><rect x="0.9" y="-0.9" width="1.3" height="0.8" fill="#2a2a2a"/><rect x="-0.65" y="-1" width="1.3" height="4.6" rx="0.6" fill="#dcdcdc"/><rect x="-4.7" y="1.5" width="2.4" height="1.3" fill="#c8c8c8"/><rect x="2.3" y="1.5" width="2.4" height="1.3" fill="#c8c8c8"/></svg>
<svg style="left:457.4px;top:690.75px;" width="16" height="16" viewBox="-8.0 -8.0 16 16"><path d="M-3.6 3.8 L3.8-3.8" stroke="#d0d0d0" stroke-width="1.2"/></svg>
<svg style="left:535.8px;top:690.95px;" width="16" height="16" viewBox="-8.0 -8.0 16 16"><path d="M0.9 0.7 C-0.6 1.3 -1.7-0.6 -0.3-1.6 C1.6-2.8 3.5-0.2 2.2 1.8 C0.4 4.2 -3.8 3.2 -4.3 0.2 C-4.7-2.6 -2.2-4.6 0.6-4.3 C2.4-4.1 3.9-3 4.3-1.2 C4.6 0 4.3 1.2 3.9 1.9" fill="none" stroke="#a8a8a8" stroke-width="1.1" stroke-linecap="round"/></svg>
<div style="left:552.8px;top:693.95px;width:65.4px;height:9.6px;background:#1d1d1d;"></div>
<span style="left:558.6px;top:693.05px;font-size:9px;line-height:12px;color:#cdcdcd;-webkit-text-stroke:0.22px #cdcdcd;">None</span>
<svg style="left:608.6px;top:696.65px" width="7" height="5" viewBox="0 0 7 5"><path d="M0.6 0.8 L3.5 3.8 L6.4 0.8" fill="none" stroke="#c0c0c0" stroke-width="1"/></svg>
</div></div>
<div style="left:15px;top:705px;width:618px;height:13px;background:#232323;"></div>
<div style="left:15px;top:704.6px;width:618px;height:1px;background:#1a1a1a;"></div>
<svg style="left:17.2px;top:704.0px;" width="16" height="16" viewBox="-8.0 -8.0 16 16"><g transform="rotate(-28)"><rect x="-4.4" y="-3.4" width="8.8" height="4" rx="2" fill="none" stroke="#2d8ceb" stroke-width="0.9"/><rect x="-4.4" y="-1.6" width="8.8" height="4" rx="2" fill="none" stroke="#2d8ceb" stroke-width="0.9"/><rect x="-4.4" y="0.2" width="8.8" height="4" rx="2" fill="none" stroke="#2d8ceb" stroke-width="0.9"/></g></svg>
<div style="left:33.2px;top:706.2px;width:11.6px;height:11.2px;background:#1b1b1b;border-radius:2px;"></div>
<svg style="left:31.0px;top:704.0px;" width="16" height="16" viewBox="-8.0 -8.0 16 16"><circle cx="-1.4" cy="-1.2" r="2.5" fill="none" stroke="#2d8ceb" stroke-width="0.95"/><rect x="-1.4" y="-0.8" width="4.8" height="4.4" rx="0.9" fill="#2d8ceb"/></svg>
<svg style="left:45.2px;top:704.0px;" width="16" height="16" viewBox="-8.0 -8.0 16 16"><path d="M-1.4-3.8 C-3.2-3.8 -1.8-0.5 -3.8 0 C-1.8 0.5 -3.2 3.8 -1.4 3.8 M1.4-3.8 C3.2-3.8 1.8-0.5 3.8 0 C1.8 0.5 3.2 3.8 1.4 3.8" fill="none" stroke="#b4b4b4" stroke-width="1"/></svg>
<svg style="left:59.400000000000006px;top:704.0px;" width="16" height="16" viewBox="-8.0 -8.0 16 16"><circle cx="-1.4" cy="-1.6" r="2.2" fill="#b4b4b4"/><path d="M-5 3.6 C-4.4 0.8 1.6 0.8 2.2 3.6 Z" fill="#b4b4b4"/><path d="M2.4-2.4 L4.8-0.8 L2.4 0.8 Z" fill="#b4b4b4"/></svg>
<span style="left:93.2px;top:706.2px;font-size:8.2px;line-height:12px;color:#a0a0a0;">Frame Render Time:</span>
<span style="left:171.4px;top:706.2px;font-size:8.2px;line-height:12px;color:#4fc24f;">43ms</span>
<div style="left:632.6px;top:519.6px;width:1px;height:185.4px;background:#121212;"></div>
<div style="left:633.2px;top:520.4px;width:618.8px;height:8.6px;background:#171717;"></div>
<div style="left:638.8px;top:522px;width:607.6px;height:6.2px;background:#6b6b6b;"></div>
<svg style="left:633.4px;top:521.6px" width="6" height="7" viewBox="0 0 6 7"><path d="M5.6 0 V7 H3.6 Q0.4 7 0.4 3.5 Q0.4 0 3.6 0 Z" fill="#2d8ceb"/></svg>
<svg style="left:1246.4px;top:521.6px" width="6" height="7" viewBox="0 0 6 7"><path d="M0.2 0 V7 H2.2 Q5.6 7 5.6 3.5 Q5.6 0 2.2 0 Z" fill="#2d8ceb"/></svg>
<div style="left:732.6px;top:522px;width:1px;height:6.2px;background:#4a96e6;"></div>
<div style="left:633.2px;top:529px;width:618.8px;height:13.8px;background:#191919;"></div>
<div style="left:633.2px;top:529px;width:618.8px;height:14px;overflow:hidden;">
<div style="left:5.70px;top:9.6px;width:1px;height:3.8px;background:#8a8a8a;"></div>
<span style="left:-3.2px;top:-1.2px;font-size:8.2px;line-height:12px;color:#b4b4b4;">0:00f</span>
<div style="left:43.67px;top:9.6px;width:1px;height:3.8px;background:#8a8a8a;"></div>
<span style="left:23.17px;top:-1.2px;width:40px;text-align:center;font-size:8.2px;line-height:12px;color:#b4b4b4;">00:15f</span>
<div style="left:81.64px;top:9.6px;width:1px;height:3.8px;background:#8a8a8a;"></div>
<span style="left:61.14px;top:-1.2px;width:40px;text-align:center;font-size:8.2px;line-height:12px;color:#b4b4b4;">01:00f</span>
<div style="left:119.61px;top:9.6px;width:1px;height:3.8px;background:#8a8a8a;"></div>
<span style="left:99.11px;top:-1.2px;width:40px;text-align:center;font-size:8.2px;line-height:12px;color:#b4b4b4;">01:15f</span>
<div style="left:157.58px;top:9.6px;width:1px;height:3.8px;background:#8a8a8a;"></div>
<span style="left:137.08px;top:-1.2px;width:40px;text-align:center;font-size:8.2px;line-height:12px;color:#b4b4b4;">02:00f</span>
<div style="left:195.55px;top:9.6px;width:1px;height:3.8px;background:#8a8a8a;"></div>
<span style="left:175.05px;top:-1.2px;width:40px;text-align:center;font-size:8.2px;line-height:12px;color:#b4b4b4;">02:15f</span>
<div style="left:233.52px;top:9.6px;width:1px;height:3.8px;background:#8a8a8a;"></div>
<span style="left:213.02px;top:-1.2px;width:40px;text-align:center;font-size:8.2px;line-height:12px;color:#b4b4b4;">03:00f</span>
<div style="left:271.49px;top:9.6px;width:1px;height:3.8px;background:#8a8a8a;"></div>
<span style="left:250.99px;top:-1.2px;width:40px;text-align:center;font-size:8.2px;line-height:12px;color:#b4b4b4;">03:15f</span>
<div style="left:309.46px;top:9.6px;width:1px;height:3.8px;background:#8a8a8a;"></div>
<span style="left:288.96px;top:-1.2px;width:40px;text-align:center;font-size:8.2px;line-height:12px;color:#b4b4b4;">04:00f</span>
<div style="left:347.43px;top:9.6px;width:1px;height:3.8px;background:#8a8a8a;"></div>
<span style="left:326.93px;top:-1.2px;width:40px;text-align:center;font-size:8.2px;line-height:12px;color:#b4b4b4;">04:15f</span>
<div style="left:385.40px;top:9.6px;width:1px;height:3.8px;background:#8a8a8a;"></div>
<span style="left:364.90px;top:-1.2px;width:40px;text-align:center;font-size:8.2px;line-height:12px;color:#b4b4b4;">05:00f</span>
<div style="left:423.37px;top:9.6px;width:1px;height:3.8px;background:#8a8a8a;"></div>
<span style="left:402.87px;top:-1.2px;width:40px;text-align:center;font-size:8.2px;line-height:12px;color:#b4b4b4;">05:15f</span>
<div style="left:461.34px;top:9.6px;width:1px;height:3.8px;background:#8a8a8a;"></div>
<span style="left:440.84px;top:-1.2px;width:40px;text-align:center;font-size:8.2px;line-height:12px;color:#b4b4b4;">06:00f</span>
<div style="left:499.31px;top:9.6px;width:1px;height:3.8px;background:#8a8a8a;"></div>
<span style="left:478.81px;top:-1.2px;width:40px;text-align:center;font-size:8.2px;line-height:12px;color:#b4b4b4;">06:15f</span>
<div style="left:537.28px;top:9.6px;width:1px;height:3.8px;background:#8a8a8a;"></div>
<span style="left:516.78px;top:-1.2px;width:40px;text-align:center;font-size:8.2px;line-height:12px;color:#b4b4b4;">07:00f</span>
<div style="left:575.25px;top:9.6px;width:1px;height:3.8px;background:#8a8a8a;"></div>
<span style="left:554.75px;top:-1.2px;width:40px;text-align:center;font-size:8.2px;line-height:12px;color:#b4b4b4;">07:15f</span>
<div style="left:613.22px;top:9.6px;width:1px;height:3.8px;background:#8a8a8a;"></div>
<span style="left:602.52px;top:-1.2px;font-size:8.2px;line-height:12px;color:#b4b4b4;">08:00f</span>
</div>
<div style="left:633.2px;top:542.8px;width:618.8px;height:0.8px;background:#111;"></div>
<div style="left:638.8px;top:543.4px;width:607.6px;height:10.6px;background:#606060;"></div>
<svg style="left:633.6px;top:543.4px" width="5.4" height="10.8" viewBox="0 0 5.4 10.8"><path d="M5.4 0 V10.8 H3 Q0.4 10.8 0.4 8 V2.8 Q0.4 0 3 0 Z" fill="#2d8ceb"/></svg>
<svg style="left:1246.6px;top:543.4px" width="5" height="10.8" viewBox="0 0 5 10.8"><path d="M0 0 V10.8 H2 Q4.6 10.8 4.6 8 V2.8 Q4.6 0 2 0 Z" fill="#2d8ceb"/></svg>
<div style="left:633.2px;top:554px;width:618.8px;height:3.8px;background:#1a1a1a;"></div>
<div style="left:638.8px;top:554.8px;width:28.100000000000023px;height:2.4px;background:#0ccc16;"></div>
<div style="left:702px;top:554.8px;width:37.89999999999998px;height:2.4px;background:#0ccc16;"></div>
<div style="left:856.6px;top:554.8px;width:2.6000000000000227px;height:2.4px;background:#0ccc16;"></div>
<div style="left:866.9px;top:554.8px;width:42.5px;height:2.4px;background:#0ccc16;"></div>
<div style="left:912px;top:554.8px;width:5.7000000000000455px;height:2.4px;background:#0ccc16;"></div>
<div style="left:935px;top:554.8px;width:2.6000000000000227px;height:2.4px;background:#0ccc16;"></div>
<div style="left:939.6px;top:554.8px;width:5.199999999999932px;height:2.4px;background:#0ccc16;"></div>
<div style="left:947.3px;top:554.8px;width:5.300000000000068px;height:2.4px;background:#0ccc16;"></div>
<div style="left:1014px;top:554.8px;width:5px;height:2.4px;background:#0ccc16;"></div>
<div style="left:1026px;top:554.8px;width:220.4000000000001px;height:2.4px;background:#0ccc16;"></div>
<div style="left:952.6px;top:554.8px;width:61.4px;height:2.4px;background:#1a2ad8;"></div>
<div style="left:962.8px;top:554.8px;width:2.2px;height:2.4px;background:#0ccc16;"></div>
<div style="left:633.2px;top:557.8px;width:618.8px;height:147.2px;background:#383838;"></div>
<div style="left:633.2px;top:557.8px;width:5.6px;height:147.2px;background:#323232;"></div>
<div style="left:638.8px;top:557.8px;width:76.2px;height:8.9px;background:#3e3e3e;"></div>
<div style="left:715px;top:557.8px;width:536.4000000000001px;height:8.9px;background:#7e3a3b;box-sizing:border-box;border-top:1px solid #8a4446;border-bottom:1px solid #864042;"></div>
<div style="left:638.8px;top:568.1px;width:607.6000000000001px;height:11.1px;background:#767689;box-sizing:border-box;border-top:1px solid #82829a;border-bottom:1px solid #7e7e94;"></div>
<div style="left:638.8px;top:580.6px;width:607.6000000000001px;height:11.1px;background:#767689;box-sizing:border-box;border-top:1px solid #82829a;border-bottom:1px solid #7e7e94;"></div>
<div style="left:638.8px;top:593.1px;width:607.6000000000001px;height:11.1px;background:#767689;box-sizing:border-box;border-top:1px solid #82829a;border-bottom:1px solid #7e7e94;"></div>
<div style="left:638.8px;top:605.6px;width:607.6000000000001px;height:11.1px;background:#767689;box-sizing:border-box;border-top:1px solid #82829a;border-bottom:1px solid #7e7e94;"></div>
<div style="left:638.8px;top:618.1px;width:607.6000000000001px;height:11.1px;background:#767689;box-sizing:border-box;border-top:1px solid #82829a;border-bottom:1px solid #7e7e94;"></div>
<div style="left:638.8px;top:630.6px;width:607.6000000000001px;height:11.1px;background:#767689;box-sizing:border-box;border-top:1px solid #82829a;border-bottom:1px solid #7e7e94;"></div>
<div style="left:638.8px;top:643.1px;width:607.6000000000001px;height:11.1px;background:#767689;box-sizing:border-box;border-top:1px solid #82829a;border-bottom:1px solid #7e7e94;"></div>
<div style="left:638.8px;top:655.6px;width:607.6000000000001px;height:11.1px;background:#767689;box-sizing:border-box;border-top:1px solid #82829a;border-bottom:1px solid #7e7e94;"></div>
<div style="left:638.8px;top:668.1px;width:607.6000000000001px;height:11.1px;background:#767689;box-sizing:border-box;border-top:1px solid #82829a;border-bottom:1px solid #7e7e94;"></div>
<div style="left:634px;top:680.6px;width:4.8px;height:11.1px;background:#4a7c7c;"></div>
<div style="left:638.8px;top:680.6px;width:582.0px;height:11.1px;background:#407373;box-sizing:border-box;border-top:1px solid #4a8c8c;border-bottom:1px solid #4a8c8c;"></div>
<div style="left:1220.8px;top:680.6px;width:30.799999999999955px;height:11.1px;background:#3c4b4a;box-sizing:border-box;border-top:1px solid #3f6e70;border-bottom:1px solid #3f6e70;"></div>
<div style="left:638.8px;top:693.1px;width:76px;height:11.6px;background:#3e3e3e;"></div>
<div style="left:714.8px;top:693.1px;width:101.2px;height:11.6px;background:#838c80;"></div>
<div style="left:816px;top:693.1px;width:435.5999999999999px;height:11.6px;background:#4f514e;box-sizing:border-box;border-top:1px solid #666c64;border-bottom:1px solid #70786e;"></div>
<svg style="left:714.8px;top:693.1px" width="4" height="4" viewBox="0 0 4 4"><path d="M0 0H3.6L0 3.6Z" fill="#4a4f48"/></svg>
<div style="left:732.6px;top:541px;width:1px;height:164px;background:#3d8fe0;"></div>
<svg style="left:728.6px;top:532.2px" width="9.2" height="9.6" viewBox="0 0 9.2 9.6"><path d="M0.3 1.2 Q0.3 0.3 1.2 0.3 H8 Q8.9 0.3 8.9 1.2 V4.4 L4.6 9.4 L0.3 4.4 Z" fill="#2d8ceb"/><path d="M2.6 3.6 H6.6 L4.6 6 Z" fill="#1b5da8"/></svg>
<div style="left:633.2px;top:705px;width:631.4px;height:13px;background:#232323;"></div>
<svg style="left:636.4px;top:708.4px" width="8" height="5" viewBox="0 0 8 5"><path d="M0.4 4.6 L2.6 1.4 L4 3 L5 2 L7.4 4.6 Z" fill="#c8c8c8"/></svg>
<div style="left:658px;top:711.2px;width:30px;height:1px;background:#3c3c3c;"></div>
<svg style="left:652.4px;top:707.8px" width="8" height="8" viewBox="0 0 8 8"><circle cx="4" cy="4" r="2.8" fill="#232323" stroke="#c8c8c8" stroke-width="1.1"/></svg>
<svg style="left:696.4px;top:707.4px" width="13" height="7" viewBox="0 0 13 7"><path d="M0.4 6.6 L4 1.6 L6 4.2 L8.2 0.6 L12.6 6.6 Z" fill="#c8c8c8"/></svg>
<div style="left:1252px;top:519.6px;width:12.6px;height:198.4px;background:#232323;"></div>
<svg style="left:1253.6px;top:545px" width="9.4" height="10.4" viewBox="0 0 9.4 10.4"><path d="M0.4 0.4 H9 V6.2 L4.7 10 L0.4 6.2 Z" fill="#b4b4b4"/></svg>
<svg style="left:1252.6px;top:559.6px" width="10.6" height="9.4" viewBox="0 0 10.6 9.4"><path d="M0.6 4.4 L4.4 0.8 V3 H6 V6 H4.4 V8 Z" fill="none" stroke="#d8d8d8" stroke-width="0.9"/><rect x="6.4" y="2" width="3.6" height="4.6" fill="#d8d8d8"/></svg>
<div style="left:1252.4px;top:632px;width:10.4px;height:72.4px;background:#343434;border-radius:5.2px;"></div>
</div></body></html>
